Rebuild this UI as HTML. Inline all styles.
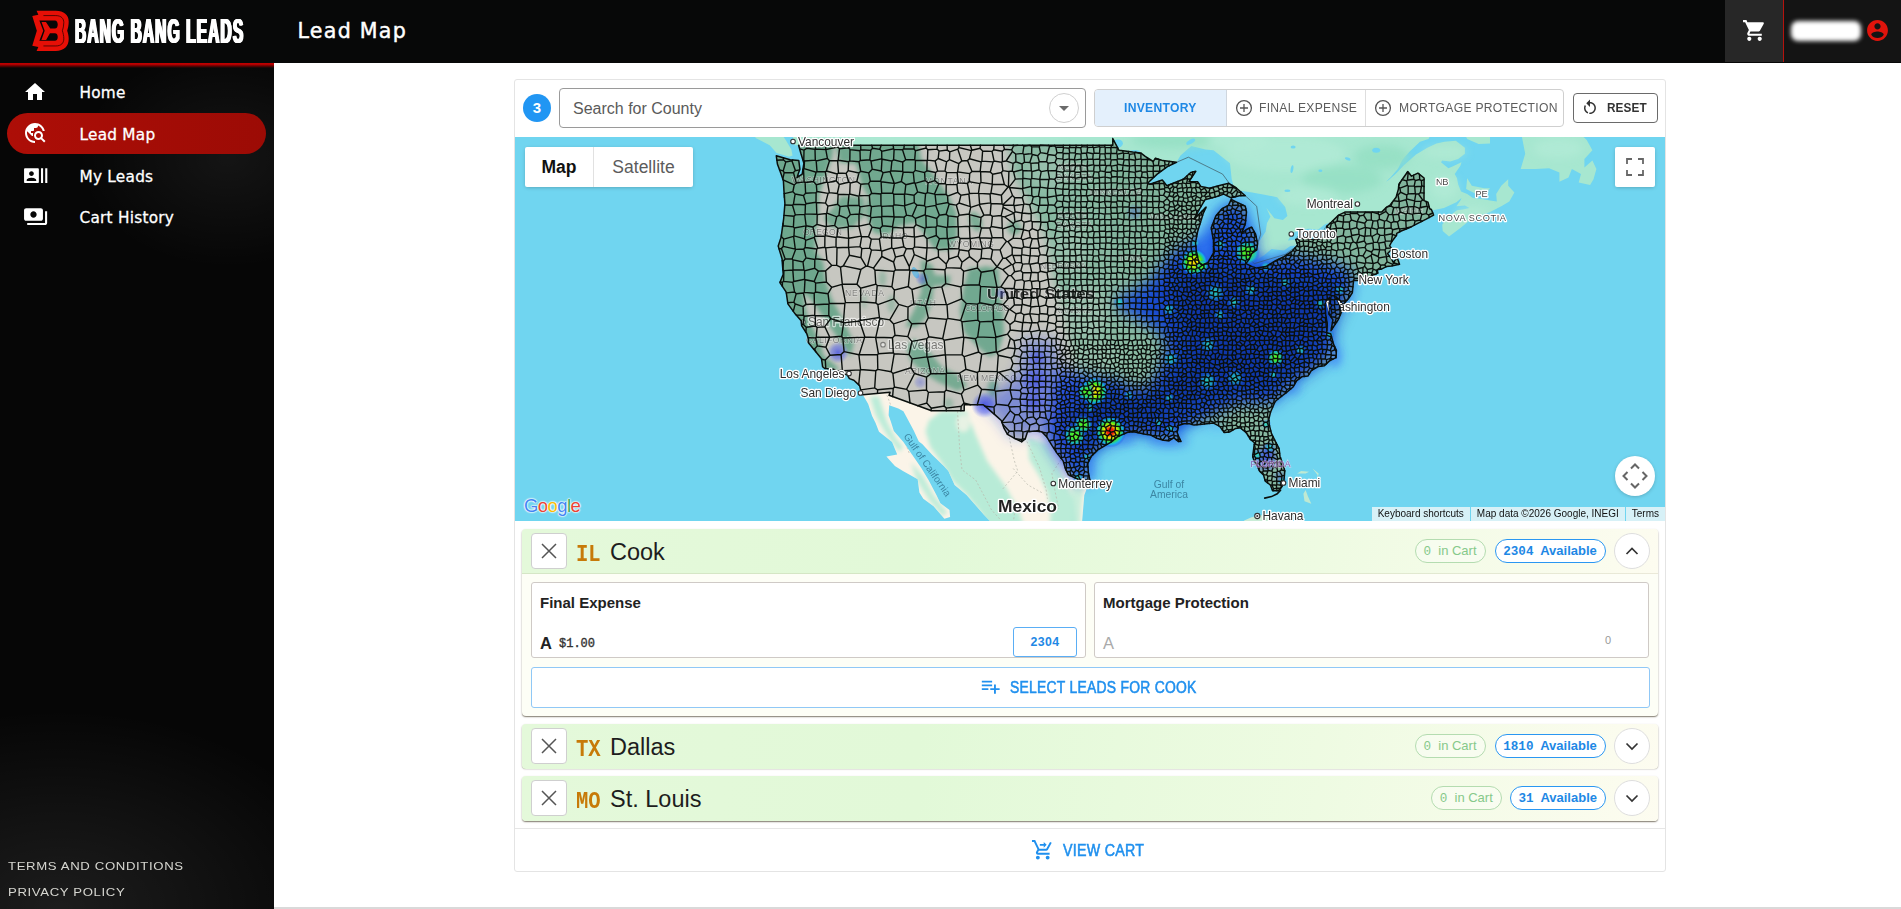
<!DOCTYPE html>
<html lang="en">
<head>
<meta charset="utf-8">
<title>Lead Map</title>
<style>
*{box-sizing:border-box;margin:0;padding:0}
html,body{width:1901px;height:909px;overflow:hidden;background:#fff;font-family:"Liberation Sans",sans-serif;color:#222}
.abs{position:absolute}
#hdr{position:absolute;left:0;top:0;width:1901px;height:63px;background:#070808}
#side{position:absolute;left:0;top:63px;width:274px;height:846px;background:#060606;
 background-image:radial-gradient(ellipse 150px 110px at 228px 95px,rgba(255,255,255,.06),rgba(255,255,255,0) 100%),radial-gradient(ellipse 300px 200px at 60px 846px,rgba(255,255,255,.09),rgba(255,255,255,0) 100%)}
#redline{position:absolute;left:0;top:63px;width:274px;height:5px;background:linear-gradient(#c40000 0%,#b40000 28%,rgba(130,0,0,.75) 60%,rgba(50,0,0,0) 100%)}
.logotxt{position:absolute;left:75.3px;top:8.5px;height:44px;line-height:44px;font-weight:bold;font-size:35.6px;color:#fff;white-space:nowrap;transform-origin:0 50%;transform:scaleX(.437);letter-spacing:2.5px;text-shadow:-2px 0 #fff,2px 0 #fff,-1px 0 #fff,1px 0 #fff}
.title{position:absolute;left:297.5px;top:15px;height:32px;line-height:32px;font-family:"DejaVu Sans","Liberation Sans",sans-serif;font-size:20.6px;letter-spacing:1.25px;color:#fff;white-space:nowrap;-webkit-text-stroke:.45px #fff}
.nav{position:absolute;left:7px;width:259px;height:41px;border-radius:21px;color:#fff;font-family:"DejaVu Sans","Liberation Sans",sans-serif;font-size:15.3px;letter-spacing:.25px;line-height:41px;white-space:nowrap}
.nav span{position:absolute;left:72.5px;top:2.2px;-webkit-text-stroke:.3px #fff}
.nav svg{position:absolute;left:18px;top:10px;width:21px;height:21px;fill:#fff}
.nav.on{background:#a30c06;background-image:linear-gradient(90deg,#ad0e07,#9c0b05)}
.foot{position:absolute;left:8px;color:#d6d6d0;font-size:11.5px;letter-spacing:.55px;white-space:nowrap;transform-origin:0 50%;transform:scaleX(1.145)}
#cartbtn{position:absolute;left:1725px;top:0;width:58px;height:62px;background:#272727}
#cartline{position:absolute;left:1783px;top:0;width:1px;height:62px;background:#b5120d}
#userarea{position:absolute;left:1784px;top:0;width:117px;height:62px;background:#141414}
#blurname{position:absolute;left:1791px;top:21px;width:70px;height:20px;border-radius:7px;background:#fff;filter:blur(2.2px)}
#card{position:absolute;left:514px;top:79px;width:1152px;height:793px;border:1px solid #e4e4e4;border-radius:3px;background:#fff}
#badge{position:absolute;left:523px;top:94px;width:28px;height:28px;border-radius:14px;background:#2196f3;color:#fff;font-weight:bold;font-size:15px;line-height:28px;text-align:center}
#search{position:absolute;left:559px;top:88px;width:527px;height:40px;border:1px solid #9a9a9a;border-radius:4px;background:#fff}
#search span{position:absolute;left:13px;top:1px;line-height:38px;font-size:16px;color:#5a5a5a;white-space:nowrap}
#ddc{position:absolute;left:1049px;top:93px;width:30px;height:30px;border-radius:15px;border:1px solid #d0d0d0;background:#fff}
#ddc i{position:absolute;left:9px;top:12px;width:0;height:0;border-left:5px solid transparent;border-right:5px solid transparent;border-top:5px solid #6b6b6b}
#tg{position:absolute;left:1094px;top:89px;width:470px;height:38px;border:1px solid #cfcfcf;border-radius:4px;background:#fff;overflow:hidden}
#tg .seg{position:absolute;top:0;height:36px;line-height:35.4px;font-size:13.2px;letter-spacing:.3px;color:#5c5c5c;white-space:nowrap}
#tg .seg b{font-weight:normal;position:absolute;top:0;transform-origin:0 50%;transform:scaleX(.92)}
#tg .seg svg{position:absolute;top:9px;width:18px;height:18px}
#reset{position:absolute;left:1573px;top:93px;width:85px;height:30px;border:1px solid #6a6a6a;border-radius:4px;background:#fff}
#reset span{position:absolute;left:33px;top:0;line-height:27.6px;font-size:13px;font-weight:bold;letter-spacing:.1px;color:#333;transform-origin:0 50%;transform:scaleX(.905)}
#map{position:absolute;left:515px;top:137px;width:1150px;height:384px;overflow:hidden;background:#70d5f0}
#map svg.m{position:absolute;left:0;top:0}
.gm{font-family:"Liberation Sans",sans-serif}
#mtype{position:absolute;left:10px;top:10px;width:168px;height:40px;background:#fff;box-shadow:0 1px 4px -1px rgba(0,0,0,.3);border-radius:2px}
#mtype b{position:absolute;left:0;top:0;width:68px;text-align:center;line-height:40px;font-size:17.5px;color:#111}
#mtype i{position:absolute;left:68px;top:0;width:1px;height:40px;background:#e1e1e1}
#mtype span{position:absolute;left:69px;top:0;width:99px;text-align:center;line-height:40px;font-size:17.5px;color:#5c5c5c}
#fs{position:absolute;left:1100px;top:10px;width:40px;height:40px;background:#fff;border-radius:2px;box-shadow:0 1px 4px -1px rgba(0,0,0,.3)}
#cam{position:absolute;left:1100px;top:319px;width:40px;height:40px;background:#fff;border-radius:20px;box-shadow:0 1px 4px -1px rgba(0,0,0,.3)}
#attr{position:absolute;right:0;bottom:0;height:14px;line-height:14px;font-size:10px;color:#111;white-space:nowrap}
#attr span{display:inline-block;height:14px;background:rgba(245,248,248,.78);padding:0 6px;margin-left:1px;vertical-align:top}
.row{position:absolute;left:522px;width:1136px;border-radius:4px;background:#fdfef6;box-shadow:0 1px 1.5px rgba(60,50,30,.65)}
.rh{position:absolute;left:0;top:0;width:1136px;height:45px;border-radius:4px 4px 0 0;background:linear-gradient(100deg,#e4f9da 0%,#e2f9d8 35%,#eefbe2 70%,#fdfcf0 100%)}
.row.c .rh{border-radius:4px}
.row:not(.c) .rh{border-bottom:1px solid rgba(130,120,80,.14)}
.xb{position:absolute;left:9px;top:4px;width:36px;height:36px;border:1px solid #cfcfcf;border-radius:4px;background:#fff}
.st{position:absolute;left:53.5px;top:3px;line-height:45px;font-family:"Liberation Mono","DejaVu Sans Mono",monospace;font-weight:bold;font-size:24.5px;color:#c77a08;white-space:nowrap;transform-origin:0 50%;transform:scaleX(.84)}
.cn{position:absolute;left:88px;top:.5px;line-height:44px;font-size:23.5px;color:#1d1d1d;white-space:nowrap}
.chip{position:absolute;top:10px;height:24px;border-radius:12px;font-size:13px;line-height:22px;white-space:nowrap;text-align:center}
.chip tt{font-family:"Liberation Mono","DejaVu Sans Mono",monospace;font-size:12.6px}
.chip.g{border:1px solid #b4dcb0;color:#86c98a;background:rgba(255,255,255,.35)}
.chip.b{border:1.5px solid #2a97f2;color:#1e88e5;font-weight:bold;background:#fff;line-height:21px}
.exp{position:absolute;left:1092px;top:4px;width:36px;height:36px;border-radius:18px;border:1px solid #dedede;background:#fff}
.box{position:absolute;top:53px;width:555px;height:76px;border:1px solid #cfcac6;border-radius:3px;background:#fff}
.box h4{position:absolute;left:8px;top:9px;font-size:15px;font-weight:bold;color:#222;line-height:22px;white-space:nowrap}
#selbtn{position:absolute;left:9px;top:138px;width:1119px;height:41px;border:1px solid #90c8f6;border-radius:3px;background:#fff}
#selbtn span{position:absolute;left:477.5px;top:-.3px;line-height:39px;font-size:16px;letter-spacing:.3px;color:#2090ee;font-weight:normal;white-space:nowrap;-webkit-text-stroke:.55px #2090ee;transform-origin:0 50%;transform:scaleX(.868)}
#divl{position:absolute;left:515px;top:828px;width:1150px;height:1px;background:#e6e6e6}
#vc{position:absolute;left:1063px;top:838.5px;line-height:24px;font-size:16px;letter-spacing:.3px;color:#2090ee;font-weight:normal;white-space:nowrap;-webkit-text-stroke:.55px #2090ee;transform-origin:0 50%;transform:scaleX(.89)}
#botline{position:absolute;left:274px;top:907px;width:1627px;height:2px;background:#d9d9d9}
</style>
</head>
<body>
<div id="hdr"></div>
<div id="side"></div>
<div id="redline"></div>
<svg class="abs" style="left:30px;top:8px" width="42" height="46" viewBox="0 0 830 909">
<path fill="#e60f06" d="M130 55H510C670 55 765 140 765 265C765 340 750 400 735 450C750 500 765 540 765 615C765 760 670 850 510 850H130L165 770L45 745L135 450L45 160L165 135Z"/>
<path fill="#070707" d="M185 245H490C530 245 548 285 548 325C548 370 530 405 490 405H400L315 275H228L290 450L225 632H318L395 500H490C530 500 548 535 548 572C548 615 530 645 490 645H185L262 450Z"/>
<path fill="none" stroke="#2a0300" stroke-width="15" d="M265 150H510C620 150 668 210 668 290C668 350 655 400 640 450C655 500 668 545 668 610C668 690 620 750 510 750H265"/>
</svg>
<div class="logotxt">BANG BANG LEADS</div>
<div class="title">Lead Map</div>
<div class="nav" style="top:71px"><span>Home</span></div>
<svg class="abs" style="left:23.3px;top:80.3px" width="24" height="24" viewBox="0 0 24 24"><path fill="#fff" d="M10 20v-6h4v6h5v-8h3L12 3 2 12h3v8z"/></svg>
<div class="nav on" style="top:113px"><span>Lead Map</span></div>
<svg class="abs" style="left:23.3px;top:120.6px" width="24" height="24" viewBox="0 0 24 24"><path fill="#fff" d="M19.3 16.9c.4-.7.7-1.5.7-2.4 0-2.5-2-4.5-4.5-4.5S11 12 11 14.5s2 4.5 4.5 4.5c.9 0 1.700-.3 2.4-.7l3.2 3.2 1.400-1.400-3.200-3.200zm-3.800.1c-1.400 0-2.500-1.100-2.500-2.500s1.100-2.500 2.500-2.500 2.500 1.100 2.500 2.500-1.100 2.500-2.500 2.500zM12 20v2C6.480 22 2 17.520 2 12S6.480 2 12 2c4.840 0 8.870 3.440 9.800 8h-2.070c-.64-2.460-2.400-4.470-4.730-5.410V5c0 1.100-.9 2-2 2h-2v2c0 .550-.450 1-1 1H8v2h2v3H9l-4.790-4.790C4.080 10.790 4 11.380 4 12c0 4.410 3.590 8 8 8z"/></svg>
<div class="nav" style="top:154.5px"><span>My Leads</span></div>
<svg class="abs" style="left:22.7px;top:162.5px" width="25.4" height="25.4" viewBox="0 0 24 24"><path fill="#fff" d="M21 5v14h2V5h-2zm-4 14h2V5h-2v14zM14 5H2c-.55 0-1 .45-1 1v12c0 .55.45 1 1 1h12c.55 0 1-.45 1-1V6c0-.55-.45-1-1-1zM8 7.75c1.240 0 2.250 1.010 2.250 2.250S9.240 12.250 8 12.250 5.750 11.240 5.750 10 6.760 7.750 8 7.750zM12.500 17h-9v-.750c0-1.500 3-2.250 4.500-2.250s4.500.750 4.500 2.250V17z"/></svg>
<div class="nav" style="top:196px"><span>Cart History</span></div>
<svg class="abs" style="left:22.8px;top:203.6px" width="25.2" height="25.2" viewBox="0 0 24 24"><path fill="#fff" d="M19 14V6c0-1.100-.9-2-2-2H3c-1.100 0-2 .9-2 2v8c0 1.100.9 2 2 2h14c1.100 0 2-.9 2-2zm-9-1c-1.660 0-3-1.340-3-3s1.340-3 3-3 3 1.340 3 3-1.340 3-3 3zm13-6v11c0 1.100-.9 2-2 2H4v-2h17V7h2z"/></svg>
<div class="foot" style="top:859.5px">TERMS AND CONDITIONS</div>
<div class="foot" style="top:885.5px">PRIVACY POLICY</div>
<div id="cartbtn"></div><div id="cartline"></div><div id="userarea"></div><div id="blurname"></div>
<svg class="abs" style="left:1741.5px;top:18.1px" width="25" height="25" viewBox="0 0 24 24" ><path fill="#fff" d="M7 18c-1.100 0-1.990.9-1.990 2S5.900 22 7 22s2-.9 2-2-.9-2-2-2zM1 2v2h2l3.600 7.590-1.350 2.450c-.160.280-.250.610-.250.960 0 1.100.9 2 2 2h12v-2H7.420c-.140 0-.250-.110-.250-.250l.030-.120.9-1.630h7.450c.750 0 1.410-.410 1.750-1.030l3.580-6.490c.080-.140.120-.310.120-.480 0-.550-.450-1-1-1H5.210l-.940-2H1zm16 16c-1.100 0-1.990.9-1.990 2s.890 2 1.990 2 2-.9 2-2-.9-2-2-2z"/></svg><svg class="abs" style="left:1865.1px;top:17.5px" width="25" height="25" viewBox="0 0 24 24" ><path fill="#e0140c" d="M12 2C6.480 2 2 6.480 2 12s4.480 10 10 10 10-4.480 10-10S17.520 2 12 2zm0 3c1.660 0 3 1.340 3 3s-1.340 3-3 3-3-1.340-3-3 1.340-3 3-3zm0 14.200c-2.500 0-4.710-1.280-6-3.220.030-1.990 4-3.080 6-3.080 1.990 0 5.970 1.090 6 3.080-1.290 1.940-3.500 3.220-6 3.220z"/></svg>
<div id="card"></div>
<div id="badge">3</div>
<div id="search"><span>Search for County</span></div>
<div id="ddc"><i></i></div>
<div id="tg"><div class="seg" style="left:0;width:132px;background:#e4f0fc;border-right:1px solid #cfd6de"><b style="left:29px;color:#1e88e5;font-weight:bold">INVENTORY</b></div><div class="seg" style="left:132px;width:139px;border-right:1px solid #dedede"><svg viewBox="0 0 18 18" style="left:8px"><circle cx="9" cy="9" r="7.4" fill="none" stroke="#555" stroke-width="1.3"/><path d="M9 5v8M5 9h8" stroke="#555" stroke-width="1.3" fill="none"/></svg><b style="left:32px">FINAL EXPENSE</b></div><div class="seg" style="left:271px;width:198px"><svg viewBox="0 0 18 18" style="left:8px"><circle cx="9" cy="9" r="7.4" fill="none" stroke="#555" stroke-width="1.3"/><path d="M9 5v8M5 9h8" stroke="#555" stroke-width="1.3" fill="none"/></svg><b style="left:33px">MORTGAGE PROTECTION</b></div></div><div id="reset"><svg class="abs" style="left:7px;top:5px" width="18" height="18" viewBox="0 0 24 24"><path fill="#333" d="M12 4C14.100 4 16.100 4.800 17.600 6.300C20.700 9.400 20.700 14.500 17.600 17.600C15.800 19.500 13.300 20.200 10.900 19.900L11.400 17.900C13.100 18.100 14.900 17.500 16.200 16.200C18.500 13.900 18.500 10.100 16.200 7.700C15.100 6.600 13.500 6 12 6V10.600L7 5.600L12 .6V4M6.300 17.600C3.700 15 3.300 11 5.100 7.900L6.600 9.400C5.500 11.600 5.900 14.400 7.800 16.200C8.300 16.700 8.900 17.100 9.600 17.400L9 19.400C8 19 7.100 18.400 6.300 17.600Z"/></svg><span>RESET</span></div>
<div id="map">
<svg class="m" width="1150" height="384" viewBox="0 0 1150 384">
<defs>
<filter id="b2" x="-20%" y="-20%" width="140%" height="140%"><feGaussianBlur stdDeviation="2"/></filter>
<filter id="b4" x="-20%" y="-20%" width="140%" height="140%"><feGaussianBlur stdDeviation="4"/></filter>
<filter id="b7" x="-20%" y="-20%" width="140%" height="140%"><feGaussianBlur stdDeviation="7"/></filter>
<filter id="b10" x="-30%" y="-30%" width="160%" height="160%"><feGaussianBlur stdDeviation="10"/></filter>
<clipPath id="usc"><polygon points="261.3,18.8 262.4,27.0 266.1,37.1 268.4,43.8 269.0,54.6 269.9,66.8 268.7,81.3 266.1,100.3 263.2,109.1 267.1,122.0 267.3,125.8 268.2,137.2 264.9,145.6 271.2,155.1 272.9,166.9 280.3,177.1 286.6,184.3 286.6,188.6 291.7,196.5 293.4,201.5 293.4,205.7 300.8,214.8 306.5,221.8 307.6,229.7 309.7,231.5 318.5,232.2 325.3,236.3 332.1,237.7 334.4,241.6 338.9,243.2 344.6,248.6 346.3,255.4 347.8,257.7 375.1,255.2 374.1,258.3 416.6,273.8 449.2,273.8 449.2,267.8 468.3,267.8 474.3,272.9 481.2,278.9 486.3,283.5 489.1,291.4 492.5,297.3 500.5,301.9 506.8,304.7 510.2,301.9 512.5,294.7 519.8,294.0 526.7,294.7 531.8,299.9 536.9,308.4 542.0,316.1 548.1,323.9 550.6,332.2 553.4,337.9 563.1,342.3 569.9,343.6 575.0,343.6 573.3,335.3 572.8,326.4 576.2,319.4 583.6,312.3 596.1,305.1 602.3,299.9 612.6,295.3 618.8,294.7 630.2,297.3 635.9,298.0 641.6,301.2 648.4,303.2 654.1,303.8 658.7,300.6 663.2,304.5 666.1,304.5 663.8,299.9 662.1,295.3 663.2,290.7 662.6,288.8 668.9,286.8 674.6,286.8 679.1,288.1 684.8,287.5 691.7,286.8 698.5,286.1 704.7,289.4 709.3,295.6 714.4,295.1 720.7,291.4 725.2,290.7 731.5,296.0 735.5,302.5 739.4,305.8 738.3,314.8 737.7,319.4 738.9,323.2 742.9,330.3 744.6,334.1 748.5,337.9 750.3,344.2 755.4,348.0 757.6,353.7 763.3,353.7 766.7,349.9 768.7,345.9 769.8,334.1 768.2,327.7 765.0,319.4 764.1,311.6 761.1,305.8 756.5,296.6 754.2,287.5 753.9,282.2 755.4,275.5 759.4,266.2 760.5,264.2 764.5,260.8 770.7,256.1 778.1,250.0 781.5,243.9 786.7,239.8 792.9,239.1 796.3,233.6 803.2,229.5 809.4,228.8 814.5,223.9 821.0,220.7 821.4,213.4 818.5,207.1 817.2,202.2 815.7,196.8 811.7,195.8 812.3,187.2 810.6,177.1 810.0,166.9 814.5,160.3 813.4,166.9 814.0,177.1 817.9,182.9 816.0,193.6 823.1,182.9 826.5,174.9 825.9,169.8 821.9,162.5 820.8,159.6 825.3,164.0 827.8,167.9 833.9,161.0 837.3,155.9 838.4,145.5 838.4,143.2 843.0,143.5 852.1,141.0 862.8,136.1 862.3,132.7 866.9,131.9 871.4,129.6 876.5,128.9 884.5,127.3 882.2,120.8 878.3,125.4 876.5,122.0 872.6,116.6 877.1,112.0 874.6,108.9 876.5,105.0 881.7,98.0 881.7,96.4 886.2,94.0 894.2,90.9 903.3,86.1 911.2,82.1 918.6,78.1 916.4,72.5 914.7,71.7 913.0,65.2 909.0,63.6 909.1,41.0 902.9,36.1 896.5,39.2 892.8,34.5 883.9,47.2 883.4,52.1 881.1,60.3 874.8,68.5 871.7,70.1 866.9,74.9 830.5,74.9 823.6,78.1 816.2,85.3 811.7,89.3 813.4,97.2 805.4,101.9 797.5,102.4 787.2,101.1 780.7,102.5 782.7,108.1 777.0,114.3 769.0,119.7 761.1,123.5 750.8,129.6 741.7,131.1 737.2,129.6 730.9,126.6 734.3,122.0 736.6,116.6 741.7,112.8 742.6,106.6 740.6,97.2 736.6,90.1 731.5,92.5 726.4,96.4 730.3,86.9 731.5,74.9 730.3,69.3 720.1,64.4 716.3,62.3 713.3,68.5 707.0,71.7 700.8,78.9 696.2,90.9 698.5,103.5 698.5,115.9 692.8,125.8 687.7,127.8 684.3,125.8 683.1,122.0 681.4,114.3 680.5,105.8 682.6,94.8 688.2,76.5 691.1,70.1 679.1,82.1 683.7,73.3 689.9,62.8 701.9,59.5 708.7,57.1 716.3,60.8 724.6,58.7 730.3,58.7 720.7,50.5 713.8,46.3 706.4,48.0 694.5,51.3 686.0,49.6 682.6,44.7 674.0,44.7 680.8,34.3 675.7,35.5 668.3,42.2 651.8,48.8 647.3,43.0 634.8,47.2 632.5,46.3 642.2,37.1 652.4,29.6 661.5,25.3 647.8,23.6 640.5,21.1 638.2,24.5 630.2,19.4 625.7,15.9 617.7,15.1 604.0,13.3 597.8,1.5 597.8,8.2 283.6,8.2 286.0,16.8 288.9,26.2 287.2,37.1 282.0,40.5 284.9,32.1 283.8,23.6 275.2,22.8"/></clipPath>
<clipPath id="mexc"><polygon points="347.8,257.7 353.2,266.9 357.1,278.9 360.6,286.1 364.0,294.7 377.1,305.1 382.2,317.4 371.4,319.4 379.9,329.0 387.9,334.1 402.7,342.3 404.4,355.6 408.3,361.8 418.6,369.3 429.4,381.7 435.1,379.9 434.5,373.0 425.4,366.2 421.4,358.1 413.5,343.0 406.6,331.5 402.7,325.8 397.0,317.4 388.4,305.1 378.8,294.0 375.9,284.8 373.6,278.2 374.2,268.2 383.3,271.5 388.4,274.2 394.7,286.1 398.7,293.4 403.8,304.5 407.2,307.1 417.4,318.1 428.8,329.0 433.4,334.1 439.6,348.0 451.6,358.1 469.2,378.0 477.7,386.7 482.3,405.0 573.3,405.0 567.1,389.7 567.1,384.2 568.2,371.2 569.3,358.1 575.0,343.6 569.9,343.6 563.1,342.3 553.4,337.9 550.6,332.2 548.1,323.9 542.0,316.1 536.9,308.4 531.8,299.9 526.7,294.7 519.8,294.0 512.5,294.7 510.2,301.9 506.8,304.7 500.5,301.9 492.5,297.3 489.1,291.4 486.3,283.5 481.2,278.9 474.3,272.9 468.3,267.8 449.2,267.8 449.2,273.8 416.6,273.8 374.1,258.3 375.1,255.2"/></clipPath>
<clipPath id="notus"><path clip-rule="evenodd" d="M0 0H1150V384H0ZM261.3,18.8L262.4,27.0L266.1,37.1L268.4,43.8L269.0,54.6L269.9,66.8L268.7,81.3L266.1,100.3L263.2,109.1L267.1,122.0L267.3,125.8L268.2,137.2L264.9,145.6L271.2,155.1L272.9,166.9L280.3,177.1L286.6,184.3L286.6,188.6L291.7,196.5L293.4,201.5L293.4,205.7L300.8,214.8L306.5,221.8L307.6,229.7L309.7,231.5L318.5,232.2L325.3,236.3L332.1,237.7L334.4,241.6L338.9,243.2L344.6,248.6L346.3,255.4L347.8,257.7L375.1,255.2L374.1,258.3L416.6,273.8L449.2,273.8L449.2,267.8L468.3,267.8L474.3,272.9L481.2,278.9L486.3,283.5L489.1,291.4L492.5,297.3L500.5,301.9L506.8,304.7L510.2,301.9L512.5,294.7L519.8,294.0L526.7,294.7L531.8,299.9L536.9,308.4L542.0,316.1L548.1,323.9L550.6,332.2L553.4,337.9L563.1,342.3L569.9,343.6L575.0,343.6L573.3,335.3L572.8,326.4L576.2,319.4L583.6,312.3L596.1,305.1L602.3,299.9L612.6,295.3L618.8,294.7L630.2,297.3L635.9,298.0L641.6,301.2L648.4,303.2L654.1,303.8L658.7,300.6L663.2,304.5L666.1,304.5L663.8,299.9L662.1,295.3L663.2,290.7L662.6,288.8L668.9,286.8L674.6,286.8L679.1,288.1L684.8,287.5L691.7,286.8L698.5,286.1L704.7,289.4L709.3,295.6L714.4,295.1L720.7,291.4L725.2,290.7L731.5,296.0L735.5,302.5L739.4,305.8L738.3,314.8L737.7,319.4L738.9,323.2L742.9,330.3L744.6,334.1L748.5,337.9L750.3,344.2L755.4,348.0L757.6,353.7L763.3,353.7L766.7,349.9L768.7,345.9L769.8,334.1L768.2,327.7L765.0,319.4L764.1,311.6L761.1,305.8L756.5,296.6L754.2,287.5L753.9,282.2L755.4,275.5L759.4,266.2L760.5,264.2L764.5,260.8L770.7,256.1L778.1,250.0L781.5,243.9L786.7,239.8L792.9,239.1L796.3,233.6L803.2,229.5L809.4,228.8L814.5,223.9L821.0,220.7L821.4,213.4L818.5,207.1L817.2,202.2L815.7,196.8L811.7,195.8L812.3,187.2L810.6,177.1L810.0,166.9L814.5,160.3L813.4,166.9L814.0,177.1L817.9,182.9L816.0,193.6L823.1,182.9L826.5,174.9L825.9,169.8L821.9,162.5L820.8,159.6L825.3,164.0L827.8,167.9L833.9,161.0L837.3,155.9L838.4,145.5L838.4,143.2L843.0,143.5L852.1,141.0L862.8,136.1L862.3,132.7L866.9,131.9L871.4,129.6L876.5,128.9L884.5,127.3L882.2,120.8L878.3,125.4L876.5,122.0L872.6,116.6L877.1,112.0L874.6,108.9L876.5,105.0L881.7,98.0L881.7,96.4L886.2,94.0L894.2,90.9L903.3,86.1L911.2,82.1L918.6,78.1L916.4,72.5L914.7,71.7L913.0,65.2L909.0,63.6L909.1,41.0L902.9,36.1L896.5,39.2L892.8,34.5L883.9,47.2L883.4,52.1L881.1,60.3L874.8,68.5L871.7,70.1L866.9,74.9L830.5,74.9L823.6,78.1L816.2,85.3L811.7,89.3L813.4,97.2L805.4,101.9L797.5,102.4L787.2,101.1L780.7,102.5L782.7,108.1L777.0,114.3L769.0,119.7L761.1,123.5L750.8,129.6L741.7,131.1L737.2,129.6L730.9,126.6L734.3,122.0L736.6,116.6L741.7,112.8L742.6,106.6L740.6,97.2L736.6,90.1L731.5,92.5L726.4,96.4L730.3,86.9L731.5,74.9L730.3,69.3L720.1,64.4L716.3,62.3L713.3,68.5L707.0,71.7L700.8,78.9L696.2,90.9L698.5,103.5L698.5,115.9L692.8,125.8L687.7,127.8L684.3,125.8L683.1,122.0L681.4,114.3L680.5,105.8L682.6,94.8L688.2,76.5L691.1,70.1L679.1,82.1L683.7,73.3L689.9,62.8L701.9,59.5L708.7,57.1L716.3,60.8L724.6,58.7L730.3,58.7L720.7,50.5L713.8,46.3L706.4,48.0L694.5,51.3L686.0,49.6L682.6,44.7L674.0,44.7L680.8,34.3L675.7,35.5L668.3,42.2L651.8,48.8L647.3,43.0L634.8,47.2L632.5,46.3L642.2,37.1L652.4,29.6L661.5,25.3L647.8,23.6L640.5,21.1L638.2,24.5L630.2,19.4L625.7,15.9L617.7,15.1L604.0,13.3L597.8,1.5L597.8,8.2L283.6,8.2L286.0,16.8L288.9,26.2L287.2,37.1L282.0,40.5L284.9,32.1L283.8,23.6L275.2,22.8Z"/></clipPath>
<radialGradient id="hot"><stop offset="0" stop-color="#f01008"/><stop offset=".2" stop-color="#f02008"/><stop offset=".38" stop-color="#f8e000"/><stop offset=".6" stop-color="#40e820"/><stop offset=".8" stop-color="#10c0e8" stop-opacity=".8"/><stop offset="1" stop-color="#2030f0" stop-opacity="0"/></radialGradient>
<radialGradient id="warm"><stop offset="0" stop-color="#f8c800"/><stop offset=".25" stop-color="#f0e800"/><stop offset=".55" stop-color="#40e820"/><stop offset=".8" stop-color="#10c0e8" stop-opacity=".8"/><stop offset="1" stop-color="#2030f0" stop-opacity="0"/></radialGradient>
<radialGradient id="grn"><stop offset="0" stop-color="#60f020"/><stop offset=".35" stop-color="#40e830"/><stop offset=".7" stop-color="#18c8c8" stop-opacity=".8"/><stop offset="1" stop-color="#2040f0" stop-opacity="0"/></radialGradient>
<radialGradient id="cy"><stop offset="0" stop-color="#30e8b0" stop-opacity="1"/><stop offset=".45" stop-color="#20c0d0" stop-opacity=".8"/><stop offset="1" stop-color="#2040f0" stop-opacity="0"/></radialGradient>
<radialGradient id="bl"><stop offset="0" stop-color="#2838e8" stop-opacity=".75"/><stop offset=".6" stop-color="#3848f0" stop-opacity=".45"/><stop offset="1" stop-color="#4860f8" stop-opacity="0"/></radialGradient>
</defs>
<rect width="1150" height="384" fill="#70d5f0"/>
<polygon points="597.8,-18.3 597.8,1.5 604.0,13.3 617.7,15.1 625.7,15.9 630.2,19.4 638.2,24.5 640.5,21.1 647.8,23.6 661.5,25.3 665.5,18.5 676.3,9.0 690.5,12.5 698.5,13.3 715.0,26.2 716.7,42.2 719.0,50.5 725.8,53.8 737.2,55.4 750.8,57.9 762.2,60.3 770.2,70.1 772.4,78.9 767.9,82.9 759.4,81.3 751.4,70.9 755.4,79.7 752.0,86.1 750.6,94.8 742.9,106.6 741.7,112.8 735.5,117.4 734.9,121.2 741.7,122.8 749.1,118.2 756.5,112.0 769.0,113.5 775.3,108.9 782.1,108.6 780.7,102.7 773.0,103.5 777.2,96.4 785.0,92.5 794.1,91.7 803.2,92.5 810.0,87.2 816.2,85.3 823.6,78.1 830.5,74.9 866.9,74.9 871.7,70.1 874.8,68.5 881.1,60.3 883.4,52.1 883.9,47.2 892.8,34.5 896.5,39.2 902.9,36.1 909.1,41.0 909.0,63.6 913.0,65.2 914.7,71.7 916.4,72.5 918.1,73.3 928.9,70.9 941.4,65.2 946.5,61.1 945.4,63.6 941.4,69.3 949.9,68.5 954.5,70.9 947.7,72.5 942.0,73.3 932.3,80.5 927.2,87.7 927.7,94.0 934.0,99.5 945.4,90.9 957.3,81.3 975.0,74.9 986.3,69.3 994.3,64.4 999.4,55.4 993.2,48.8 993.2,42.2 986.3,48.8 981.2,57.1 981.8,64.4 975.0,63.6 967.0,62.0 957.9,61.1 952.2,57.1 946.0,54.6 943.1,47.2 942.0,41.3 939.7,37.1 945.4,28.7 946.5,25.3 937.4,29.6 933.4,31.3 926.0,25.3 927.2,23.6 935.1,24.5 943.1,21.9 949.9,16.8 949.9,10.8 940.8,3.8 929.5,4.7 921.5,6.4 912.4,10.8 901.0,17.6 889.1,27.9 880.5,37.1 873.7,43.0 870.9,44.7 875.4,40.5 882.8,32.1 887.4,22.8 894.2,15.1 905.0,4.7 913.5,2.1 923.8,-18.3" fill="#a7e7d0"/>
<polygon points="277.5,-18.3 278.1,2.9 279.8,8.2 283.6,8.2 597.8,8.2 597.8,1.5 597.8,-18.3" fill="#a7e7d0"/>
<polygon points="255.9,-18.3 270.7,2.9 276.4,12.5 277.5,18.5 274.1,19.7 261.6,15.9 254.7,8.2 241.1,1.2 224.0,-18.3" fill="#a7e7d0"/>
<polygon points="969.3,58.7 961.3,57.1 951.1,52.1 952.2,41.3 956.8,48.8 969.3,51.3 975.0,51.3" fill="#a7e7d0"/>
<polygon points="1003.4,-18.3 1010.2,16.8 1005.7,32.1 1020.5,32.1 1034.1,31.3 1044.4,35.5 1044.4,44.7 1053.5,40.5 1056.9,32.1 1066.0,37.1 1063.7,45.5 1075.1,48.0 1078.5,42.2 1081.4,32.1 1077.4,23.6 1069.4,30.4 1069.4,21.9 1077.4,13.3 1071.7,2.9 1048.9,-18.3" fill="#a7e7d0"/>
<polygon points="975.0,6.4 963.6,7.1 952.2,2.1 947.7,-6.7 957.9,-18.3 975.0,-18.3" fill="#a7e7d0"/>
<polygon points="347.8,257.7 353.2,266.9 357.1,278.9 360.6,286.1 364.0,294.7 377.1,305.1 382.2,317.4 371.4,319.4 379.9,329.0 387.9,334.1 402.7,342.3 404.4,355.6 408.3,361.8 418.6,369.3 429.4,381.7 435.1,379.9 434.5,373.0 425.4,366.2 421.4,358.1 413.5,343.0 406.6,331.5 402.7,325.8 397.0,317.4 388.4,305.1 378.8,294.0 375.9,284.8 373.6,278.2 374.2,268.2 383.3,271.5 388.4,274.2 394.7,286.1 398.7,293.4 403.8,304.5 407.2,307.1 417.4,318.1 428.8,329.0 433.4,334.1 439.6,348.0 451.6,358.1 469.2,378.0 477.7,386.7 482.3,405.0 573.3,405.0 567.1,389.7 567.1,384.2 568.2,371.2 569.3,358.1 575.0,343.6 569.9,343.6 563.1,342.3 553.4,337.9 550.6,332.2 548.1,323.9 542.0,316.1 536.9,308.4 531.8,299.9 526.7,294.7 519.8,294.0 512.5,294.7 510.2,301.9 506.8,304.7 500.5,301.9 492.5,297.3 489.1,291.4 486.3,283.5 481.2,278.9 474.3,272.9 468.3,267.8 449.2,267.8 449.2,273.8 416.6,273.8 374.1,258.3 375.1,255.2" fill="#fbf4e8"/>
<polygon points="719.0,405.0 720.1,392.8 729.2,383.6 736.0,380.5 742.9,378.6 752.0,378.0 758.8,379.2 764.5,379.9 772.4,384.2 783.8,389.1 792.9,405.0" fill="#c9ecd6"/>
<polygon points="782.1,336.6 786.1,334.1 794.1,334.7 790.6,336.6" fill="#bfe9d2"/>
<polygon points="790.6,353.1 792.9,359.3 796.3,366.8 789.5,364.3 788.4,356.8" fill="#bfe9d2"/>
<polygon points="797.5,331.5 803.7,336.6 802.0,343.0 802.6,337.9" fill="#bfe9d2"/>
<g filter="url(#b4)">
<ellipse cx="770.2" cy="16.8" rx="60" ry="18" fill="#b6ecd9" opacity="0.55"/>
<ellipse cx="827.1" cy="42.2" rx="40" ry="14" fill="#93dfc3" opacity="0.8"/>
<ellipse cx="792.9" cy="58.7" rx="30" ry="10" fill="#b6ecd9" opacity="0.55"/>
<ellipse cx="866.9" cy="20.2" rx="28" ry="12" fill="#93dfc3" opacity="0.8"/>
<ellipse cx="929.5" cy="15.1" rx="22" ry="6" fill="#b6ecd9" opacity="0.55"/>
<ellipse cx="929.5" cy="50.5" rx="14" ry="12" fill="#b6ecd9" opacity="0.55"/>
<ellipse cx="656.4" cy="2.9" rx="40" ry="8" fill="#93dfc3" opacity="0.8"/>
<ellipse cx="1043.2" cy="11.6" rx="25" ry="10" fill="#b6ecd9" opacity="0.55"/>
<ellipse cx="428.8" cy="2.9" rx="120" ry="4" fill="#b6ecd9" opacity="0.55"/>
<ellipse cx="957.9" cy="74.9" rx="18" ry="6" fill="#b6ecd9" opacity="0.55"/>
<ellipse cx="724.6" cy="2.9" rx="30" ry="10" fill="#b6ecd9" opacity="0.55"/>
</g>
<g fill="#70d5f0">
<ellipse cx="861.2" cy="13.3" rx="4" ry="2.5" transform="rotate(0 861.2 13.3)"/>
<ellipse cx="675.7" cy="4.7" rx="5" ry="2" transform="rotate(-30 675.7 4.7)"/>
<ellipse cx="778.1" cy="9.9" rx="2.5" ry="1.5" transform="rotate(0 778.1 9.9)"/>
<ellipse cx="772.4" cy="53.8" rx="3" ry="1.2" transform="rotate(0 772.4 53.8)"/>
<ellipse cx="777.0" cy="32.1" rx="1.3" ry="4" transform="rotate(10 777.0 32.1)"/>
<ellipse cx="620.0" cy="15.1" rx="5" ry="2" transform="rotate(0 620.0 15.1)"/>
<ellipse cx="602.9" cy="6.4" rx="5" ry="4" transform="rotate(0 602.9 6.4)"/>
<ellipse cx="832.7" cy="21.9" rx="3" ry="1.4" transform="rotate(20 832.7 21.9)"/>
<ellipse cx="805.4" cy="33.8" rx="2" ry="1.2" transform="rotate(0 805.4 33.8)"/>
</g><g filter="url(#b2)" clip-path="url(#mexc)">
<polygon points="426.5,274.2 451.6,274.2 460.7,298.0 472.1,323.9 490.3,349.3 503.9,374.3 514.2,405.0 468.6,405.0 467.5,378.0 451.6,358.1 436.8,343.0 425.4,323.9 415.2,309.7 410.6,294.0 414.0,283.5" fill="#b4ebd6" opacity="0.95"/>
<polygon points="513.0,300.6 531.2,307.1 542.6,327.7 549.4,343.0 558.5,361.8 563.1,405.0 533.5,405.0 535.8,374.3 532.4,355.6 524.4,339.2 514.2,322.6" fill="#b4ebd6" opacity="0.9"/>
<polygon points="555.1,343.0 569.9,345.5 566.5,368.1 565.4,392.8 556.3,392.8 557.4,361.8" fill="#b4ebd6" opacity="0.7"/>
<polygon points="354.9,259.5 364.0,259.5 371.9,284.8 381.0,301.9 387.9,309.7 384.4,314.8 371.9,298.0 360.6,278.2" fill="#b4ebd6" opacity="0.9"/>
<polygon points="395.8,325.1 408.3,339.2 418.6,358.1 432.2,375.5 427.7,379.2 414.0,363.1 401.5,343.0" fill="#b4ebd6" opacity="0.85"/>
<ellipse cx="448.2" cy="286.1" rx="7" ry="9" fill="#fbf4e8" opacity="0.7"/>
<ellipse cx="494.8" cy="327.7" rx="10" ry="12" fill="#fbf4e8" opacity="0.0"/>
</g>
<g fill="none" stroke="#b9b9ae" stroke-width=".7" stroke-dasharray="2 2" clip-path="url(#mexc)">
<polyline points="371.9,258.1 394.7,317.4"/>
<polyline points="442.5,274.2 444.8,313.6 447.0,332.8 460.7,343.0"/>
<polyline points="492.5,292.7 499.4,323.9 502.8,334.1 486.8,353.1"/>
<polyline points="511.9,304.5 524.4,330.3 531.2,353.1 532.4,361.8"/>
<polyline points="546.0,322.6 536.9,336.6 540.3,355.6 543.7,371.8"/>
<polyline points="498.2,331.5 513.0,348.0 526.7,355.6"/>
<polyline points="460.7,343.0 476.6,373.0 485.7,383.0"/>
<polyline points="492.5,361.8 499.4,376.8 498.2,386.7"/>
</g>
<polygon points="261.3,18.8 262.4,27.0 266.1,37.1 268.4,43.8 269.0,54.6 269.9,66.8 268.7,81.3 266.1,100.3 263.2,109.1 267.1,122.0 267.3,125.8 268.2,137.2 264.9,145.6 271.2,155.1 272.9,166.9 280.3,177.1 286.6,184.3 286.6,188.6 291.7,196.5 293.4,201.5 293.4,205.7 300.8,214.8 306.5,221.8 307.6,229.7 309.7,231.5 318.5,232.2 325.3,236.3 332.1,237.7 334.4,241.6 338.9,243.2 344.6,248.6 346.3,255.4 347.8,257.7 375.1,255.2 374.1,258.3 416.6,273.8 449.2,273.8 449.2,267.8 468.3,267.8 474.3,272.9 481.2,278.9 486.3,283.5 489.1,291.4 492.5,297.3 500.5,301.9 506.8,304.7 510.2,301.9 512.5,294.7 519.8,294.0 526.7,294.7 531.8,299.9 536.9,308.4 542.0,316.1 548.1,323.9 550.6,332.2 553.4,337.9 563.1,342.3 569.9,343.6 575.0,343.6 573.3,335.3 572.8,326.4 576.2,319.4 583.6,312.3 596.1,305.1 602.3,299.9 612.6,295.3 618.8,294.7 630.2,297.3 635.9,298.0 641.6,301.2 648.4,303.2 654.1,303.8 658.7,300.6 663.2,304.5 666.1,304.5 663.8,299.9 662.1,295.3 663.2,290.7 662.6,288.8 668.9,286.8 674.6,286.8 679.1,288.1 684.8,287.5 691.7,286.8 698.5,286.1 704.7,289.4 709.3,295.6 714.4,295.1 720.7,291.4 725.2,290.7 731.5,296.0 735.5,302.5 739.4,305.8 738.3,314.8 737.7,319.4 738.9,323.2 742.9,330.3 744.6,334.1 748.5,337.9 750.3,344.2 755.4,348.0 757.6,353.7 763.3,353.7 766.7,349.9 768.7,345.9 769.8,334.1 768.2,327.7 765.0,319.4 764.1,311.6 761.1,305.8 756.5,296.6 754.2,287.5 753.9,282.2 755.4,275.5 759.4,266.2 760.5,264.2 764.5,260.8 770.7,256.1 778.1,250.0 781.5,243.9 786.7,239.8 792.9,239.1 796.3,233.6 803.2,229.5 809.4,228.8 814.5,223.9 821.0,220.7 821.4,213.4 818.5,207.1 817.2,202.2 815.7,196.8 811.7,195.8 812.3,187.2 810.6,177.1 810.0,166.9 814.5,160.3 813.4,166.9 814.0,177.1 817.9,182.9 816.0,193.6 823.1,182.9 826.5,174.9 825.9,169.8 821.9,162.5 820.8,159.6 825.3,164.0 827.8,167.9 833.9,161.0 837.3,155.9 838.4,145.5 838.4,143.2 843.0,143.5 852.1,141.0 862.8,136.1 862.3,132.7 866.9,131.9 871.4,129.6 876.5,128.9 884.5,127.3 882.2,120.8 878.3,125.4 876.5,122.0 872.6,116.6 877.1,112.0 874.6,108.9 876.5,105.0 881.7,98.0 881.7,96.4 886.2,94.0 894.2,90.9 903.3,86.1 911.2,82.1 918.6,78.1 916.4,72.5 914.7,71.7 913.0,65.2 909.0,63.6 909.1,41.0 902.9,36.1 896.5,39.2 892.8,34.5 883.9,47.2 883.4,52.1 881.1,60.3 874.8,68.5 871.7,70.1 866.9,74.9 830.5,74.9 823.6,78.1 816.2,85.3 811.7,89.3 813.4,97.2 805.4,101.9 797.5,102.4 787.2,101.1 780.7,102.5 782.7,108.1 777.0,114.3 769.0,119.7 761.1,123.5 750.8,129.6 741.7,131.1 737.2,129.6 730.9,126.6 734.3,122.0 736.6,116.6 741.7,112.8 742.6,106.6 740.6,97.2 736.6,90.1 731.5,92.5 726.4,96.4 730.3,86.9 731.5,74.9 730.3,69.3 720.1,64.4 716.3,62.3 713.3,68.5 707.0,71.7 700.8,78.9 696.2,90.9 698.5,103.5 698.5,115.9 692.8,125.8 687.7,127.8 684.3,125.8 683.1,122.0 681.4,114.3 680.5,105.8 682.6,94.8 688.2,76.5 691.1,70.1 679.1,82.1 683.7,73.3 689.9,62.8 701.9,59.5 708.7,57.1 716.3,60.8 724.6,58.7 730.3,58.7 720.7,50.5 713.8,46.3 706.4,48.0 694.5,51.3 686.0,49.6 682.6,44.7 674.0,44.7 680.8,34.3 675.7,35.5 668.3,42.2 651.8,48.8 647.3,43.0 634.8,47.2 632.5,46.3 642.2,37.1 652.4,29.6 661.5,25.3 647.8,23.6 640.5,21.1 638.2,24.5 630.2,19.4 625.7,15.9 617.7,15.1 604.0,13.3 597.8,1.5 597.8,8.2 283.6,8.2 286.0,16.8 288.9,26.2 287.2,37.1 282.0,40.5 284.9,32.1 283.8,23.6 275.2,22.8" fill="#c7c7c1"/>
<g clip-path="url(#usc)"><g filter="url(#b4)">
<polygon points="491.4,-9.4 497.1,33.8 514.2,66.8 531.2,98.8 538.1,137.2 548.3,174.2 554.0,198.6 559.7,223.9 565.4,251.4 565.4,291.4 554.0,330.3 565.4,368.1 929.5,368.1 929.5,-9.4" fill="#88b9a2" opacity="1"/>
<polygon points="588.1,-9.4 593.8,90.9 610.9,137.2 627.9,181.4 645.0,209.9 929.5,209.9 929.5,-9.4" fill="#7fb39b" opacity="0.8"/>
<ellipse cx="571.0" cy="174.2" rx="22" ry="26" fill="#a9c7b6" opacity="0.6"/>
<ellipse cx="582.4" cy="219.7" rx="26" ry="16" fill="#9fc3b0" opacity="0.6"/>
<ellipse cx="556.3" cy="114.3" rx="18" ry="26" fill="#a5c6b4" opacity="0.6"/>
<ellipse cx="536.9" cy="33.8" rx="26" ry="18" fill="#a3c6b3" opacity="0.5"/>
</g><g filter="url(#b2)">
<polygon points="258.2,-0.6 319.6,-0.6 317.3,20.2 311.6,35.5 303.7,58.7 303.7,74.9 301.4,90.9 300.3,114.3 308.2,125.1 310.5,143.2 316.2,161.0 327.6,181.4 338.9,205.7 335.5,219.7 323.0,201.5 309.4,181.4 295.7,162.5 288.9,155.1 290.0,169.8 293.4,181.4 299.1,192.9 305.9,207.1 308.2,218.3 321.9,229.5 324.1,233.6 308.2,232.2 288.9,202.9 275.2,177.1 260.4,146.2 258.2,106.6 262.7,58.7 255.9,20.2" fill="#6ea78d" opacity="1"/>
<polygon points="319.6,-0.6 402.7,-0.6 406.1,21.9 422.0,42.2 433.4,58.7 441.3,74.9 442.5,97.2 436.8,112.8 419.7,112.8 410.6,98.8 400.4,86.1 383.3,89.3 371.9,98.8 358.3,95.6 350.3,74.9 353.7,60.3 346.9,48.8 341.2,27.0 324.1,25.3" fill="#6ea78d" opacity="0.97"/>
<polygon points="326.4,58.7 349.2,60.3 349.2,78.1 337.8,90.9 317.3,90.9 308.2,81.3 317.3,71.7" fill="#6ea78d" opacity="0.9"/>
<polygon points="453.9,131.1 483.4,131.1 484.6,152.2 488.0,174.2 489.1,195.8 483.4,215.5 474.3,219.7 463.0,209.9 449.3,195.8 444.8,174.2 448.2,152.2" fill="#6ea78d" opacity="0.95"/>
<polygon points="406.1,122.0 417.4,128.1 419.7,137.9 435.6,138.7 434.5,147.7 418.6,149.2 417.4,164.0 410.6,181.4 401.5,190.1 390.1,190.1 399.2,172.7 406.1,155.1 406.1,140.2" fill="#6ea78d" opacity="0.9"/>
<polygon points="399.2,201.5 415.2,215.5 426.5,229.5 442.5,237.7 452.7,248.6 442.5,254.1 422.0,244.6 407.2,235.0 395.8,223.9 391.3,209.9" fill="#6ea78d" opacity="0.9"/>
<ellipse cx="477.7" cy="251.4" rx="5" ry="9" fill="#6ea78d" opacity="0.8"/>
<ellipse cx="499.4" cy="90.9" rx="7" ry="7" fill="#6ea78d" opacity="0.85"/>
<ellipse cx="460.7" cy="84.5" rx="6" ry="10" fill="#6ea78d" opacity="0.85" transform="rotate(-20 460.7 84.5)"/>
<ellipse cx="470.9" cy="134.2" rx="8" ry="5" fill="#6ea78d" opacity="0.8"/>
<ellipse cx="376.5" cy="166.9" rx="4" ry="9" fill="#6ea78d" opacity="0.5"/>
<ellipse cx="367.4" cy="141.7" rx="4" ry="8" fill="#6ea78d" opacity="0.5"/>
<ellipse cx="349.2" cy="164.0" rx="3" ry="8" fill="#6ea78d" opacity="0.4"/>
<ellipse cx="433.4" cy="266.2" rx="5" ry="5" fill="#6ea78d" opacity="0.5"/>
</g>
<ellipse cx="400.4" cy="135.7" rx="3" ry="6" fill="#69b9e0" opacity="0.9" transform="rotate(-25 400.4 135.7)"/>
</g><g font-family="Liberation Sans, sans-serif">
<g opacity="0.62"><circle cx="288.0" cy="185.0" r="2.3" fill="#fff" stroke="#333" stroke-width="1.1"/><text x="293.0" y="189.2" font-size="11.9" fill="#2e2e2e" stroke="#fff" stroke-width="2.6" stroke-linejoin="round" paint-order="stroke">San Francisco</text></g>
<g opacity="0.5"><circle cx="368.0" cy="207.7" r="2.3" fill="#fff" stroke="#333" stroke-width="1.1"/><text x="373.0" y="211.9" font-size="11.9" fill="#2e2e2e" stroke="#fff" stroke-width="2.6" stroke-linejoin="round" paint-order="stroke">Las Vegas</text></g>
<text x="472" y="162" font-size="15.5" font-weight="bold" fill="#111" opacity=".8" stroke="#ddd" stroke-width="1.5" paint-order="stroke" textLength="108" lengthAdjust="spacingAndGlyphs">United States</text>
<text x="277" y="46" font-size="8.6" fill="#444" opacity=".55" textLength="63" lengthAdjust="spacing" stroke="#e8e8e8" stroke-width="1.2" paint-order="stroke">WASHINGTON</text>
<text x="288" y="98" font-size="8.6" fill="#444" opacity=".55" textLength="39" lengthAdjust="spacing" stroke="#e8e8e8" stroke-width="1.2" paint-order="stroke">OREGON</text>
<text x="365" y="102" font-size="8.6" fill="#444" opacity=".55" textLength="28" lengthAdjust="spacing" stroke="#e8e8e8" stroke-width="1.2" paint-order="stroke">IDAHO</text>
<text x="410" y="47" font-size="8.6" fill="#444" opacity=".55" textLength="47" lengthAdjust="spacing" stroke="#e8e8e8" stroke-width="1.2" paint-order="stroke">MONTANA</text>
<text x="433" y="110" font-size="8.6" fill="#444" opacity=".55" textLength="46" lengthAdjust="spacing" stroke="#e8e8e8" stroke-width="1.2" paint-order="stroke">WYOMING</text>
<text x="330" y="159" font-size="8.6" fill="#444" opacity=".55" textLength="39" lengthAdjust="spacing" stroke="#e8e8e8" stroke-width="1.2" paint-order="stroke">NEVADA</text>
<text x="395" y="169" font-size="8.6" fill="#444" opacity=".55" textLength="26" lengthAdjust="spacing" stroke="#e8e8e8" stroke-width="1.2" paint-order="stroke">UTAH</text>
<text x="291" y="206" font-size="8.6" fill="#444" opacity=".55" textLength="56" lengthAdjust="spacing" stroke="#e8e8e8" stroke-width="1.2" paint-order="stroke">CALIFORNIA</text>
<text x="390" y="237" font-size="8.6" fill="#444" opacity=".55" textLength="40" lengthAdjust="spacing" stroke="#e8e8e8" stroke-width="1.2" paint-order="stroke">ARIZONA</text>
<text x="442" y="244" font-size="8.6" fill="#444" opacity=".55" textLength="60" lengthAdjust="spacing" stroke="#e8e8e8" stroke-width="1.2" paint-order="stroke">NEW MEXICO</text>
<text x="450" y="174" font-size="8.6" fill="#444" opacity=".55" textLength="45" lengthAdjust="spacing" stroke="#e8e8e8" stroke-width="1.2" paint-order="stroke">COLORADO</text>
<text x="543" y="33" font-size="8.6" fill="#444" opacity=".55" textLength="30" lengthAdjust="spacing" stroke="#e8e8e8" stroke-width="1.2" paint-order="stroke">NORTH</text>
<text x="541" y="43" font-size="8.6" fill="#444" opacity=".55" textLength="36" lengthAdjust="spacing" stroke="#e8e8e8" stroke-width="1.2" paint-order="stroke">DAKOTA</text>
<text x="543" y="81" font-size="8.6" fill="#444" opacity=".55" textLength="30" lengthAdjust="spacing" stroke="#e8e8e8" stroke-width="1.2" paint-order="stroke">SOUTH</text>
<text x="541" y="91" font-size="8.6" fill="#444" opacity=".55" textLength="36" lengthAdjust="spacing" stroke="#e8e8e8" stroke-width="1.2" paint-order="stroke">DAKOTA</text>
<text x="525" y="132" font-size="8.6" fill="#444" opacity=".55" textLength="46" lengthAdjust="spacing" stroke="#e8e8e8" stroke-width="1.2" paint-order="stroke">NEBRASKA</text>
<text x="575" y="58" font-size="8.6" fill="#444" opacity=".55" textLength="52" lengthAdjust="spacing" stroke="#e8e8e8" stroke-width="1.2" paint-order="stroke">MINNESOTA</text>
<text x="635" y="83" font-size="8.6" fill="#444" opacity=".55" textLength="52" lengthAdjust="spacing" stroke="#e8e8e8" stroke-width="1.2" paint-order="stroke">WISCONSIN</text>
<text x="540" y="176" font-size="8.6" fill="#444" opacity=".55" textLength="36" lengthAdjust="spacing" stroke="#e8e8e8" stroke-width="1.2" paint-order="stroke">KANSAS</text>
<text x="605" y="124" font-size="8.6" fill="#444" opacity=".55" textLength="24" lengthAdjust="spacing" stroke="#e8e8e8" stroke-width="1.2" paint-order="stroke">IOWA</text>
<text x="880" y="77" font-size="8.6" fill="#444" opacity=".55" textLength="28" lengthAdjust="spacing" stroke="#e8e8e8" stroke-width="1.2" paint-order="stroke">MAINE</text>
</g>
<g filter="url(#b7)"><polygon points="466.4,264.9 490.3,248.6 505.1,235.0 508.5,202.9 540.3,202.9 542.6,228.1 542.6,244.6 540.3,278.2 528.9,296.6 510.7,298.0 497.1,300.6 483.4,280.9" fill="#2448e8" opacity=".45"/><polygon points="535.8,278.2 538.1,251.4 544.9,229.5 559.7,236.3 579.0,240.5 605.2,243.2 613.1,251.4 634.8,251.4 646.1,230.8 653.0,209.9 646.1,195.8 627.9,184.3 606.3,172.7 600.6,162.5 616.6,155.1 635.9,143.2 649.6,125.1 662.1,111.2 680.3,105.0 690.5,97.2 701.9,74.9 714.4,65.2 729.2,68.5 734.9,87.7 744.0,103.5 739.4,117.4 753.1,125.1 773.6,117.4 792.9,121.2 815.7,126.6 831.6,131.1 838.4,140.2 836.2,149.2 825.9,169.8 816.8,192.9 819.1,215.5 806.6,226.7 794.1,235.0 781.5,243.2 766.7,256.8 757.6,266.2 741.7,266.2 724.6,264.9 706.4,272.9 690.5,279.5 679.1,287.5 667.8,290.1 664.3,303.2 645.0,301.9 622.2,296.6 601.8,300.6 584.7,311.0 573.3,325.1 574.5,344.2 559.7,344.2 544.9,325.1 532.4,305.8 531.2,294.0" fill="#0436e0" opacity=".8"/></g>
<g filter="url(#b10)"><polygon points="656.4,174.2 650.7,152.2 662.1,129.6 719.0,129.6 758.8,137.2 798.6,140.2 824.8,147.7 824.8,166.9 810.0,195.8 798.6,221.1 775.9,240.5 758.8,254.1 730.3,256.8 701.9,264.9 662.1,278.2 633.6,288.8 605.2,291.4 584.7,304.5 565.4,311.0 548.3,291.4 554.0,264.9 588.1,251.4 622.2,258.1 650.7,244.6 662.1,216.9 662.1,195.8" fill="#04146e" opacity=".42"/></g>
<circle cx="469.2" cy="268.1" r="13" fill="url(#bl)" opacity="1.20"/>
<circle cx="323.0" cy="215.5" r="11" fill="url(#bl)" opacity="0.87"/>
<circle cx="521.0" cy="243.2" r="16" fill="url(#bl)" opacity="0.73"/>
<circle cx="518.7" cy="264.9" r="14" fill="url(#bl)" opacity="0.67"/>
<circle cx="522.1" cy="221.1" r="10" fill="url(#bl)" opacity="0.60"/>
<circle cx="407.2" cy="141.7" r="7" fill="url(#bl)" opacity="0.53"/>
<circle cx="405.3" cy="245.2" r="7" fill="url(#bl)" opacity="0.40"/>
<circle cx="485.8" cy="156.0" r="6" fill="url(#bl)" opacity="0.40"/>
<circle cx="619.3" cy="75.3" r="9" fill="url(#bl)" opacity="0.40"/>
<circle cx="750.8" cy="322.6" r="14" fill="url(#bl)" opacity="1.13"/>
<circle cx="753.1" cy="313.6" r="9" fill="url(#bl)" opacity="0.67"/>
<circle cx="764.5" cy="339.2" r="7" fill="url(#bl)" opacity="0.47"/>
<g filter="url(#b4)">
<ellipse cx="689.4" cy="117.4" rx="9" ry="13" fill="#3b82f6" opacity="0.55"/>
<ellipse cx="691.7" cy="100.3" rx="6" ry="12" fill="#3b82f6" opacity="0.35"/>
<ellipse cx="737.2" cy="122.0" rx="9" ry="7" fill="#3b82f6" opacity="0.45"/>
<ellipse cx="602.9" cy="303.2" rx="18" ry="6" fill="#3b82f6" opacity="0.55"/>
<ellipse cx="653.0" cy="304.5" rx="20" ry="6" fill="#3b82f6" opacity="0.5"/>
<ellipse cx="820.2" cy="219.7" rx="6" ry="11" fill="#3b82f6" opacity="0.7"/>
<ellipse cx="778.1" cy="251.4" rx="7" ry="7" fill="#3b82f6" opacity="0.55"/>
<ellipse cx="703.0" cy="290.1" rx="10" ry="4" fill="#3b82f6" opacity="0.25"/>
<ellipse cx="575.6" cy="331.5" rx="5" ry="13" fill="#3b82f6" opacity="0.5"/>
<ellipse cx="835.0" cy="162.5" rx="4" ry="9" fill="#3b82f6" opacity="0.3"/>
<ellipse cx="816.8" cy="197.2" rx="4" ry="5" fill="#3b82f6" opacity="0.3"/>
</g>
<polyline points="749.7,361.1 756.5,359.6 762.2,356.8 765.6,353.1" fill="none" stroke="#0a0f0c" stroke-width="1.6" stroke-linecap="round"/>
<polyline points="661.5,25.3 673.4,20.2 707.6,37.1 716.1,48.8 720.1,51.3" fill="none" stroke="#3a4a50" stroke-width=".8" opacity=".8"/>
<polyline points="730.3,58.7 741.7,69.3 745.7,97.2 742.6,106.6" fill="none" stroke="#3a4a50" stroke-width=".8" opacity=".8"/>
<polyline points="734.3,122.0 739.4,126.6 770.2,117.4 782.1,108.9" fill="none" stroke="#3a4a50" stroke-width=".8" opacity=".7"/>
<polyline points="780.7,102.5 785.0,96.4 806.6,96.4 811.1,89.3" fill="none" stroke="#3a4a50" stroke-width=".8" opacity=".7"/>
<circle cx="595.3" cy="294.6" r="16" fill="url(#hot)" opacity="1"/>
<circle cx="579.0" cy="254.3" r="14.5" fill="url(#warm)" opacity="1"/>
<circle cx="571.0" cy="254.8" r="9" fill="url(#grn)" opacity="1"/>
<circle cx="559.7" cy="298.6" r="11.5" fill="url(#grn)" opacity="1"/>
<circle cx="568.2" cy="287.5" r="9.5" fill="url(#grn)" opacity="1"/>
<circle cx="679.1" cy="125.1" r="14" fill="url(#warm)" opacity="1"/>
<circle cx="732.0" cy="115.5" r="13" fill="url(#grn)" opacity="1"/>
<circle cx="687.1" cy="128.9" r="6" fill="url(#grn)" opacity="1"/>
<circle cx="692.8" cy="244.3" r="11" fill="url(#cy)" opacity=".85"/>
<circle cx="720.2" cy="241.1" r="10" fill="url(#cy)" opacity=".85"/>
<circle cx="655.8" cy="221.8" r="9" fill="url(#cy)" opacity=".85"/>
<circle cx="693.0" cy="207.7" r="9" fill="url(#cy)" opacity=".85"/>
<circle cx="700.1" cy="155.6" r="11" fill="url(#cy)" opacity=".85"/>
<circle cx="736.0" cy="152.8" r="7" fill="url(#cy)" opacity=".85"/>
<circle cx="719.0" cy="165.4" r="7" fill="url(#cy)" opacity=".85"/>
<circle cx="760.6" cy="220.7" r="9" fill="url(#grn)" opacity="1"/>
<circle cx="785.6" cy="213.0" r="6" fill="url(#cy)" opacity=".85"/>
<circle cx="742.2" cy="318.1" r="6" fill="url(#cy)" opacity=".85"/>
<circle cx="754.5" cy="310.4" r="6" fill="url(#cy)" opacity=".85"/>
<circle cx="767.3" cy="344.2" r="5" fill="url(#cy)" opacity=".85"/>
<circle cx="751.3" cy="287.1" r="5" fill="url(#cy)" opacity=".85"/>
<circle cx="655.6" cy="292.1" r="6" fill="url(#cy)" opacity=".85"/>
<circle cx="654.1" cy="172.3" r="7" fill="url(#cy)" opacity=".85"/>
<circle cx="604.3" cy="165.4" r="6" fill="url(#cy)" opacity=".85"/>
<circle cx="750.8" cy="129.6" r="6" fill="url(#cy)" opacity=".85"/>
<circle cx="770.2" cy="145.6" r="6" fill="url(#cy)" opacity=".85"/>
<circle cx="825.1" cy="152.9" r="6" fill="url(#cy)" opacity=".85"/>
<circle cx="805.4" cy="166.9" r="6" fill="url(#cy)" opacity=".85"/>
<circle cx="704.6" cy="177.8" r="6" fill="url(#cy)" opacity=".85"/>
<circle cx="814.5" cy="197.9" r="5" fill="url(#cy)" opacity=".85"/>
<circle cx="758.4" cy="237.7" r="5" fill="url(#cy)" opacity=".85"/>
<circle cx="654.3" cy="260.8" r="5" fill="url(#cy)" opacity=".85"/>
<circle cx="680.3" cy="105.9" r="5" fill="url(#cy)" opacity=".85"/>
<circle cx="705.6" cy="107.2" r="6" fill="url(#cy)" opacity=".85"/>
<circle cx="643.3" cy="285.5" r="5" fill="url(#cy)" opacity=".85"/>
<circle cx="613.7" cy="258.1" r="5" fill="url(#cy)" opacity=".85"/>
<circle cx="572.2" cy="320.0" r="5" fill="url(#cy)" opacity=".85"/>
<circle cx="563.1" cy="340.4" r="6" fill="url(#cy)" opacity=".85"/>
<circle cx="575.0" cy="270.9" r="5" fill="url(#cy)" opacity=".85"/>
<path d="M265.1 145l2.3 .2 0 4.2M909 56l-3.6-.3 1-6.4 .4-.4 2.2 .6M914.2 69.9l-1.4 0-.7-.6-1-4.9M268.4 20.8l0 1.9 2.4 2.3 6.1-1.2 .8-.8M261.9 23.3l6.5-.6M287.9 22.8l.9 0 .2-9.6-4.3-1.4M288.8 22.8l.7 1.2 10.8-.8-.3-10.9-8.1-1.1-2.9 2M298.5 212l1.2-.1 1.1 2.9M310.8 231.6l-.5-8.6-3.7-.8M314.7 200.3l-3.8 10-8.6-1.4-1.6-8 .5-.6 13.5 0M310.3 223l4.7-4.8-4.1-7.9M299.7 211.9l2.6-3M293.2 200.8l7.5 .1M400.1 46.3l2.5 8.6 8 1.8 1.8-1.1 .6-9.8-2.9-2.3-10 2.8-.8-.6-1-10.2 1.9-2.1 9.4 2.1 .5 8M286.6 187.7l1.5-.4 3.1 2.9-.3 5M410.6 56.7l-1.1 12.1-7.6-.8-2.6-2.3-.2-7.5 3.5-3.3M270.8 25l-2.6 8.9-3.7-1M465.6 149.4l-1.4-1.7 2-12.5 12.4-1.9 3.4 17.2-16.4-1.1-1 16.4 13.4 2.4 2.4-1.8 1.7-15.9 3.7-.6 7.7-11.4-5.6-5.8-5.9-2.9-3.4 3.5M431.3 273.8l-.1-2.7 15-1.9-.3 4.6M455.6 267.8l-6.6-1.7-2.8 3.1M416 273.6l.3-2.4 12.9-2.1 2 2M402.7 268.7l9.1-2.7 4.5 5.2M479.4 277.3l-.4-7.2-9-.8M462.3 267.8l4.3-15.6-3.9-4.2-13.7 5.2-2.6 3.9 2.6 9M498 8.2l.5 .3 0-.3M524.7 42.4l-7.9-1 .1-6.9 7.1-1.7 2.2 1.8-1.5 7.8M412.4 55.6l7.1 1.5 .6 .5 1.1 10-.5 .8-10 1.7-1.2-1.3M421.2 67.6l11.7-2.1 1.3 1.5-3.1 10.3-6.7 .9-3.7-9.8M914.3 80.5l-.7-2.5 4.2-2M912.8 69.9l-1.6 6.7 2.4 1.4M301 8.2l-.6 3.8-.4 .3M291.9 11.2l-.1-3M291.2 190.2l9.4-1.1 1.5 1.3-.9 9.9M326.7 199.3l1.9-13.5 16-1.7 5.3 15.9-.2 .1-21.9 .9-1.1-1.7-11.9 .9-5-10.5-7.7 .7M328.4 185.5l-12.6-3.9-2-3.1 .1-11.5 .4-.5 15.6-.3-1.5 19.3 .2 .3M309.8 189.7l6-8.1M314.3 166.5l-1.3-9.8 3.7-6.4 10.3-2.9 3.5 18.2-.6 .6M300.6 189.1l-.4-10.3 13.6-.3M394.1 217.6l-14.9-.9-.9-.9-.8-15.1 2.5-2.5 12.8 1.4 4.1 4.8-2.8 13.2 3 4.3-1.2 8.7-18 5.9-1.7-1.8 3-18M378.3 215.8l-14.9 .9-2.8-16.3 .2-.1 16.7 .4M410.7 70.1l-.5 7.6-9.8 3.8-3.1-2.4 4.6-11.1M424.4 78.2l-2.6 3.3-10.9-3.1-.7-.7M466.2 135.2l-3.7-4.1-13.9 3.1-1 14.1 16.6-.6M322 234.3l5.3-1.3 .9 .7 .4 3.3M315 218.2l11.1-.6 1.2 15.4M343.7 247.8l1.5-14.9-17 .8M327.8 201l1.3 13.6-3 3M345.7 252.9l14-2 2.9 1.9-.1 3.5M377.6 259.6l.7-8.4 1.1-1.1 12.2 2.2 2.1 2.1 1.3 11.5M391.6 252.3l7.9-15.8-3.6-5.9M377.9 236.5l1.5 13.6M362.6 252.8l15.7-1.6M288.1 187.3l1.1-8.1 10.5-.9 .5 .5M313.9 167l-13.9 .7-.3 10.6M399.3 65.7l-9.5 2.8-.3 .4 2 9.3 5.8 .9M355.1 68.4l1.4 1.2-1.1 9.8-11.1-2.7 .7-6.9 10.1-1.4-.7-10 2.3-2.2 9.2 .8 .1 11.7-9.5 .9M344.3 76.7l-.3 .3 0 12.1 10.6-2.2 1.5-6.3-.7-1.2M367.5 88.8l10 1 1.7-10-.2-.1-12.1-.4-.4 .4 1 9.1-2.4 2.7-8-1.4-2.5-3.2M356.1 80.6l10.4-.9M366 68.7l.7 .7 .2 9.9M366.7 69.4l11.4-.7 .9 11M389.5 68.9l-10.5-1.1-.9 .9M379.2 79.8l10 .3 2.3-1.9M321.7 79.8l-2 8.6-8.3 1.1-.1-13 .5-.4 9.9 3.7 2.3-1.5 7.9 3.1 3.4-3.8-2.6-8.8-7.7 .8-1 8.7M311.3 76.5l-9.1 1.1-.2 9.8 9.1 2.4 .3-.3M325 69.6l-2.3-2.3-9.8 1.8-1.1 7M344 77l-8.7 .6M331.9 81.4l1.7 7.9 10.3-.2 2.3 10 .5 .4 6.8 .3 3.6-9.7M312.9 69.1l-2.4-3-9.1-.6 .4 11.8 .4 .3M431.2 253.1l-1.6 1.6-16.2 .7-1.9-2.4 0-12.8 4.4-3.4 15.3-.2 0 16.5 15.2 4M429.2 269.1l.4-14.4M449 253.2l-4.3-17.2-13.1 .2-.4 .4M411.8 266l1.6-10.6M399.5 236.5l12 3.7M393.7 254.4l17.8-1.4M524 32.8l-.4-7.1-7.7 .7 .4 7.5 .6 .6M502.8 8.2l-4.2 .6-.1-.3M523.6 25.7l.7-.9 7.3-.2 1.5 1.7-.3 7.2-6.6 1.1M515.9 42.2l-8-.9-.2 .3 .1 9.8 8-1.9 .1-7.3 .9-.8M507.9 41.3l0-7.8 8.4 .4M477.2 47.1l-11.2-1.7-.4-10.8 9.7 .4 2.3 2.2-.4 9.9 .1 .2 12.1 .2-3-12-8.8 1.7M445.9 58.3l-1.9 7.7 11.2 3.6-1.3-12.5-8 1.2-3.1-2.9-10.2 3.7-1.5-1.8 .1-9.7 10.7-.2 .9 8M646.2 34.1l-1.5-.2 0-4.7 4.7-.7 .7 2.8M894.5 36.6l-1.4 0-.7 6.5 6.5-.8-.4-4.1M907.4 84.1l-1.4-.4-.7-.7 1.5-5.5 4.4-.9M906 83.7l0 1.1M912.1 69.3l-6.8 1.2-.8 .8 1 4.8 1.3 1.4M891.8 58.1l-6.2-2.9-.7-4.1 7.5-2.8 .8 .7-.1 7.9-1.3 1.2-.2 3.8 8 2.1 1.2-7 2.7 0 4.2 6.1-1.8 1.3-6.2-.2-.8 5.2 5.6 1.9M905.3 70.5l.6-6.1M905.4 55.7l-1.9 1.3M906.4 49.3l-6.7 .4 .6 6.8 .5 .5M909 63.1l-1.3 0M380 198.2l-1.4-11.3 14.3-4.7 3.9 4.6-4 12.8M360.8 200.3l4.3-19.1 9.7 1.7 3.8 4M462.7 248l-.3-12.5-11.5-3.2-6.2 3.7M400.2 33.4l.2-9.9 11.7-.1-.2 10.4-2.3 1.7M466 45.4l-1.2 1.2-10.6-2 .5-8 2.3-2.1 8.2-.3 .4 .4M464.8 46.6l-1.3 9.5-9 .4-2.1-10 1.8-1.9M365.9 57l.8-.8-.6-11.4-.5-.7-10.3 .1-1.7 2.4 3.1 9.6M389.8 56.9l1-9.2-4.5-3.2-6.9 2-1.8 9.5 1.1 1.2 10.7 0 .4-.3 9.3 1.3M399.3 45.7l-8.5 2M389.8 68.5l-.4-11.3M379 67.8l-.3-10.6M366.7 56.2l10.9-.2M375 34.6l.9-.9 1-9.6-9.9-1.9-.7 11.8 1.8 1.7 6.9-1.1 4.3 11.8-13.2-1.6M398.3 35.5l-10.1-.5-1.9 9.5M312.4 21.5l2.1 2.2 8.1-.2 .6-.3 1.3-11.5-1.8-1.7-11.9 2.6 1.6 8.9-11.2 2.4-.9-.7M300.4 12l10.3 .6 .1-4.4M366.3 34l-9.1-1.8-1.2-8.2 10.8-2.1 .2 .3M375.9 33.7l11.8 .8 0-9.4-9.1-2.4-1.7 1.4M357.2 32.2l-3.5 3.7 1.6 8.3M365.6 44.1l2.5-8.4M387.7 34.5l.5 .5M335 12.6l-.2 11.3 9.2 .8 1.3-1.2-.3-9.8-10-1.1-1.3-1.8-9.2 .9M323.2 23.2l10.4 1.5 1.2-.8M333.7 10.8l.8-2.6M345.7 8.2l.1 4.6-.8 .9M345.8 12.8l10 .5-1 9.5-9.5 .7M344 24.7l1.7 9.6-1.8 1.7-10.7-2.4 .4-8.9M353.7 35.9l-8-1.6M356 24l-1.2-1.2M356.7 8.2l.9 3-1.8 2.1M431.4 130.6l-.2-3.5 2.6-5 9.2-3 4 6.1-1.2 6.1-14.4-.7-1.5 2.2-19.4-.9 1.1-7.6 11.9-4.3-.2-7.2-1.9-1.9-9.3 0-.1-9.2 9.3-3.3-.2-8.5-9.9 .6-1.1 .8-1 7.2 2.9 3.2M443 119.1l1.4-6.4-.6-.8-10-.4-.5 .5 .5 10.1M421.8 81.5l.3 7.2 9.7 1.8 .8-.5 .5-11.1-2-1.6M400.4 81.5l.6 6.2-2 2.5-10.1 .3 .3-10.4M352.5 129.2l6 2 1.4 1.8 .9 14.1-15.1 4.1-3.7-4 3.9-14.7 5.1-3.3 1.5 0 4-16.3 9.5 .5-1.6-11.5-8.1 .2-1.7 9 1.9 1.8M377.8 90.3l-1 10.4 10.4 .3 1.9-2.1-.8-7.8-10.5-.8-.3-.5M365.1 91.5l1.1 8.4 10.4 1.1 .2-.3M388.9 90.5l-.6 .6M399 90.2l.3 9.8-10.2-1.1M344.2 217.5l-.3 .3 1.7 14.7 15.2 1.2 2-1.3-.3-14.6-18.3-.3 5.5-17.4M329.1 214.6l14.8 3.2M360.6 200.4l-10.7-.4M363.4 216.7l-.9 1.1M345.2 232.9l.4-.4M359.7 250.9l1.1-17.2M376.2 234.7l-13.4-2.3M346.2 99.1l-12.6 2.2-.5-11.3-10.1 1.4-1.1 8.4 11.7 1.6-.1 8.9-11.5 .4-.3 17.7 3.8 1.8 2.8-1.3 6.1-10.7-.8-7.8 11.4-.8 1.8 2-.8 9.1-11.6-2.5M351 129.2l-5-8.5M345.9 132.5l-17.6-3.6M342 147.2l-14.7-.2-1.8-16.8M366.2 99.9l-1.8 2M353.5 99.8l2.8 2.3M346.7 99.5l-1.7 10.1M346.8 111.6l7.8-.5M345 69.8l-1-1.5-11 .2-.3 .3M321.9 99.8l-.8 .7-10.8-1.8 .8-8.9M319.7 88.4l3.3 3M321.1 100.5l-.1 9.4 1 .8M333.6 89.3l-.5 .7M289.5 24l-.4 7.6-.6 .6-.6 .1M276.9 23.8l3.5 9.8 4.2-.7M267.8 42l1.4-6.3 9.3-.1 2.8 10.4-2.1 2-11.1-5.1M280.4 33.6l-1.9 2M288.5 32.2l.6 12.8-7.8 1M268.2 33.9l1 1.8M269.1 56.5l.3 .1 8.5-2 1.3-6.6M506.7 304.7l.1-2.1-6.8-1M533.1 185.5l7.1 1.3 1.1 3.2-.9 2.9-7.6 2.1-1.4-1.1 1.7-8.4-.6-.9 1.2-5.9 6.1-1.2 1.5 1.5 .3 5.4-1.4 2.4M541.3 190l6.4 0 .8-5.4-.3-.3-6.6 .1M498.8 218.5l1.4-6.8 3.9-.3 3.3 3.6-2 5.2-6.6-1.7-2.9 2.5-12.6-2.7-1.4-2.9 10.9-4.6 7.4 .9-1.2-8-3.6-2.5-2.6 9.6M507.3 194.5l7.2-.5 2.2-8-8.6-.7-.4 .4-.8 8.5 .4 .3 0 5.8 4 2.6 .8 5.7-5.7 .2-1.1-6.4 2-2.1M536.5 250.9l-.5-.5 1.1-5.2 3.7-.3 .7 .5 .1 4.4-.9 .8-4.2 .3-.1 5.4 4 .2 1.5-2.4-1.2-3.5M584.5 22l.5-5.1 4.8-.2 .9 5.4-.9 .9-4.8-.4-.5-.6-6.2 .6 .3 5.1-6.3 1.1 .3-6.5 5.2-.3 .5 .6M585.2 33.9l4.8 .8 1.3-6-.9-.7-5.9 .5 .7 5.4-1.5 1.3 .6 5.6 5.8-.9 .3-4.7 5.4-.2 1.2-1.5-.7-4.4-.9-.9-4.1 .5M590.4 35.2l-.4-.5M589.8 23l.6 5M585 22.6l-.5 5.9-5.3-.2-.6 5.6 .6 .8 4.5 .5M625.9 16.7l0 5.2-5.1 .7-1.3-6 1-1.2 5.4 1.3 .4-.3M597 33.5l5.2 1 .4-.4-.6-6-5.7 1M595.4 28.2l.8-5.3-.7-.8-4.8 0M644.6 46.5l-.4-.3-5.6 .6-.4 .5 .8 4.9 4.8 .8 .5-.5 .3-6 4.2-.2 1.2 4.4-.8 1.1-4.9 .7M507.6 8.2l1.3 1 6.2-1 1.7 1.7 7.4-.1 1.3 5.8-2.8 3.1-5.3-1.2-.8-.9 .2-6.7M525.6 8.2l8.1 .6-.2-.6M602.5 58.7l.4-5.5-1.3-1-4.8 .3 .3 6 5 .6 .4-.4 6.4 .1 .2-.2-1-6.1-5.2 .7M601.6 52.2l.9-5.9 5.1 .2 .3 .4 .3 5.5 5.7-.2 1.1 1.1-1.1 5.2-4.8 .1M602.1 59.1l.4 4.7 5.2 .7 .8-.7 .4-5M577.8 76l-5.3 0-.3-4.8 5.5-1.2 1 1-.9 5 .8 .8-.5 5.2 .8 .6 4.8-.8 .3-5.4-5.4 .4M532.8 51.1l1.1-8.8 .6-.6 5.2 .6 2 4.1-1.4 4.9-.2 .1-7.3-.3-.2 .2-7.3-1.1-.5-7.7 9.1-.2M532.6 51.3l-.2 9 8.6-1.4 .2-.2-1.1-7.3M541.2 58.7l6.6-.9 .1-5.5-7.6-1M534.5 41.7l-1.4-7.9 8.1-.3 .4 .6-.2 6.2-1.7 2M532.8 33.5l.3 .3M566.3 46.9l-6.2-.4 .3-5.1 5.6-1.4 1.1 .9-.8 6 .1 .2 5.8 .1 .7 4.9 5.3 .8 .7-.5 5.3 .4 .4-.3-.1-6.5 .1-.1 5.5 .4 .1-6.3 5.7 1.2 1-1.2-1.1-5M533.1 26.3l6.9-.9 2.5 3.5-1.3 4.6M523.5 59.1l-5.2 .8-1.5-1.3-.1-8.4 8.2 .3-1.4 8.6 1.5 1.1 7.3 .4 .1-.3M525.3 50.2l-.4 .3M515.8 49.5l.9 .7M516.8 58.6l-8-.4-1.3-6.4 .3-.4M482 129.8l5.8-8.5-2.8-8.5-7.4 .1-1.6 9.2 6 7.7M457 34.5l-4.5-10.9-5.7 .4-3 2.6-1.2 8.3 12.1 1.7M909.1 42.6l-2.7 1-1.7-1.1-.2-5.2M906.8 48.9l-.4-5.3M899.7 49.7l-.5-.6 1.1-5.5 4.4-1.1M900.3 43.6l-1.4-1.3M649.4 28.5l.7-.8-.6-3.9M644.7 29.2l-1.2-.9 .6-5.5 1.6 .1M644.7 33.9l-.5 .4 0 1.3M644.2 46.2l-.1-2.1M648.8 46.3l.6-.7M638.6 46.8l0-.9M638.7 40.4l0-.1 .1 0M602.2 34.5l-.1 5-5.2 .5M602.5 46.3l-.4-.4-5.6-.1-.3 6.3 .6 .4M602.1 45.9l.3-6.1-.3-.3M595.9 41.2l.3 4.4 .3 .2M596.2 45.6l-6.1 .7 .3 6-5.8 .2M639.8 22.1l3.8 .1 .5 .6M892.4 43.1l-.7 .9-4.6-1.4M893.1 36.6l-1.1-1M734.3 91.2l-.1 0 1 3.9-3.7 1.5-.9-1 .1-2.5M722.8 122.3l-2.2-3.3 .5-1 5.6 .7-.3 3.4-.8 .5-2.8-.3-2.2 2-3.5-2.4 .6-1.9 2.9-1M686 207l1.2 1.3 2.9 .3 1-3.8-.9-.9-4.5 .8 .3 2.3-5.2 2.8 .6 2.4-.2 .5-4.6 1.3-1.1-1.2 .7-4.1-4.9-.1-.1-4.3-.6-.5-2.6 0-.8 5.2-3.2-2.3-.2-1.9 3.2-1.4 1 .4M697.3 96.8l2 .6 .8 3.1-.8 .8-1.2-.1M721.1 118l0-3.7-3.3 0-1.2-5 4.6 .2 .2 .1-.2 4.6 5.1 .3 .2 .2 .3 3.9 4.2-.3 .5 4.5-1.1 1.1-4-1.8M905.3 83l-5.3 1-.9 4.3M891.3 92l-.3-.8 .2-.2 4.9-1.1M900 84l-1.7-1.3-7.5 1.3 .4 7M313 156.7l-12.5-1.7-1.3 1.3 .2 10.7 .6 .7M271.3 155.9l8.3-.8 1.6 1.7-2.3 8.4-6.1 .6M299.2 156.3l-9.9-.9-.9 .6 2.6 11.4 8.4-.4M360.8 147.1l1.4 1.3 14.7 1.4 2.2-15.5-19.2-1.3M364.4 180.5l-1.5-12.8-2-1.7-15.2-1.3-.7 .7 .2 18 19.2-2.9 .7 .7M344.6 184.1l.6-.7M330.5 165.6l14.5-.2M345.7 151.2l0 13.5M362.2 148.4l-1.3 17.6M327 147.4l.3-.4M398.9 166.9l-5.9 3.2-9.3-2.6-4.8-5.7 .5-8.7 13.9-3.5 3.7 2.9 1.9 14.4 11.6 1.8 2.8 12-2.9 5.6-13.6 .5M374.8 182.9l8.9-15.4M392.9 182.2l.1-12.1M362.9 167.7l16-5.9M376.9 149.8l2.5 3.3M390.7 22.8l9-.1 .7-9-1.3-1.7-10.3-.2-1.3 1 3.2 10-3 2.3M400.4 23.5l-.7-.8M378.6 22.7l.5-10.3 8.4 .4M412.1 23.4l.4-.3 .3-10.3-1.7-1.7-10.7 2.6M399 8.2l.1 3.8M389.3 8.2l-.5 3.6M411.1 11.1l-.1-2.9M366.8 21.9l-.1-7.7 11.9-2.4 .5 .6M357.6 11.2l7.2 1.1 1.9 1.9M412.8 12.8l9.2-.7 .5-3.9M452.4 46.5l-9.2-.6-1-10.5 .4-.5M322.7 10l-.2-1.8M455.2 69.6l.5 .7-1.5 6.7-10 1.3-2.9-10.2 2.7-2.1M434.2 67l7.1 1.1M433.1 78.9l9.6 1.1 1.5-1.7M432.6 90l10.4-.5-.3-9.5M410.9 78.4l.3 12.1M401 87.7l9.1 3.6M422.1 88.7l-1 1.2M399.3 100l.3 .3 9.5-1.8M421.3 98.4l3.2 3.3 7.8-.4-.5-10.8M379.1 134.3l1.4-1.3 13.8-.1 .6 .4-1.6 16.3M397 152.5l15.3-4.9-3.7-13.6-13.7-.7M411.6 124.3l-.5-1.7 .9-11.6-12.5-1.1-1.7 1.7 1.5 6 11.8 5M433.3 112l-10 .8M431.2 127.1l-7.7-7.1M399.3 117.6l-5 12 0 3.3M408.6 134l1.9-2.1M424.5 101.7l-3.1 9.2M399.5 109.9l.1-9.6M432.3 101.3l.6 .4 .9 9.8M380.5 133l-1.9-7.9-11.8-5.6-8.3 11.7M376.6 101l.1 9.9-9.9 3.3-.8-.8M366.8 114.2l0 5.3M466.7 217.3l-3-2.3-3.3-13.3 2.3-1.8 17.9 .7 .7 14.2-14.6 2.5-2.4 16.9-1.9 1.3M450.9 232.3l-1.7-12.6 14.5-4.7M483.3 218.3l-1.2 16.3-17.8-.4M481.9 215.4l-.6-.6M480.9 200.2l-3.3-16 1-1.5 10.9-.2 5.4 5.1 .4 5.4-2.8 4.2-11.6 3-.3 .4M477.6 184.2l-12.8 .7-2.1 15M495.4 201.2l-2.9-4M506.9 194.2l-11.6-1.2M507.7 185.7l-8.1-1.8-4.7 3.7M396.9 204.4l14.8-2.7 2.1-2-3.4-13.4M397.1 221.9l14.8-1.9-.2-18.3M413.3 180.7l18.4 1.6-4 19.4-13.9-2M415.9 236.8l-3.5-16.5-.5-.3M289.2 179.2l-.8-1-.3-8.5 2.9-2.3M278.9 165.2l1.3 1.7 7.9 2.8M281.2 156.8l7.2-.8M288.4 178.2l-7.2-.1M280.2 166.9l-1.9 7.4M321 109.9l-10.3 1 1.2 12.1 4.9 5.4 4.9 0M302 87.4l-4.1 2.6 2.2 9.1 9.8 .1 .4-.5M310.7 110.9l-.9-.6 .1-11.1M322.7 67.3l.4-10 10.9 .3-1 10.9M323.1 57.3l-.8-.8-8-.9-1.2 .8-2.6 9.7M269.4 56.6l0 4M277.9 54.6l2.2 2.4-1.7 10.3-.9 .9-7.7-.2M280.1 57l8.4 1.6 2.5 8.2-.6 1-12-.5M301.4 65.5l-.4-.3-10 1.6M301.8 77.3l-11.7-.4 .3-9.1M300.1 99.1l-.9 1.2 3.6 10.9 7-.9M311.9 123l-11.4-1.2 1.3-9.8 1-.8M301.2 23.9l.8 10.6 8.3 .3 1-.8 3.2-10.3M289.1 31.6l12 3.6 .9-.7M290.6 56.2l10.5-.6 .8-1.1-.6-6.7-2.8-3.2-8.4 .9 .5 10.7-2.1 2.4M301 65.2l.1-9.6M289.1 45l1 .5M301.1 35.2l-2.6 9.4M313.1 56.4l-11.2-1.9M301.3 47.8l10.6-2.8 .7 .6 1.7 10M311.9 45l-1.6-10.2M268.1 86.2l0 2.6-.5 .4M266.2 99.9l.3-.1-.1-1.8M264 111.9l2.4-.4 1.8-2.1 .5-7.3-2.2-2.3M548.2 184.3l-.6-5.9-6.3 .6M548.8 166.1l-.4 .4-7.2-.7-1.4-5.3 .5-.7 8.2 .3 .3 6 5.7-.7 .5 .6 4.9 .8 .4 5.8 6.3-.3 .2-5-1.2-1.2-4.6-.3-1.1 1M480.4 166.4l7.8 1.2 5.6 4.9-4.3 10M478 168.2l.6 14.5M524.7 158.6l.6-6.2 6.7-.8 1.7 9-1.8 1.1-7.2-3.1-2.3 2 1.4 8.5 .7 .5 .4 6.9 7.5 .7 .5-7.4-2.2-1.8-6.2 1.6M506.8 302.6l.8-.8 2.3 .3M541.5 245.4l4.6-.7 .6 4.4-.6 1.3-4.5-.6M546.1 244.7l.3-.3 2.1-.3 2.6 1.8-.2 2.4-4.2 .8M504.1 211.4l2.3-2.6M512.1 208.6l.2 .1-.2 5.6-.5 .5-4.2 .2M499 203.7l6.3-1.3M514.5 194l1.3 .9 1.4 6.1-5.9 1.9M518 220l.8-5.4 5.1-.2 .2 .2 0 5.8-6.1-.4-.3 .4-4.8 .2-1.3-5.8M524.1 214.6l5.1 .4 .8-.9 .3-5.6-5.8 .3-.6 5.6M560.4 202.2l0 6.2 3.4 1.1 .8-.9-.8-6-3.4-.4-.6-5.9-5.7 .6 .7 6 .9 .4 4.7-1.1M563.8 202.6l2.4-1.1 2.1 .9 0 5.3-3.7 .9M548.2 202.1l.6-5.5-.3-.4-6.1-.1-1.4 5.1 5.5 1.8 1.7-.9 3.2 1.6 3.4-.8M547.7 190l1 1-.2 5.2M540.4 192.9l2 3.2M566.2 201.5l-.1-4.6-5.8-1.2-.5 .6M554.1 196.9l-.1-.2-5.2-.1M560.4 208.4l-2 .7-2-.6-.7-5.2M531.4 193.9l-5.9 .1-1.8 7.3 6.8 2 3.4-3-1.1-5.3M530.5 203.3l-.2 5.2 5.7 .8 .3 5.6-6.3-.8M521.1 294.1l2.7-.9 .3-4.6-2.7-2.8-6.5 2.3-1 5.5 1 .9M514.9 288.1l-5-4.3-1.3 .1-1.5 1.7-.4 8.4 1.3 1.1 5.9-1.5M507.6 301.8l.4-6.7M531.6 299.8l.6-3.7-4.9-.8M523.8 293.2l1 1.3M541.9 254.1l3.9-.1 .8-2.2-.5-1.4M482.1 234.6l.5 .5-3.1 18.1-12.9-1M495.9 221l2.1 5.6-2.1 5.5-12.1 3.2-1.2-.2M479 270.1l2.3-2.8-.8-13-1-1.1M483.8 235.3l12.6 10.6-1.4 6.9-14.5 1.5M495.9 232.1l3.9 3 0 8.5-3.4 2.3M505.4 220.2l.5 .8-.9 5.6-7 0M590.3 16.2l5.4 .3 .4-.3-.3-5.6-5.6-.2 .1 5.8-.5 .5M595.5 22.1l.2-5.6M590.2 10.4l-.5-.5-4.7 .3-.5 6.2 .5 .5M589.7 9.9l.3-1.7M596.3 8.2l-.1 2-.4 .4M566.5 28.1l5.7 .9 .5 5.1-.4 .4-6.3 0-.3-5.7 .8-.7 .2-5.2 5.9-.6-1.3-6.2-4.8 .4-.6 .6 .2 5-6.6 1-.2-.3 1.5-6.2 5.1 .5M579.2 28.3l-.6-.6M572.2 29l.1-.2M578.6 33.9l-5.9 .2M585 10.2l-.7-.6-.2-1.4M584.5 16.4l-5.4-.4-.9 .8-.4 5.2M584.3 9.6l-5.8 1.1 .6 5.3M578.5 10.7l-.7-.6 .2-1.9M633.7 46.8l-1-.1-1 5.7 .3 .3 6.4 .1 .6-.6M635.4 47l2.8 .3M649.2 51.8l1 2.6-1.7 3.9-3.8 .1-.9-5.4M625.9 21.9l.4 .4 6 .2 .1-1.7M625.8 51.3l.2-4.8-6.9 0 1.2 5.9 5.5-1.1 1.4 1.4 4.5-.3M632.7 46.7l-.6-.8-6 .4-.1 .2M525.4 8.2l-1.2 1.6M524.3 24.8l-1.6-6.1M515.9 26.4l-1.1-.9 2.6-8M508.9 9.2l-1.1 7.2 1.1 1.1 7.7-.9M508.9 17.5l.6 7.6 5.3 .4M548.3 8.2l-.1 2 .4 .4 5.4 .6 .7-.9 .1-2.1M554 11.2l.7 4.5 5.5 .3 .6-5.4-6.1-.3M534.5 9.5l4.9-.8 1.5 1.6 1.1 5.5-1.5 2.7-7.5-1-.5-.8 2-7.2-.8-.7M539.6 8.2l-.2 .5M525.5 15.6l7 1.1M548.2 10.2l-7.3 .1M548.6 10.6l-.9 5.2-5.7 0M531.6 24.6l1.4-7.1M540.5 18.5l1.1 2.9-1.6 4M559.9 52.4l-5.4 .7-.7 5.3 .3 .3 6-.7-.2-5.6M560.1 58l.9 .9-1 5.2-4.8-.1-1.1-5.3M553.8 58.4l-5 .3-1-.9M541.7 46.4l6.3-.9 .7 .8-.7 5.9 5.8 .1 .7 .8M584 76.4l.3-.3-.1-5-5.5-.1M597.1 58.5l-1 1-5.5-1 .3-5.8 5.3-.6M572.3 64.7l-1.1 5.5-4.9-.1-.7-5.2 .4-.5 6.3 .3 .7-.7 4.7 .7 0 5.3M572.2 71.2l-1-1M566.3 70.1l-.2 .3-5.9 0 .4-5.7 5 .2M541.4 40.3l6.7 .1-.1 5.1M553.8 52.3l.3-5.8-5.4-.2M565.5 53.1l.5 5.4 .3 .3 5-.3 .6-5.5-5.5-.8-.9 .9-5.5-.8 .1-5.8-5.9-.1-.1 .1M447 125.2l7.6-5.6-1-5.5-9.2-1.4M462.5 131.1l0-5.5-7.9-6M445.8 131.3l2.8 2.9M476 122.1l-9.9-.9-3.6 4.4M477.6 112.9l-2.7-2.1 1.7-9.5 .6-.6 10.8-.1 3.4 3.8-6.4 8.4M487.9 132.7l8.6-5.3 1.3 .3 1.8 7.1-3.5 3.8-2.6-.1M487.8 121.3l3.1-.1 5.6 6.2M490.9 121.2l6.3-3.5 0-7.4-4.2-5.7-1.6-.2M554.4 130.2l.3-4.9 .4-.5 5.3 0 .2 5.7-.8 .9-5.4-1.2-.5 .5 .3 5.8 .8 .5 5.1-1.2-.3-4.4M573.2 100.2l-.5-4.8 5.5-1.4 1 .8-.9 6.1-5.1-.7-1 .9-.4 5.4-5.3 .4-.6 5.5 .2 .3-.1 5.1-5.1 1.1 0 5.5 4.8 .6 .5 5.4-.2 .1-5.4 0M486.4 35.5l1.5-1.9-1.1-8.3-7.7-1.2-1 .8-2.8 10.1M467.6 14l-2.6-2.7-8.1 1.9-.4 .4-2.1 8.2 11.8 3.2 .7-.9 .7-10.1 9.4 .4 1.7-1.6 .4-4.6M465.6 8.2l-.6 3.1M478.1 24.9l-11.2-.8M479.1 24.1l-2.1-9.7M455.3 8.2l1.6 5M465.2 34.2l1-9.2M452.5 23.6l1.9-1.8M446.8 24l-4-11.8 1.1-1.7 12.6 3.1M443.9 8.2l0 2.3M653.8 280.7l5.8-1-1.1-2.8-4.7-.6 0 4.4-.3 .9 1.1 3 2.9-.2 2.4-4.4-.3-.3M721.4 109.6l4.6-1 .3 5.9M731.6 117.8l3.5 .7-.4-4.1-3.3 .1 .2 3.3-.6 .5M726.5 114.7l4-1.1 .9 .9M680.6 204.2l-5-.1 .7 4.6 3.5 .1 .8-4.6 .1-.2-1.5-4.7 2.1-1.1 3.2 1.5 1 1.5-.6 2.4-4.2 .4M762.3 225.3l.7-3.3 3.7 0 .9 .6-.3 2.7-1.4 1.4-3.6-1.4-1.5 1.4 1.7 3.8 3.9 .4-.5 5.3-4-.5 .5-5.1-4.4 1.7-.1 2.5-.3 .2-3.6 .1-1.4-3.9 1.1-.7 3.6 .8 .7 1M726.8 240.1l3.6 .2 .7 4.3-.2 .3-5.2-1.5 1.1-3.3-1.3-2-4 1-.4 .9-3.7 1.9-2-2.4 3-4.1 1.4 .1 1.7 3.6M731.1 244.6l3.6-.5 1.6 3.6 2.3 .1 1.4-2.1-1.4-2.7-3.9 1 .1-3.8-3.6-.9-.8 1M650.1 27.7l3.2 .2 1 .6 0 .2M632.9 40.8l-.9-6 .3-.4 5.8-.1 .4 5.8-5.6 .7-.3 .3-.5 4.8M638.7 40.3l-.2-.2M644.2 34.3l-6.1 0 .3-5.1-6.4-.6 .4-6 3 .1M590.9 52.7l-.5-.4M578.7 41l-.7 5-5 .2-1.2-5.7 .8-.8 5.3 .4 .8 .9 5.6-.2 .3 5.1M578.9 52.4l-.1-5.7 5.7-.7M584.2 52.8l.4 5.6 5.3 .7 .7-.6M667 64.6l0 4.9-2-.5-2.1-1.6-.4-3.2 .5-.5 4 .9 1.2-.8 .5-2.7-1.3-1.3-3.3 .2-1.1 3.7M699.3 97.4l.9-1.1 3.4 .2 0 4.6-3.5-.6M899.2 49.1l-6-.1M891.7 44l.7 4.3M900.3 56.5l-7.2 .4M885 45.6l-1.2 3.2M883.6 50l1.3 1.1M891.6 61.9l-.5 .8-6.8 1.9-.3 5.7 .7 1 8-1.9 .6 .5-.7 6.3-1.5 .9-5.9-2.1-.5-3.7M885.6 55.2l-2.6 2.8 1.2 6.5-5.7-.7M883 58l-1.2-.1M728.4 91.6l-3.2 .7 .3 2.2 1 1.5M726.7 96.2l.1 .2 3.8-.8M730.4 86.1l-.9 1.4 .2 1M721.7 77.9l.5 4-1.2 1.5-2.9-.9-.7-4.9 2.5-.9 1.8 1.2 4.2-1.6 1.3 2.3-.6 2.5-4.4 .8M739.4 154l.9-3.4 3.3-.3-.7 3.1-3.5 .6-.7 .6-3.6-2 .1-2.6 3.3-.9 1.8 1.5M700.3 217.1l-2.1-.8-1.4-3.2 .5-.5 6.2 .5-.3 2.4-2.9 1.6 .3 5 1.6 0 2.7-4.9 2.3 .8-.6 4.4-2.1 .7-2.3-1M703.5 213.1l.3-.7-.8-3.2-4.5-.3-1.2 3.7M725.5 94.5l-3 2.2-.3 3.2 4-.6 .6-2.9M722.2 99.9l-.5 .4-.3 2.8 4.1 2 2.3-4.3-1.6-1.5M731.5 96.6l.3 3.1-2.3 1.3-1.7-.2M891 91.2l-6.1 .7-1-.6-1.4-6.3 2.2-2.1 6 .9 .1 .2M898.9 69.4l-.2 .1-.4 7.2 7.2-.6M898.3 82.7l-.7-5.3 .7-.7M869.7 105.1l.8-1.2-1.1-5.6-4.5-.2-2.6 7.3-3.7 0-.6 .6 .4 6.3 6.3 .5 5.3 .1 1.1-1.6-1.4-6.2-5.9 1 .9 6.7-1.6 6.7 .9 1.4 7.3-1.3 .8 5.2 5.5 2.5 1.7-1.3 0-1.8M874.4 119.1l-3 .5-1.4-6.7M881.1 98.7l-3.6-1.2-1.1 6.6 .5 .4M884.7 94.9l.2-3M267.4 145.2l1.2-.8 9.2 .9 1.8 9.8M378.6 11.8l-.5-3.6M364.8 12.3l1.4-4.1M423.2 21.5l8.4 3.3 2.8-2.1 .4-7.9-2.5-1.7-8.3 1-.8 7.4-3.1 2.5-7.6-.9M422 12.1l2 2M432.1 8.2l.2 4.9M443.8 26.6l-9.4-3.9M442.8 12.2l-8 2.6M430 34.1l1.6 1.5-1.3 11.1-6.5 .1-4.1-3.2 .9-8.1 2-1.6 7.4 .2 1.6-9.3M442.2 35.4l-10.6 .2M420.1 24l2.5 9.9M413 45.8l6.7-2.2M411.9 33.8l8.7 1.7M419.5 57.1l4.3-10.3M432.9 65.5l-.3-6.4M454.5 56.5l-.6 .6M443.2 45.9l-1.3 1.5M430.3 46.7l.9 .9M420.1 57.6l11-.3M454.4 89.3l-11.1 .5 .1 10 1.7 1.6 9.9 .1-.6-12.2 .4-.4-.2-11.3-.4-.6M443 89.5l.3 .3M432.9 101.7l10.5-1.9M443.8 111.9l1.3-10.5M380.5 120.1l-2.3-8.2 10.6-2.2 2.5 2.1-2.6 6.3-8.2 2-1.9 5M376.7 110.9l1.5 1M394.3 129.6l-5.6-11.5M387.2 101l1.6 8.7M397.8 111.6l-6.5 .2M412.3 147.6l3.8 3.5-4.6 16.5-1 1.1M464.6 165.8l-2.1 1.3 .4 16 1.9 1.8M429.2 203.2l1.1 14.5 .2 .2 16.6-.2 1.8-17.4-.4-.3-19.3 3.2-1.5-1.5M412.4 220.3l17.9-2.6M431.6 236.2l-1.1-18.3M449.2 219.7l-2.1-2M460.4 201.7l-11.5-1.4M448.5 200l-1.6-15.2 16-1.7M316.7 150.3l-5.3-5.2-10.8 1-.1 8.9M316.8 128.4l-6.1 5.3 .7 11.4M289.3 155.4l.7-12.7 9.2 1.8 1.4 1.6M310.7 133.7l-7.3 .4-4.2 10.4M334.7 57.1l.5-11.1 6.6-1.5 4 2.8-1.5 11.5-.5 .4-9.1-2.1-.7 .5M344 68.3l-.2-9.1M353.6 46.6l-7.8 .7M354.4 58.4l-10.1 .4M343.9 36l-2.1 8.5M321.2 43.8l3.1 3.7 9.6-2.3-2.8-8.8-7.6-.4-1.3 1-1 6.8-8.6 1.8M322.3 56.5l2-9M311.3 34l10.9 3M335.2 46l-1.3-.8M322.6 23.5l.9 12.5M333.2 33.6l-2.1 2.8M279 79.2l1.3-1.3 9.4-.5 1.4 11.3-.2 .2-11.5 2.1-1-1.1 .6-10.7-10-.8M277.5 68.2l2.8 9.7M268.1 88.8l10.3 1.1M290.1 76.9l-.4 .5M297.9 90l-6.8-1.3M279 98.8l-.4 .5 1.7 12.8 .3 .3 8.2-.4 1.3-1.5 .6-7.2-1.2-1.5-10.5-3 .4-7.8M268.7 102.1l9.9-2.8M290.9 88.9l-1.4 12.9M268.2 109.4l12.1 2.7M299.2 100.3l-8.5 3M301.8 112l-11.7-1.5M553.8 178.7l-5.3-1.2-.3-4.7 .8-1 4.9 .1 1.1 .9-1.2 5.9 .3 .3-.2 5.3-5.4 .3M547.6 178.4l.9-.9M555 172.8l5.3-.1 .1 5.8-6.3 .5M539.8 177.5l1-5.5 7.4 .8M555 166l-1.1 5.9M548.4 166.5l.6 5.3M540.8 172l-1.1-2.3 1.5-3.9M554.5 165.4l.2-5.1-.3-.4-5.6 0-.3 .2M485.8 149.9l3.6 1.6 4.2 9.7-5.4 6.4M499.6 183.9l1.5-7.2-6.3-4.2-1 0M531.9 161.7l-1.2 6.3M539.7 169.7l-6.8 .1M539.8 160.5l-6.1 .1M533.7 178.7l-1.3-1.5M532.5 184.6l-8.4-.3 0-6.7 .8-1.1M516.7 186l.5-.5 5.5 .3 1.9 7.4-8.8 1.7M524.6 193.2l.9 .8M524.1 184.3l-1.4 1.5M568.3 202.4l3.6-.5 .9-4.7-1.2-1.3-4.2-.4-1.3 1.4M560.3 195.7l0-4 .6-.7 5.5-.2 1 4.7M554 196.7l.6-6.3 5.7 1.3M553.9 184.3l.8 .7-.4 5.1-5.6 .9M554.3 190.1l.3 .3M554.7 185l5.3-.4 .5-6.1 6 .6-.3 5.5-5.5 .6 .2 5.8M560.7 185.2l-.7-.6M566.2 130.4l5.3-.2 .5 .5 .1 5.3-6.1 .5-5.9-.6 .3 6.8 5.5-.3 .1-5.9 0-6M560.9 124.4l-.5 .4M487.7 287.3l6.7 6.9 4.5 .1 .7-.7-.1-6.7-1.8-2-10.7 .7M499.4 301.2l-.5-6.9M506.7 294l-7.1-.4M492.4 297.1l2-2.9M507.1 285.6l-7.6 1.3M497.7 284.9l2.3-7.1-4.7-4.1-8.5 11.3M508.6 283.9l-4.7-6.3-3.9 .2M518.4 201.8l5.2-.3 .4 6.9-5.9 .4-.8-.7 1.1-6.3-1.2-.8M523.7 201.3l-.1 .2M512.3 208.7l5-.6M524.5 208.8l-.5-.4M512.1 214.3l6.6 .3-.6-5.8M542.1 213.5l2.8-.8 1.7 1 1.1 2.7-5.3 1.3-1.2-2.9 .9-1.3-2.3-4.7-3.1-.1-.2-7 4.4-.4 .5 6.2-1.6 1.3M540.8 244.9l.4-6.2 1.4-.8 1.4 .3 .9 .9 1.5 5.3M563.8 209.5l.2 1.3-1 2.1-3 .4-1.1-.6-.5-3.6M568.3 207.7l1.1 .6-.8 4.8-4.6-2.3M551.4 203.7l-.5 5.1 3.4 1.2 2.1-1.5M546.5 203l-.9 4.9 4.8 1.1-.9 2.9-2.9 1.8M541.4 207.5l4.1 .5-.6 4.7M550.9 208.8l-.5 .2M555.4 216l-5.5 2-.4-.4 1.8-4 3.1-.5 .9 1.5 .1 1.4 .7 .9-.8 4.6 1.1 .9 1.3 .2 2.5-1.5-1.6-3.9-2.5-.3M558.9 212.7l-3.6 1.9M554.3 210l.1 3.1M549.5 211.9l1.8 1.7M547.7 216.4l.9 1 .9 .2M533.9 200.3l2.6 1.4M536 209.3l.7-.6M536.3 214.9l.3 .4 4.6-.5M530.1 274.8l1.2 6.6-6.7-1.2 .7-5.1 4.8-.3 .6-.7-1.2-5.8 .4-.3 6.3 .8-.9 5-4.6 .3M521.4 285.8l0-2.9-2.9-3-6.2 1-2.4 2.9M536 250.4l-5.3-.7-.1-5.2 5.6-.2 .9 .9M541.2 238.7l-4.7 0-.3 5.6M529.5 268.3l-4.6 .2-.8-5.7 .6-.7 5.6 .1 .4 .5-.8 5.3M530.7 262.7l6.1 .7-.1 5-.5 .4M534.2 303.8l4.7-1 .8 .9 .8 4-.7 3.4-1 .1M591.8 302.8l-.6 .3-2.7-.6-1.2-4.3 2.5-1.2 2.5 2.1-.5 3.7 4.3 .5 .9-4-1.6-2.8 .2-1.2 3.7-1 1.8 3.6-1.5 1.2-2.6 .2M499.8 243.6l5.2 .5 2.2 6.5-2.1 2.9-10.1-.7 2.1 8.8 7.9 .7 .9 5.8-.9 1.3-10.7 .6-1.1-1.5 3.9-6.9M499.8 235.1l4.7-1 2.8 4.4-2.2 5.5 7-.1 .8 .7-1.3 6-4.4 0M503.9 277.6l1.9-2.5-.8-5.7M495.3 273.7l-1-3.7M481.3 267.3l11.9 1.2M505.9 221l6.3 .3 .7-.7M505.9 268.1l6.3 .8 .1-5.9-.9-.8-6.4 .1 1.3-6-1.2-2.8M597.8 4.5l1.5 0M579.2 34.7l-1.3 5.4M578.8 46.7l-.8-.7M572.3 34.5l.3 5.2M572.2 47.2l.8-1M567.1 40.9l4.7-.4M566 40l-.5-4.8 .5-.7M584.4 58.5l-.4 6.8-5.5-1.1 .6-5.2 5.3-.5M578.2 52.9l-.2 4.7 1.1 1.4M578 57.6l-6.1 1.4 1.1 5M577.7 64.7l.8-.5M584.2 71.1l.2-.2-.1-5.4-.3-.2M572.9 52.1l-1 .9M566.4 47.1l0 5.1M571.9 59l-.6-.5M566 64.4l.3-5.6M561 58.9l5-.4M560.6 64.7l-.6-.6M565.7 28.8l-4.8-.3-.4-.5-1-4.9M566.7 22.9l-.6-.8M560.5 28l-6 .8-.3-.2 .5-6.3 4.6 .5M560.2 16l.6 .6M560.8 10.6l.4-.3 4.6 .5 .7 5.7M578.2 16.8l-6.2-1.2-.7 .5M577.8 10.1l-5.2 .4-.6 5.1M561.2 10.3l-.2-2.1M637.9 24.3l.9 4.4-.4 .5M643.5 28.3l-4.7 .4M626.3 22.3l-.2 6.5 .3 .3 5.5-.4 .4 5.7M620.8 22.6l-.6 .6-.1 5.2 6 .4M554.2 21.9l-5.5 1-.8-.8 .3-5.8 6 .2 0 5.4 .5 .4M548.7 22.9l-.7 5 .5 .5 5.7 .2M554.7 15.7l-.5 .8M547.7 15.8l.5 .5M541.6 21.4l6.3 .7M542.5 28.9l5.5-1M566.2 117.9l.8 6 5 .4 .1-6.1-5.9-.3-.2-.1M565.7 125l1.3-1.1M572.1 118.2l.5-.5 5.1 .6 .8 .8-.9 5.2 6.2 .7 .2 5.6-5.3 .3-.7-.7-.5-5.8-5.5 0-.5 5.8M566.1 112.7l6.2-.1 .3 5.1M584.9 100.3l-6.6 .6 .5 5.3 5.8 .2 .4-.4-.1-5.7M584.6 106.4l.4 5.1 5.2 .8 .2-.2 .3-6-5.7-.1M584.3 76.1l5.6 1.2 .5-.4 0-6-6 0M583.7 81.8l1 .9 4.9-.5 .3-4.9M589.6 82.2l.2 .2 6.2 .3 .5-.7-.7-5.1-5.4 0M579.2 94.8l5.1-.4 .7 5.8 5.5 0 .3-5.4 5.7-.6 0 5.8-5.7 .5 .3 5.3 4.8 .4 1.3-5.4-.7-.8M596.3 65l-.2-.3-6.4-.5-.2 .2 1.5 6 4.5-.2 .8-5.2 5.2-.1 1-1.1M596.1 59.5l0 5.2M589.9 59.1l-.2 5.1M595.8 76.9l.5-.6-.6-5.9-.2-.2M590.4 70.9l.6-.5M584.3 65.5l5.2-1.1M548.1 40.4l.5-.5 5.4 .2 .2 6.3M541.6 34.1l6.4 1.3 .6 4.5M548.5 28.4l.7 5.6 5.7 .1-.4-5.3M549.2 34l-1.2 1.4M516.7 66.1l7.2 2.8-.8 6-6.6 1.5-1.8-8.7 2-1.6 1.6-6.2M525 60.2l-.4 8.1-.7 .6M514.7 67.7l-5.7-.8-.4 .5-1.4 8.6 9 .8 .3-.4M508.8 58.2l-1.5 2.4 1.7 6.3M498.4 86.6l-8.8-6.8-2.7-.5 .3 12 .5 .7 10.4-3.6 .3-1.8 1.6-1.8 6.4-1.6 .6-7.1-6.9-1.3-1.1 1.2-10.9-5.6-1.9 8.1 .7 .8M500 84.8l-1-8.6-9.4 3.6M516.2 76.8l-.1 6.9-7 1.6-2.7-2.1M507.2 76l-.2 .1M508.6 67.4l-9.5 1.3 1 6.1M467.3 111.8l-.5 .7-11.1-1-.5-9.9 9.1-1.3 .4 .4 2.6 11.1 7.6-1M466.1 121.2l.7-8.7M476.6 101.3l-11.9-.6M453.6 114.1l2.1-2.6M455 101.5l.2 .1M454.6 77.6l11.4 2.9-.8 9-10.4-.6M464.3 100.3l2.1-9.4-1.2-1.4M477.2 100.7l-2.4-9.7-8.4-.1M487.7 92l.3 8.6M487.2 91.3l-10.9-1.8-1.5 1.5M500.1 91.7l-2 9.5 7.9 .4 2.5-8.9-.2-.2-8.2-.8-2-3.3M493 104.6l5.1-3.4M509.1 85.3l-.8 7.2M507.7 127.1l6.3-.5 1 .7 1.7 8-.5 .4-8.5 .1-1.8-2.2 1.8-6.5-1.2-1.3-.2-7.3-8.4-.3 2.4 7.2 6.2 .4M515 127.3l8.2-1.5 1.3 1.4 .9 7-2.3 1.6-6.4-.5M499.6 134.8l6.3-1.2M497.8 127.7l2.5-2.3M497.2 117.7l.7 .5M566.1 70.4l-.4 5.6 .1 .2 6.6-.1-.1 5.3-6.3 .9-.2-6.1M516.1 83.7l1.1 1.1 0 6.8-3 2.5-5.7-1.4M491.1 24l-3.7 .7-.1-10.5 2.2-1.9 7.3 .5 .7 1.7-6.4 9.5 7 2.4-.8 7.6 1.3 .9 8.6-2.3-.1-5.6-6.2-2.2-2.8 1.6M478.7 12.8l8.6 1.4M486.8 25.3l.6-.6M488.4 8.2l1.1 4.1M498.6 8.8l-1.8 4M507.8 16.4l-7.1 .7-3.2-2.6M489.4 47.5l3.7 2.5 .3 0 .5-15.5-6-.9M507.5 51.8l-13-1.3-.4-.4 6.2-8 7.4-.5M657.7 271.2l1.7 4.3 3.3-.9 .5-3.5-3.6-1.2-1.9 1.3-2.2 .1-.8-4.2-4.9 .5 .5 2.8 3.8 1.9 1.4-1M632.3 297.5l-.1-4.2 3.9-.3-.5 4.9M577.4 208.2l.7-5.3-5.1-.1-.3 4.7 4.7 .7 .7 1.2-.3 1.6-4.2 1.6 1 4.3 3.2-.1 .1-5.6 4.6 2.5 .6-.6 3.5-.8 1.2 4-.8 .8-4.6-.1-.4-.4-3.5 .6-.3 5.3 3 .3 1.9-1.3-.7-4.5M571.9 201.9l1.1 .9M572.7 207.5l-.6 .7-2.7 .1M665.1 302.5l-1.2 0-.3 2M658.9 300.8l.3-2.3 3.5 .5 .7 3.2-2.2 .5M659.2 298.5l-.5-.9-5.2 2.2 .6 1.7 2.7 .4M601.1 285.5l2.8-1 1.8 1.5 .5 2.4-1.3 1.1-4.6-.3 .8-3.7-1.1-1.6-3.4-.3-1.7 2.3 .5 1.7 1 1 3.9 .6 0 3.9 4.3 1.2 1.1-.8-.8-4M605.7 286l3.7-2.7-.2-1.5-4.5-.3-.8 3M730.4 109.7l-4.3-1.2 .1-2 4.3-1.7 .6 .4-.7 4.5 .8 .7-.7 3.2M725.5 105.1l.7 1.4M729.5 101l1 3.8M721.2 109.5l-.8-5.5 1-.9M680.8 209.8l-1-1M687.2 208.3l-1.3 4-4.5-.1M690.1 208.6l.5 .4-.5 4.3-3.8-.5-.4-.5M810.7 227.5l.1-.3-3.7-.3-.3 2.2M800.1 231.3l-1.6-.4 .6-4.1 4 .6 .2 2M794.5 225.9l3.5-.5 1.4-3.4-1.3-1.3-4.1 .2 .5 5-.6 .6-.3 2.9-4.3 1.3-.2-5.5 .4-.5 4.4 1.8M794 220.9l-.3-.1-.4-3.6 4.4 0 .4 3.5M686.7 261.8l.4 3.5 3.1 .9 .3-.1 1.6-2.5-2.4-2.9-3 1.1-1.7-1.2-.2-2 .9-1.9 5 1.1 1.2-4 1.5-.4 1-4.3-.6-1.2-4.4 2 .3 2.5 2.2 1.4M749.4 249.4l-.7 .9-4.3-3-.1-1.8 .3-.4 3.5-1.2 1.3 5.5 3.1-.8 .7 .6 .9 3.9-.3 .4-5.5-1 .4-2.2M738.6 247.8l1.3 2.4 3.2-.1 1.3-2.8M740 245.7l4.3-.2M753 258.1l-.2 .3 .7 2.8 4-.1 .5-4.1-5 1.1 .8-4.6M744 233.8l-3.7 1.5 .2 4.4 1.7 .5 2.7-1.5-.6-4.6-.3-.3 .5-1.9-5-2.6 .5-2 1-.9 2.7 0 1.8 4.6-1 .9M734.8 240.2l1.3-1.1 3.7 .9-1.2 3M742.2 240.2l2.4 4.9M739.8 240l.7-.3M744.3 234.1l4.8 1.9-1.1 3.2-3.1-.5M723 248.4l-.6 5.2-4.5-1.9-.4-2.8 3.5-1.2 2 .7 1.6-.6 .5-4-2.1-.9-2.4 2.2 .4 2.6M713.7 234l2.9 .1 1-3.6-4.3-.5 .4 4-1.4 1.4 1.8 3.7 1.3 .4M713.3 230l-.5-.7 .2-1.7 3.7-1.8 1.8 4-.9 .7M723 242.9l-1.9-2.9M717.4 241.9l-.1 .7 3.3 2.5M716.6 234.1l1.8 1.3M725.1 243.8l.6-.4M730.9 244.9l-.7 3.3 4.3 1.5 .6 2.6 3.8-.3 .7 1.4-.6 3.7-.3 .3-2.9-.9-.8-4.1-4 1.3-.9-5.4-2.7 .7-2.8-1.2M738.9 252l1-1.8M736.3 247.7l-1.8 2M654.3 28.5l.7-.1M653.3 27.9l1.1-3.5M657.3 27.3l.4-2.4M602 28.1l.7-.8-.8-4.8-5.7 .4M602.6 34.1l4.9-.6 .5-5.2-5.3-1M613.9 22.5l.2-.2 .4-4.9-1.2-1.3-4.6 .3-.3 5.8 .7 .7 4.8-.4 .6 6.5 .1 .1 5.5-.7 .5 6.4 5.4-1 1.2 1.4-.8 4.8-1.2 .9-4.5-.8-.6-4.7 .5-.6M620.2 23.2l-6.1-.9M614.5 29l-6.5-.7 1.1-5.4M619.5 16.6l-5 .8M601.9 22.5l.6-.7 5.9 .4M613.5 14.5l-.2 1.6M602.6 10.6l-.2 .2-.9 5.7 .7 .8 6-1.3-.4-2.2M596.1 16.2l5.4 .3M602.5 21.8l-.3-4.5M596.2 10.2l6.2 .6M608.7 16.4l-.5-.4M667.8 54.4l0-3.2-.5-.7-4.9 1.2 .2 3.5 5.2-.8 1.3 1.1 2.1 .1 .3-.3 .9-4.4-.6-.5-4 .8M650.2 54.4l4.6 1.2-.7 3.2-2 2.1-3.6-2.6M650 50.7l2.8-.3 1.3-2.5M658.4 46.2l-1 1.6-1.8-.5M668.2 63.8l3.5 2.4-.3 1.9-.6 .8-3.8 .6-.2 3-1 1.8-2 .1-2.5-1.4-1.1-.1-.9-2.8 .2-.5 3.4-2.2M677.1 102.1l1.3-3.1-1.4-2.7-.5-.2-4 1.8-.1 1.3 4.7 2.9 .1 1.4-1 .9-2.8 0-1.9-3.8 .9-1.4M638.2 130l-5.4 .5-.7 .8 .4 4.9 5.7-.2 .5-.5-.1-5.2-.4-.3-.5-4.9-5.4-.7-.5-.5 1-4.9 5.5-.1 .7 4.9-1.3 1.3M659.3 70.1l-4.7-.6-1.3 3.9 .9 1 5.9-1.4-.7 5.1 3 .3 1.4-4M665 69l-3.7 4M638.4 52.8l-.9 6.2-4.8-.4-.7-5.9M644.1 59.2l.3 5.1-6.7 .2-.1-5.5 6.5 .2 .6-.8M709.1 101l-1.7-1.9-3.7 2.1 .6 2.1 2.4 1.4 2.4-3.7 2.9 .9 .1 2.1-.6 1.5 1.6 3.8 2.8-.4 1.5-4.2-5.3-.7M707.4 99.1l.5-2.8-.2-.2-3.6 0-.5 .4M703.6 101.1l.1 .1M691.2 62.4l-.6-2.3 4.3-1.2 .7 1.3-.7 1.2M694.6 56.2l-.9-.8 1.4-3.9 2.8-.8 1.7 4.1-.2 .4-4.8 1 .3 2.7M695.6 60.2l2.1 .5M699.4 55.2l.8 4.8M699.6 54.8l4-.9 1.1 2-.3 2.5-.9 .5M862.3 105.4l1.5 .7M876.4 111.1l-5.3 .2M876.4 104.1l-5.9-.2M869.7 91.7l-.2 6.4 7.5-1.3 .7-4.1-1.6-1.7-6.4 .7-.7-.7-5.5 0-1.4 1.4 .3 4.1 2.5 1.6M869.4 98.3l.1-.2M877.5 97.5l-.5-.7M883.9 91.3l-6.2 1.4M869 91l.5-6.8 2-.8 4.6 2.5 0 5.1M882.5 85l-3.6-.5-2.8 1.4M869.5 84.2l-5.2-2 0-4 6.6-3.9 2.8 3.3-2.2 5.8M863.5 91l-1-7.4 1.8-1.4M862.1 92.4l-5.4-1.5 1.3-6.9 4.5-.4M855.6 91.5l-4.9-.9-.7 8.6 5.7-.6-.1-7.1 1.1-.6M862.4 96.5l-5.4 3 1.6 5.9M857 99.5l-1.3-.9M850 99.2l-.5 .3-.1 4.5 1.9 3.2 6.7-1.2M884.7 82.9l-1.1-5.7-5.7 .7 1 6.6M873.7 77.6l3.4-.1 .8 .4M858 84l-1.7-1.1 0-7.1 .9-.6 6 1.7 1.1 1.3M713.4 68.1l3.5 1.1 .5 2-1.7 2-3.5-.1-.1-4M720.2 87.1l-1.8 1.2-.4 2.2 3 2 3-1-3.8-4.4 1.2-2.4 3.8 2 .1 .3-1.3 4.5 1.2 .8M729.5 87.5l-4.2-.5M726.6 81.1l.7 1.1-2.1 4.5M721 83.4l.4 1.3M727.3 82.2l3.2 1.5 .1 .5M713.1 86.9l.2-5.2 4.1 1.1-1.7 3.5-2.6 .6-.6 .5 .7 4 2 .5 2.8-1.4M718.4 88.3l-2.7-2M718.1 82.5l-.7 .3M726.4 55.3l-.4 .1 0-.4M749.4 163.3l-1.3 .6 1.3 4.2 2.5-.3 .8-4-3.3-.5-.1-3.8-1.2-1.4-3.6 2.6 .4 3.2-.6 .6-5.6-.6-.1 4.8-.4 .5 .4 2.4 1.8 1.8 2.5-.7 1.2-1.7-.5-2.3 .7-1.6 4.6 1.6-.6 3.4-4.2-1.1M738.6 168.7l5 0M744.3 164.5l0 2.6M744.9 163.9l3.2 0M749.4 168.1l-.5 .6M742.9 172.7l2 3.7 2.9-.9 .7-3.2-.2-.2M717.1 212.6l1.2 .9 1.8 .2 1.5-1.7-.6-4.1-3.5 .7-.4 4-4 .8-.3-5-3.8 .1-.7 3.8-4.5 .1M713 213.5l-4.7-1.1-.3 5.3 4.6 .6 .1-.2 .3-4.6M709 208.5l-1-1.2-4.8 1.5-.2 .4M717.2 208.4l.4-5.5-.6-.3-3.7 2.2 .3 2.7 3.6 .9 .3 .2M712.8 208.4l.8-.9M694.7 204.4l.5-.9 4.5 .4-1.3 4.8-3.3-1.6-.4-2.7-3.6 .4M690.6 209l2.4 .1 2.1-2M703.2 208.8l-.5-5.1-2.4-.1-.6 .3M693 209.1l2 4 1.8 0M717.7 120l-1.3-1.6 .6-3.8 .8-.3M722.5 96.7l-2.1-2.5 .6-1.7M711.5 105.5l-4 .4-.8-1.2M720.4 104l-2.5 .3-.5 .4M716.6 109.3l-.7-.4M717 114.6l-4.7-1.1 .2-3.2 .6-1M735.3 128.7l-1.2 3.3 .8 .5 4.5-1.1 .5-.9M731.5 122.8l2.8-.8M735.1 118.5l.5 .5M731.2 126.2l-.4-.2-.4-2.1M731.2 110.4l3.1-.8-.3-4.5-2.9 .1M731.8 99.7l2.1 .8 .2 4.5 4.8-.1 .7 3.3-.6 1.1 1.2 3-1.9 2.3-2.8-.8-.3-3.7 3.8-.8M891.1 62.7l1.6 6.7M898.7 69.5l-5.4 .4M897.6 77.4l-5-1.2M884 70.3l-5.3 .3-1.6 6.9M883.6 77.2l1.6-2.2M890.7 83.8l.4-6.7M849.5 99.5l-4.8-1.5-3.2 8 7.9-2M858.4 112.3l-1.9 2.7 .5 1.9 6.1 2.6M877.6 127.3l-.3 1.4M872.1 124.8l-2.4 2.9 1.3 2.1M266.4 111.5l3.8 10.5 6.9-.1 3.5-9.5M267.2 123.8l1.2 .1 1.8-1.9M267.8 132.7l.2 0 .4-8.8M268.6 144.4l.3-10.8-.9-.9M429.9 132.8l.8 13.8-3.9 3.3-10.7 1.2M447.6 148.3l-1.7 1.6-15.2-3.3M411.5 167.6l19.8-.2-4.5-17.5M277.8 145.3l.9-.8-.9-11.5-8.9 .6M290 142.7l-.4-.5-10.9 2.3M554 153.8l-5.2 .2-.5-.5-.2-4.4 1.3-1.4 4.5 .2 1 1-.9 4.9 .3 .5 .1 5.6M548.8 159.9l0-5.9M540.3 159.8l.7-4.9 7.3-1.4M553.9 147.9l.6-5.8-5.9-.2-.5 .5 1.3 5.3M508.1 185.3l.8-7.5-3-2.1-4.8 1M517.2 185.5l-2.4-8.8-5.9 1.1M524.1 177.6l-9.3-.9 1.2-6.7 7.8-.9M522.4 160.6l-5.5-.3-.5 .4-1 8.6 .6 .7M499.4 168l7.6-.3 .3-.4-.1-4.9-7.9-2.4-.7 .6 .8 7.4-4.6 4.5M505.9 175.7l1.1-8M493.6 161.2l5-.6M516.4 160.7l-7.8 0-1.4 1.7M515.4 169.3l-8.1-2M489.4 151.5l9.7-.3 1 1-.8 7.8M496.1 138.6l4.1 5-1.1 7.6M508.6 160.7l-.6-8.1-7.9-.4M507.7 135.8l-.2 6.9-7.3 .9M554.7 160.3l5-.5 .7-5.2-6.1-.3M561 165.8l-.2-5.1-1.1-.9M583.6 142.3l-4.5-.1-1.3-5.4 6.4-.6-.1 5.6-.5 .5 .7 6-5.7 .5-.4 5.4 .4 .5 5.6-.1 .9 5.6-1.3 1.1-4.9-.6-.8-.9 .5-5.1M566.2 184.6l.3 .3 .1 5.7-.2 .2M590 130.6l-5.7 .3 0 5.2 5.6 .8 .8-1-.7-5.3M584.1 141.8l5.6 .3 .2-5.2M551 315.3l-.6-3.7-4.7-.1 .5 4.4 3.8 .4 1-1 3.7 1.1 .9 .9-.5 2.1-4.4 1.4-1.2-1-3 1-.4 .5M546.5 320.8l-.7-4.5-3.3 .4M549.5 319.8l.5-3.5M546.2 315.9l-.4 .4M541.2 314.9l-1.1-3.6 5.5 .2 .9-5-.2-.3-5.8 1.5M540.1 311.3l-.3-.2M637.5 298.9l2.9-.9 .9 .8-.1 2.2M581.2 267.2l3 4.3 .5 0 1.7-1.1 .1-4.1-5.2 .7-.1 .2-3.6 1-1.4-1.5 1.6-4.9 .3-.4 3.9 .7-.7 4.9M586.4 270.4l4.3 1 .4 .4-.3 3.2-.6 1.1-4 .2-1.5-4.8M631.9 267.1l-4-1-1.4 1.6 1.1 2.2 .6 .6 2 .4 1.6-1.2 .1-2.6 .6-1-1.9-3.5-2.1 0-.6 3.5M529.2 215l.9 5.2-5.3 1-.7-.8M530.1 220.2l.3 .1 5.3-.4 .9-4.6M560 213.3l-.5 3.4 3.5 .3 .8-.8-.8-3.3M524.9 268.5l-.5 .5 .1 5.4 .8 .7M506.3 256.3l6.3 .6-1.2 5.3M536 238.3l-5.1 .6-1-.8 0-5.5 .2-.2 5.8 .3 .1 5.6 .5 .4M529.9 238.1l-5.2 .7-.3 5.2 6.2 .4 .3-5.5M530.3 262.2l.6-5.2-.6-.6 .3-6.6-6.1 .4-.8-5.5 .7-.7M530.9 257l5.4-.6 .8 6.6-.3 .4M545.8 254l.7 3.3-4.3 1.1-1.8-1.9M531.3 281.4l2.3 2.3 1.9-2.2 1-6.4-1.2-1.3M555.8 249.5l-3.6 .5-1.3 2.5 3.6 2.4 1.2-1.1 .1-4.3 .6-.5-2.4-4.2 .8-2.4 5.3 2.8-1 3.4-2.7 .4M546.6 251.8l4.1 .8 .2-.1M550.9 248.3l1.3 1.7M536.5 275.1l3.9-.2 1.5-3.1-1.5-2.5-3.7-.9M572.3 8.2l-.1 1.9-5.1-.5-.3-1.4M565.8 10.8l1.3-1.2M572.6 10.5l-.4-.4M632.6 41.1l-6.2-1.1M632 34.8l-4.8 .4M626.4 29.1l-.4 4.7M626.1 46.3l-.9-5.4M613.9 52.2l.5-5.5-6.5 .2M607.5 33.5l1 .9 5.5 0 .6-5.3M620.1 35.4l-6-.9-.4 5.9 6.5 .2-1.1 5.9-4.6 .1-1.1-5.9 .3-.3M602.4 39.8l5.4 .3 .7-5.7M607.6 46.5l1-5.6-.8-.8M571.8 106.5l.7 .7-.1 5.4 6 0-.7 5.7M578.8 106.2l-.5 .6-5.8 .4M590.5 100.2l.3 .3M590.7 106.1l.4-.3M590.4 112.1l5.9 .3 .3-.2-.3-5.5-.4-.5M578.2 94l-.7-5 1.5-1.2 5.4 .9 0 5.5 5.9 .1 .2-6-.5-.3-5.5 .6 .2-5.9M590.8 94.8l-.5-.5M584.3 94.4l.1-.2M596.5 94.2l.2-.1-.5-5.6-.4-.4-5.3 .2M579 87.8l-.1-5.2M589.8 82.4l.2 5.6M595.8 88.1l.2-5.4M559.8 40.7l-5.7-.7 .9-5.8 4.3 .1 .8 .7-.3 5.7 .6 .7M565.5 35.2l-5.4-.2M560.9 28.5l-1.6 5.8M523.1 74.9l2.4 1.7 .2 8-8.5 .2M532.3 60.6l1.2 7.2 5.9 .5 2.7-4.4-1.1-5M524.6 68.3l8.5 0 .4-.5M525.5 76.6l6.5-1.5 1.1-6.8M507.3 60.6l-7.6 .2-1.1 7.4 .5 .5M494.5 50.5l3 7.9 2.2 2.4M476.3 89.5l1.1-10.1 8.8-.9M498.6 68.2l-10.4 .1-.1 2.1M497.5 58.4l-9.6 9.3 .3 .6M515 143.4l1.4 1.1 .9 6.9-1.7 1.5-7.1-.6 .9-7.9 5.6-1 1.2-7.7M523.1 135.8l.1 7.8-6.8 .9M507.5 142.7l1.9 1.7M517.3 151.4l7.5 .5-.2-7.1-1.4-1.2M508 152.6l.5-.3M516.9 160.3l-1.3-7.4M525.3 152.4l-.5-.5M514.2 94.1l1.1 6.4-7.7 2.3-1.6-1.2M515.3 100.5l1.9 1.3 5.6-.2 .3-.4-.2-7.4-5.7-2.2M531.3 118.3l-6.1-.7-1.6-6.3 .8-1.5 7.5-1.3 1.4 1.6-2 8.2 1.4 1.1-.1 6.1-8.1 1.7M522.8 101.6l1.6 8.2M523.1 101.2l8.5-1 1.7 1.4-1.4 6.9M548.6 141.9l-.2-5-6.2-.6-2.1-3.1 1.4-2.9 6.9 .3 .3 .4-.2 5.8 5.7-.3M553.9 130.7l-5.2 .3M554.7 125.3l-5.9-.7-.4 6M554.5 142.1l.4-.2 .1-4.9M540.1 133.2l-7 1.5-.3-9 8 1.1 .7 3.5M523.2 125.8l.6-6.5 1.4-1.7M525.4 134.2l6.6 1.5 1.1-1M532.6 125.5l.2 .2M560.9 118.8l-1.1-6.5-4.7 .3-.2 6.1 6 .1M565.9 112.4l-6-.3-.1 .2M555.1 124.8l-.5-5.9 .3-.2M559.9 112.1l.6-5.8 5.2-.2 .8 .8M548.8 58.7l-.5 5.3 6 1.2 .9-1.2M542.1 63.9l5.4 .8 .8-.7M560.2 76l-.6 .6-4.6 .4-.8-.8-.5-5.8 .4-.4 5.8 .7 .3 5.3 5.5 0M560.2 70.4l-.3 .3M554.3 65.2l-.2 4.8M554.2 76.2l-6 .7 .9 5.5 4.2 .5 .8-.9 .9-5M578.1 82l-5.2 0-.6-.6M577.5 89l-4.8-.7 .2-6.3M572.7 95.4l-.9-.9 .8-6.2-6.3-.2-.4 .3-5.1 .3-1.2-1.1 .5-4.9 .8-.7 5.1 .3 .3 5.8M548.3 99.9l-8.6 1.7-.4-.4 1.7-7.2 7 1.1 .3 4.8 .3 .3-.4 5.7 6 .4-.1 5.5 1 .8M549.1 82.4l-.5 .5-1.4 5 1.6 1.5 5.6-1.3 .1-.2-1.2-5M493.9 34.5l3.4-.5M500.3 42.1l-1.7-7.2M494.1 50.1l-.7-.1M507.9 33.5l-.7-.9M509.5 25.1l-2.4 1.9M500.7 17.1l.2 7.7M659.6 269.9l-.1-3.2 3.7-1.4 1.3 .8-1.2 5 4.7 .3-1.6 4.9-2.1 .2-1.6-1.9M687.1 265.3l-2.4 1.7 1.7 3.1 2.3 .5 1.5-4.4M636.1 293l.2-.1 4.3 1-.2 4.1M646.9 285.3l-2.6-1.7-1-2.8 5.2-.2 .4 .6-1 3.8-1 .3-1.9 3.5 .5 .6-.4 4.5-4.3-.1 .8-5.4-.2-.2-5.1 1.9 0 2.8M651.1 298.3l-1.7-1.2-4.2 2.4 .7 2.4 2.2 1 3-4.6 1.4 .2 1 1.3M645.2 299.5l-.9-.6-3-.1M645.4 302.3l.5-.4M569.2 343.5l3.6-.8 .2 .1 .2 .8M592.3 299.1l3.1-2.6M600.3 293.1l-1 1.2M595.6 295.3l-1.1-1.2 1.9-5.5M600.2 301.7l-.6-2.6M598.1 303.5l-1.9-.1 0 1.6M601.1 297.9l2.8 .8 .7-4.4M591.2 303.1l0 4-.8 1.1-4.5-1.6 1.9-3.7 .7-.4M591.2 307.1l1 .3M639.1 231.1l1.2-1.4 4.3 1.4-.3 3.4-2.8 1.2-1.1-.9-1.3-3.7-3.1 .5-1.4-1.3-3.1-.6-.6 .7 1.5 4.9 2.5-.1 1.1-3.6M712.3 235.4l-2.2-.1-1.9-4.5 .5-5-4.3 1.6-.1 .3 1.6 3.1 2.3 0 4.6-1.5M740.3 235.3l-1.2-.9-3.7 2.1 .7 2.6M731.2 239.3l0-2.7 2.6-.9 1.6 .8M725.5 238.1l.4-1.1-4.5-3.4-1.6 1.9M614.2 190.6l-5.5-.6-.4 .3-.1 6.4 .3 .3 5.6-.6 .1-5.8 .2-.1 6 .1 .1 6-.3 .3-5.6 0-.5-.5M658.7 297.6l0-2.4 3.1-.9 .4 .5M662.7 299l.5-.7M663.9 302.5l-.5-.3M637.5 281.4l3.1-.8 .3 .2-.6 5.4-3.7-1.1 .9-3.7-.7-.4-4.6-.2 .6 2.8-1.9 2.8-3.5-1.2 .8-3.8 3.9-.7 .5-4.4-1.2-.7-4.7 .9 0 3.5-3.4 1.2-1.1-.8 .7-5 .3-.4 2.5 .6 1 .9M645 288.8l-3.4-.4M644.3 283.6l-3.4 3.3 .5 1.3M653.5 281.6l-4.6-.4M647.9 285l.4 .3 5.7 .4 .6-1.1M640.9 280.8l2.4-.1 1.1-3.6 1.7-1.2 1.9 0 .6 .5-.1 4.2M648.6 276.4l5-.3 .2 .2M644.3 298.9l.8-4.9 3.5 .6 .8 2.5M628.2 281.4l-1.5-1.4M628.2 270.5l-2.5 5.1M630.2 270.9l1.2 4.7M627.6 269.9l-5.2 2.6 .8 2.5M627.4 285.2l-.2 .2-3.8-.8-.2-.3 .1-3.1M664.5 266.1l1.9-.3 .2 .2 1.4 5.4 3.3 0 .4 .3 .2 2.5 4.4 2.3 .1 2.6-3.9 .4-1.5-3.1 .9-2.2M622.2 280.4l-3.9 .1-.1-3.7 4.7-1.4M622.4 272.5l-.6-.8-3.7-1-.7 .5 .8 5.5-4.1-.4-1.2 3.2 4.9 1.5 .5-.5M609.4 283.3l1.6 2.1-2 3.4-2.8-.4M614.2 295.2l.6-1.1-5.2-1.3-1.1 1.2 .8 2.8M617.3 294.8l-.1-.6-2.3-.1-1.1-4.2-3.8 .5-.4 2.4M605.7 293.5l2.8 .5M609 288.8l1 1.6M603.9 298.7l.3 .4M758.1 353.7l-.1-.9-.7 0M762.1 307.7l-.8 .2 .3 3.1 2.2 .1M759.6 302.9l-2.5 .5 1.1 3.8 2.7 .2 .3-1.5M758.1 299.8l-1.6 3.3 .6 .3M761.3 307.9l-.4-.5M810.8 227.2l.8-.8 .2 .1M779.9 219.8l-4.4 4.4 .3 1.2 2.7 .2 3.6-3.8-2.2-2-.5-1.6 1.8-1.9-.4-3.7 3.2-1.6 .7 .5 .3 4.6-3.8 .2M836.3 99.2l-5.6 1.1-.3 4.9 5.7 1 2.2-1.4-2-5.6 .4-.7 7.2-1.4-.1-4.5-2.1-2.1-6.2 1.7 1.2 6.3M799.1 226.8l-1.1-1.4M799.4 222l2-.4 1.5 .5 .3 5.3 3.3-.9 .6 .4M798.2 204.2l-4.8-1.2-1.1 1.5 1.2 3.8 3.6 .2 .7-.6 .4-3.7 1-.8-.7-4.1-5.2 .3-.3 .5 .4 2.9M782.1 221.8l.9 .3 2.9-5.3 2.5 .3 .7 4.9-6 .2 .9 4.7-3.3 .5-2.2-1.8M785.9 216.8l-.9-.7M789.5 224.7l-.4-2.6 4.6-1.3M793.3 217.2l-.5-.5-4.2 .2-.2 .2M789.2 209.1l-1.5 2.4 1.3 2 3.6-1.3-.4-2.5-3-.6-.6-1.2 .7-3-2.2-1.8-1.6 .3-.5 4.3 3.6 .2M797.1 208.5l.1 4.3-3.4 .6-1.2-1.2M793.5 208.3l-1.3 1.4M793.8 213.4l-1 3.3M788.6 216.9l.4-3.4M784.7 211.5l3 0M788.7 189.8l-.7-.5 1.5-3.2 3.2 .7-.6 2.3-3.4 .7 .5 4.6 3.4-.1 1 .8-.3 4.5M788.2 198.5l-4.1-.5-.1-3.7 .7-.6 4.4 .8-.9 4 .5 1 4.3 .6M764.7 316.2l-1.5-.2-2.4-4 .8-1M704.1 250.1l4.7-1-1.5-3.5-4-1.2-.5 .4 .1 3.3 1.2 2-.6 2.7-.2 .2-4.5-1.1-.3-2 4.4-1.8M681.2 212.7l.6 4.3 4.2 .6 .3-4.8M695 213.1l-1.4 .9-3.4-.6-1.1 4.1-3 .2-.4 3.8 3.5 1 .2 3.4-4.7-.6 .5-3.3 .5-.5M680.7 240.6l4.1 .4 .4 1.9-3.8 3.2-.7-5.5-1.4-.7 1.8-4.1 4 .4 .2 3.9-.5 .9M698.5 249.9l-.4-.4 .3-5 1-.5 3.4 .8M767.3 225.3l3.4 2 .3 .5-1.3 2.6-3.1 .3-.7-4M766.4 230.9l.2-.2M690.5 266.1l3.3 2.7-.1 2-3.8 1.2-1.2-1.4M689.9 272l-.7 3-.2 .3-3.1 .9-1.7-3.3 2.2-2.8M759.5 265.9l-.7-.2 .4-3.8 2-1 1.8 1.2M761.2 260.9l.2-1.8-3.3-2.2-.1 .1M757.5 261.1l1.7 .8M762.3 248.8l3.1-.8 .3-2.1-3-2.8-1.7 1.6 1.3 4.1M757.3 231.3l1.2-4.5-4-.1-.8 3.8M754 235.1l-1 1.3-3.7-.6 .5-4.8 2.8 .2M761.9 235.7l-1 .4-3-1.3M758.5 226.8l.3-.2 2 .1M748.1 243.9l.8-.6-.1-2.6-.8-1.5M753 236.4l.5 2.4-4.7 1.9M749.1 236l.2-.2M717.2 248.7l-.8-4.9-3.1 .6-1 1.3-.3 2.4 1.4 .8 3.8-.2 .3 .2M717.3 242.6l-.9 1.2M717.9 251.7l-1.5 2-3.2 .5 .2-5.3M703.5 252.8l3.6 1.1 2.1-1.7-.4-3.1 3.2-1M707.3 245.6l1.7-1.7 3.3 1.8M713.3 244.4l-1.7-3.4-2.3 0-.3 2.9M714.1 239.1l-2.5 1.9M748.3 252.5l-.9 .8 .8 3.5 1.5 1 3.1 .6M743.1 250.1l1.6 2.9 2.7 .3M739.6 253.4l4.4 .3 .7-.7M667.3 50.5l-.4-4-3.4 .1-.2 .1-1.8 3.5 .9 1.5M659.6 45.7l3.7 1M663.5 46.6l-.7-2.2M703.3 48.9l-.4 .9 1.3 2.6 2.8-.8 1.6-1.5-.8-2.4M701.1 49.5l1.8 .3M707 51.6l2.1 3.3-.9 1.1-3.5-.1M703.6 53.9l.6-1.5M697.9 50.7l.2-.4M687.6 78.5l-1.3-.7 .8-3.4 2.3-.6M655.4 54.9l2.1 0 1.6-4.9-1-.6-3.4 2.6 .7 2.9-.6 .7M652.8 50.4l1.9 1.6M657.4 47.8l.7 1.6M661.5 50.2l-2.4-.2M658.7 60.7l4.1-2.5-.6-2.4-2.8-.1-1.6 4 .9 1 .1 3 3.7 .5M664.1 60l-1.3-1.8M654.1 58.8l3.7 .9M657.5 54.9l1.9 .8M662.6 55.2l-.4 .6M669.1 55.5l-1.7 4.3M689.5 59l-2.5 .1-1.1-3.6 6.2-.1-2.6 3.6 1.1 1.1M693.7 55.4l-1.4-.1-2.7-4.1 .3-.8M671.5 55.3l4.9-.2-.4 4.5-3 1-.2 .4 .4 3.3 3.2 .7 1.9-2-1.5-3-.8-.4M672.4 50.9l3.6-.6 1 .8-.6 3.9 4.8 1.5-.2 1.8-4.2 1.7M671.4 68.1l5.6 1.1 .7-.4-1.3-3.8M671.7 66.2l1.5-1.9M668.7 61.1l4.1-.1M671.2 55.6l1.8 5M681.6 59.4l-1.8 3.8 1.1 .9 4.2-.5 .6-.7-.1-1.5-4-2-.6-1.1M678.3 63l1.5 .2M689.2 64.1l-3.5-1.2M687 59.1l-1.4 2.3M676.4 81.3l-4.4 1.6 .2 4.1 4.2 .1 .2-5.6-.2-.2-.5-3.6 5.5-.7-.5 1.7M676.5 96.1l-1.3-3.6-2.3-.4-1.6 4.6 1.2 1.2M675.2 92.5l1.1-1.3 .2-4-.1-.1M672.2 87l-.3 .2-.2 3.8 1.2 1.1M683.4 92.1l-1.8-.6-1 .7-1 2.4 2.3 2.1 .3-.2M677 96.3l2.6-1.7M681.9 96.7l-.9 2.4-2.6-.1M676.3 91.2l4.3 1M681.6 91.5l-.8-3.3 4.2-1.2M676.5 87.2l3.5 .1 .8 .9M638.2 136l.4 6.5-5.5-.1-.6-.6-.3-5.2 .3-.4M626.3 160l-5.5 .8-1-1 1-5.4 5.4 .7 6.2-.4 .5-.6-.7-5.4-5.3-.4-.7 6.8 .1 4.9 .6 .7 5.4-.2 .8-.8 5.1 .9-.7 5.6-5.2 .3 0-6M643.8 184l.9 1 5.4-.5 .1-3.1-1.2-2.6-4.5-.1-.4-5.4-5.6-1-.5 .5-.2 5.6 6.6 .3-.6 5.3-5 .7 0 5.7 5.7-.2 .3 5.9-.4 .5-6.3-.6 .4-5.3 .3-.3M644.1 173.3l.9-.9-.7-6.1-5.4 1.2-.4 4.8M631.8 123.9l-4.6 .9-1.7-6.2 .3-.3 6.4-.1 .6 .8M632.8 130.5l-.5-6.1M632.1 131.3l-5.5-1.2 .1-4.8 .5-.5M639 123.8l4.7 .8-.2 4.9-4.9 .8M643.8 112.8l-4.9-.6-.4 .4 .1 6 5.8-.3-.6-5.5 .6-.5 .2-5.9-.6-.6-5.5 1.1 .4 5.3M643.7 124.6l1.2-1.1-.1-4.9-.4-.3M638.3 118.9l.3-.3M632.2 118.2l-.1-5.1 6.4-.5M655.2 112.6l-2.8-2.9-1.9 .1-1.1 2.6 .3 .7 3.4 1.4 2.1-1.9 2.7-.1 .2-.3 .1-2.7-.2-.2-2.7-1.5-.4-2.1-4.4-.4-1.2 2-4.7-.9M649.3 107.3l1.2 2.5M644.4 112.3l5 .1M655.3 107.8l-2.9 1.9M649.7 113.1l-.9 4.4-.4 .4-3.6 .7M644.9 123.5l3.1 .8 2.7-2-2.3-4.4M638.7 135.5l5.1 .7 1-5.6-1.3-1.1M648 124.3l1.3 2.8-1.4 3.3-3.1 .2M638.6 142.5l.2 .2-.3 5.6-6.2 .2 .8-6.1M638.5 148.3l.6 .6-1.1 5-5.1 .2M632.3 148.5l-.1 .2M671.9 87.2l-4.1-.2-.2 5.6 4.1-1.6M654.6 82l-.4 .5 .4 4.1 4.4 .5 .2-4.3-1.4-1.6-3.2 .8-1.6-3.7 1.4-2.8 4 3.3 1-.7M644 105.8l.8-5 3.6-.1 1.9 .9 .2 3.7M670.8 68.9l1.4 3.6 3.2-.2 1.6-3.1M666.8 72.5l4.7 1.6 .7-1.6M658.8 63.7l-1.1 .7 1.8 5.2M657.7 64.4l-2.7 .4-2.9-3.4 0-.5M632.7 58.6l-.3 .3-.7 5.5 .3 .4 5.6-.2 .4 5.7 .4 .3 5-.2 1-6 3.8 .5 3.9-3.5M700.2 96.3l.5-4.2-1.8-1.2-2.4 1.6M704.1 96.1l-1.3-4.2-2.1 .2M707.7 96.1l-1.2-4.6-1.6-.6-2.1 1M690.4 70.8l.1 .7M708.2 56l.4 1.1M704.4 58.4l.2 .2M709.1 54.9l3.2-.7 .9 1.1-1.7 3.1M878.7 70.6l-2.7-1.5 1.2-3.7M850.7 90.6l-.4-.3-.5-4 2-2.9 4.5-.5M844.7 98l-.8-.9M838.3 104.8l3.2 1.2 1.3 4.7-7.2 2.9 0 4.3 6.4 2 2-1.5-.8-7.3-.4-.4M850.3 90.3l-6.5 2.3M835.5 92.2l-.8-.5-5.6 .9-.9 5.9 2.5 1.8M849.8 86.3l-7.5-1.7-.2 .2-.4 5.7M842.6 74.9l-.4 1.3 2.5 2.7 3.9-.7 1.8-3-.1-.3M856.3 75.8l-5.9-.6M857.2 75.2l0-.3M851.8 83.4l-3.2-5.2M842.3 84.6l2.4-5.7M719.9 76.7l.7-3.6 5.5 1.5-.2 1.7M717.4 71.2l3.1 1.7 .1 .2M717.4 77.6l-1-.4-.7-4M730.5 83.7l.2-.1M727.2 78.6l4-.4M730.8 71.8l-.6 1.2 1 .8M730.2 73l-2.9-.2-1.2 1.8M722.6 65.6l.6 2.4 .6 .6 2.1 .5 1.4 3.7M726.3 67.4l-.3 1.6 1.9-.9M720.2 64.5l-2.2 .9-.4 3 5.6-.4M716.9 69.2l.7-.8M720.5 72.9l3.3-4.3M725.9 58.7l-.2-3-3.1-.9-2 4.9M708.6 50.1l3.4 .8 1.1-4.4M712.3 54.2l-.2-3.2 5.8-.6-2.5 5.4-2.2-.5M725.7 55.7l.3-.3M721.6 51.3l-.5 0 .2 1.8 1.3 1.7M721.3 53.1l-4.5 4 .9 2.2 2.4 .6M749.4 217.5l4-.2-1.1-4.9-3.7 .8 .8 4.3-.6 .8 .4 3.2 .5 .4 3.2 .6 .3-.3 4.3 .3 1.3 4.1M754.5 226.7l-1.4-1.5-.2-2.7M748.5 172.3l4.1 .1-.1-3.9-.6-.7M757.5 177.5l-4-1.7 0-2.7 2.6-1.1 2 1.1-.6 4.4 .4 .7-.2 2.5-4.1 1.3-1.2-.6-.4-3.8 1.5-1.8M758.1 173.1l2.5-.4 1.5 3.7-4.2 1.8M747.8 175.5l1.3 1.3 2.9 .8M752.6 172.4l.9 .7M752.5 168.5l4.5-.4-.9 3.9M738.2 169.2l-4-.2-.7 3.6 1.9 1 3.2-2M744.9 176.4l-1.3 2.1-3.5-1.5-.6-.9 .9-2.7M735.4 173.6l1.1 2.5 3 0M761.9 185.3l.9-.6-.4-2.7-.7-.6-4-.7 1.1 4.9 3.1-.3-.1 4.1-3.7 .1-.4-2.6-3.5-1.1-1.1 1.1 .9 3.3 4-.6 .2 3.2 3.1 1.5-.9 4.7-1.1-.1-1.2-.4-2.6-3.8 2.7-1.9M750 182.2l-2.7-1.4-3.1 .2-.4 .8 .5 2.8 4.4 1.8 1.3-4.2 2.4-.8M749.1 176.8l-1.8 4M754.2 185.8l-.6-3.8M753.1 186.9l-3.9 .6-.5-1.1M743.6 178.5l.6 2.5M748.6 188.8l.3-.5 4.2 3.2-.1 3.1-4.2-.7-.2-5.1-4.3 1.3-1.5-3.2 1.5-2.3M749.2 187.5l-.3 .8M754 190.2l-.9 1.3M721.4 198.7l-1.1-3.2-2.5-.9-1.4 1.5-.7 3 .2 .2 5.5-.6 .7 .6-2.2 3.9-2.3-.3M717 202.6l-1.1-3.3M720.3 195.5l2.4-1.8-.2-2.2-2.8-1.6-2.6 .6 .7 4.1M714 190.4l3 .1-.1-5.4-5 1 2.1 4.3-.4 .4-1.8 3.3 4.6 2M715.7 199.1l-2.6 .1-1.5 4.3 1.7 1.3M718.3 213.5l-1.4 4.3-.2 .2-4 .1M703.2 215.5l1.7 1.7M708 217.7l-.8 .3M700.6 222.1l-.2 .1-.1 5.5 4 0M704.4 227.4l.1-4.3M711.9 226.2l1.1-4.9-.4-.5-4.5 2.4 .8 2.4 3 .6 1.1 1.4M708.7 225.8l.2-.2M706.6 222.4l1.5 .8M712.6 218.3l0 2.5M708 207.3l.1-3.7-4.3-.8-1.1 .9M711.6 203.5l-3.4 0-.1 .1M711.7 198.3l-.2-4-3.4-.5-.9 1.1 .5 3.3 1 .9 3-.8 1.4 .9M711.8 194.1l-.3 .2M708.2 203.5l.5-4.4M695.2 203.5l-.6-3.2-.9-4.1 1-.8 4.4 .5-.4 3.1 4.8 .6 .3 3.2M707.2 194.9l-4.3 .2 .7 4.3 4.1-1.2M721.6 207.3l4 2.1 2.2-1.4-3.3-3.5-2.6 1.2-.3 1.6-.6 .6M721.6 212l3.4 .2 .6-2.8M719.9 203.2l2 2.5M720.4 94.2l-3.1 2.5-2.1-4.8M712.5 87.4l-2.9-.9-2.5 4.6 5.8 .6 .3-.3M734.7 114.4l.8-.6M734.3 109.6l.9 .5M738.4 115.3l-.1-.7M735.7 90.5l1.2 .1M735.2 95.1l1 .8 0 3.7-2.3 .9M856.5 115l-5.2-2-3.3 6 2.4 2.6 5.7-3.3 .9-1.4M851.3 107.2l-1.3 3.2 1.3 2.6M451.3 166.4l-5.6 17.1-12.8-2.1-.9-13.5 14.7-6 4.6 4.5 11.2 .7M446.9 184.8l-1.2-1.3M445.9 149.9l.8 12M431.3 167.4l.7 .5M431.7 182.3l1.2-.9M303.4 134.1l-3.7-2.9-10.1 2.5 0 8.5M300.5 121.8l-.7 .6-8.8-1.5-2.2-8.9M299.8 122.4l-.1 8.8M541.2 142l-8.1 .3 1.1 7.5 5.2 1.6 2.8-3.5 .2-4.6-1.2-1.3 1-5.7M532 135.7l1.1 6.6-8.5 2.5M548.1 142.4l-5.7 .9M548.1 149.1l-5.9-1.2M532 151.6l2.2-1.8M541 154.9l-1.6-3.5M572.8 197.2l4.9-.7 .3 .3 .7 5.7-.6 .4M566.5 179.1l.3-.3-.1-6.4 5.9 .2-.1-6.6-5.7 1.3M566.8 178.8l5 .3 .2-.2 .6-6.2 5.2 .1 .7-5.6-.6-.7-5.4-.5-.7-5.4 6.3-.8M566.5 184.9l5.9 .2-.6-6M590.2 112.3l-.5 5.7-5.6-.3-.6-4.8 1.5-1.4M578.3 106.8l.7 5.3 4.5 .8M579 112.1l-.6 .5M584.1 117.7l-.8 .9-4.8 .5M596 118.6l-5.7 .1-.9 5.1 .3 .3 6 .5 .3-.3 0-5.7 .2-.1 .1-6.1M589.7 118l.6 .7M595.7 124.6l-.1 5.2-5.5 .7-.4-6.4M589.4 123.8l-4.8 .4-1.3-5.6M625.9 143.1l.4-.3-.1-6.3-.3-.2-5.7 .4 .6 6 5.1 .4 .9 5.1-6.3 1.1 .1 4.9-6.2 .1-.5-5.6 6 0 .4-5.6-6.1-.2-.4 5.7-5.5 .3-.3-.2 .1-6.5 5.3-.2 .8 .9M572.8 325.7l-3.8-.9 .4 5.3 2.5-.4 .9-4 .6-.6M555.4 324.4l.6-2.7 4.5-.4 .5 3.5-2 1.1-3.6-1.5-1.4 .9-2.5 .1-.8-4.6M560.5 321.3l.5-1.2-2.4-3.5-3 .7M555.1 319.4l.9 2.3M561 324.8l3.1 .7 .5 2.9-4.8 2.1-.8-.4 0-4.2M650.4 303.4l2.8 .1 .1 .2M654.1 301.5l-.9 2M648.1 302.9l.1 .2M573 342.8l1.9 .1M582.4 308.4l-4.3-.5 0 2.1 3.3 4.1 1.8-2.4-.8-3.3 1.4-1.3-1.9-4.7-2.5 .4-1.3 5.1-4.6-.7-.2 .2-.6 3.9 4 1.1 1.4-2.4M590.7 271.4l.1-5.5-4.1 .1-.2 .3M586.7 266l-1.1-3.6-.2-.2-2.8-.4-.6 .3M544.9 239.1l6.3 .2 .4 .5-3.1 4.3M582 243.9l-3.6 1.2-1 1.2-.1 .5 1.6 2.1 2.2 1.2 1.8-.9-.6-5.1-.3-.2-.4-4.2-3.1-.2-1.8-3.6 1.6-1.7 2.3 .3 1.8 1.8-.3 2.9-.5 .5M626.5 267.7l-2.5-.6-2.2 4.6M621.8 258l.2-5.1 .3-.3 3.4 0 1.6 1.3 .3 3.1-.5 .7-5.3 .3-.5 .5-3-.4-.9-.7-3.6 .7-.5 .7 .7 3.6 2.7 .5 1.6-4.8M627.6 257l4.3 .3 1.9-4.1-2.6-1.8-3.9 2.5M542.6 237.9l-1.3-5.7-4.3-.6-1.1 1.1M542.6 221.7l-.3-.3-6.1-.9-.3 6.1 .3 .3 5.5-1.1 .9-4.1 1.8 0 6.2 1.5-.2 1.9-3 1.6-3-5 4.2-4.3M549.9 218l1.5 3.8-.8 1.4M550.4 225.1l.5 .6 4 1.5 1.5-4.8M551.4 221.8l3.9-.3M559.5 216.7l-.9 .5M563 217l-.4 4.1-2.4 0M568.6 213.1l.3 .5 4.2-1.3-1-4.1M563.8 216.2l4.5 .7 .6-3.3M562.6 221.1l1.1 1.2 3.3-.2 1.7-4.6-.4-.6M563.7 222.3l-1.2 3.4-2.9 0-1.9-3.1M567 222.1l.7 .7 6.1-1.2-.7-3.3-4.4-.8M562.5 225.7l.7 1.4 4.6-.2 .7-1.8-.8-2.3M524.1 262.8l-5.6 .3-.2 5.5-6 .4-.4 5.4 .1 .2 6.3 .6 .2-.3-.2-6.2 6.1 .3M518.5 263.1l-.4-.5-5.8 .4M524.5 274.4l-6 .5M505.8 275.1l6.1-.7M518.5 279.9l-.2-4.7M521.4 282.9l3.2-2.7M512.3 280.9l-.3-6.3M576.7 312.4l.3 3.3-2.3 .3-2.2-4.5 .2-.2M574.7 316l-2.1 1.6-4.2-2.2 .2-2 3.9-1.9M533.6 283.7l0 2.5 5.5 1 1.6 2.2 0 5.7-.7 1.2-.7 .3-5.3-1.9-.5-8.4-9.4 2.3M540.7 295.1l4.2-2.6-.1-2.7-4.1-.4M532.2 296.1l1.8-1.4M538.9 302.8l.4-6.2M573.2 297.7l.7 .4-1 6-4.1-2.1-.2-2.2 4.6-2.1-.8-3.2-4-.1-.3-5.1 .2-2.7 4.6-2 .3 6.2-5.1-1.5-3.3 .8-1.5-1.2-.4-2.9 1.7-1.7 3.4 1.7 .3 .6M594.5 294.1l-2.9-.8-1-2.9 4.8-2.8M589.8 297l.9-2.9 .9-.8M594.9 285.9l-3-1.2-1.7 1.1-1.1 3.4 1.5 1.2M590.2 285.8l-3.7-2.2 .9-2.1 3.8-1.3 .7 4.5M546.5 257.3l.8 .6 2.2-.1 1.2-5.2M512.2 226.5l.2 .2-.9 5.8-5.5-.2-.8-5.6 7-.2 0-5.2M505 226.6l.2 .1M504.5 234.1l1.5-1.8M507.3 238.5l4.9-.7 .2-4.4-.9-.9M512.1 243.9l.1-6 6 1.1-.2 5.2-.4 .4-4.7 0M620.7 40.1l-.5 .5M620.3 52.4l-.3 .4-5 .5M608.6 40.9l4.8-.2M608.5 82.7l-5.7-1.3-.9 .8 .3 5.6 .9 .7 4.6-.7 .8-5.1 .5-.4 0-5.7-1.4-1-4.8 .9-.6-.5-.3-5.5 .6-.6 5.1-.2 .3 .3-.3 5.6M596.2 88.5l6-.7M596.5 82l5.4 .2M596.7 94.1l5.9 .4 .5-6M596.3 76.3l5.9-.3M602.8 81.4l0-4.9M595.7 70.4l6.2 .1M601.5 64.9l1 5M607.7 64.5l-.1 5.2M632.4 58.9l-5.5-.2-.4 5.3 5.2 .4M620 52.8l1.1 5.3-.2 .3-6.9 .1 1.4 6.1 5.2-.5 .3-5.7M627.2 52.7l-1.1 5.1-5 .3M626.1 57.8l.8 .9M609 82.3l5 .4 .6 .5-.1 5.6-5.8 0-1-1M608.5 63.8l6.1 1.6-.6 4.6-6.1 0M615.4 64.6l-.8 .8M522.9 93.8l2.1-1.7 1.1-7.1-.4-.4M531.6 100.2l-.1-5.8-6.5-2.3M547.7 76.5l-5.5 .1-.7-.9-.1-4.9 6.3-1.2 1.1 .9-1.1 6 .5 .4M542.2 76.6l-.4 5.1 6.8 1.2M553.7 70.4l-4.9 .1M547.5 64.7l.2 4.9M539.4 68.3l2 2.5M541.5 75.7l-8 1.1-1.5-1.7M466 80.5l2.9-2.4 6.3-.3 2.2 1.6M455.7 70.3l8.6-2.6 4.6 10.4M464.3 67.7l.3-.5-.8-10.8-.3-.3M486.4 58.3l.7 8.6-11-.4-.5-.6-.5-8.9 .8-.8 10.5 2.1 6.7-8.3M487.9 67.7l-.8-.8M477.3 47.3l-1.4 8.9M475.2 77.8l.9-11.3M463.8 56.4l11.3 .6M464.6 67.2l11-1.3M515 118.9l-8.1-1.2 .1-6.2 1.7-1.7 6.2 .8 .6 .6-.3 7.4-.2 .3-1 7.7M506.3 118.5l.6-.8M523.8 119.3l-8.6-.7M523.6 111.3l-8.1-.1M497.2 110.3l9.8 1.2M517.2 101.8l-2.3 8.8M507.6 102.8l1.1 7M540.4 119.1l1.2 6 6.8-1 .3-5.2-.2-.2-8.1 .4-.8-.8-6.9 1.1M540.8 126.8l.8-1.7M548.8 124.6l-.4-.5M554.6 118.9l-5.9 0M572.2 101.1l-5.5-1-.8 .7-.2 5.3M571.8 94.5l-4.9 .3-.2 5.3M554.4 88.1l.6 5.3-1.3 1.1-4.9-.1 0-5M565.9 100.8l-6-1-.3 5.6-5.3 .7-.7-5.4 1-1 5.3 0 .6-4.5-.9-1.1-4.6-.7M548.6 100.2l5 .5M560.5 106.3l-.9-.9M548 95.1l.8-.7M553.7 94.5l.9 5.2M566.9 94.8l-.6-.5-5.8 .9M554.5 87.9l5.1-.3M559.6 94.1l1.2-5.4M566.3 94.3l-.4-5.9M554.1 82l6 .7M559.6 76.6l1.3 5.4M548.3 113.5l.7-.9-1.5-6-5.7-.1-1.7 4.7 .6 1.4 7.6 .9 .2 5.2M554.1 111.8l-5.1 .8M539.6 118.3l1.1-5.7M548.2 105.9l-.7 .7M539.7 101.6l2.1 4.9M539.3 101.2l-6 .4M533.3 110.1l6.8 1.1M666.4 276.3l1.4 .9 3.2-.8M675.7 283.9l1.9-3.7 1.2 .1 1.7 3.2-3.5 3.1-1.3-2.7-3.7-.3-.3-2.8-3.8-.4-.9 .9-.4 3.2 5.2-.7 .2-.2M682 287.8l.3-3.4 2-1.1 2.4 1.8-1.6 2.3M675.8 271.2l4.5 1.7-.4 1.8-3.1 1.1-1-4.6-.2-.2-3.9 .7M676.3 276.5l.5-.7M686.7 285.1l2.7 .2 .1 1.7M658.5 276.9l.9-1.4M659.9 280l1.8 .3 1.6-1.1 1-2.7M663.2 288.6l.6-3.7-.6-.3-3.3 1.3-.2 3.3 3.2 1.6 .1-.8M658.7 295.2l-1.6-1.1 .9-4 1.7-.9M663.1 291.1l-.2-.3M661.8 294.3l.9-1.5M657.5 284.4l2.4 1.5M654 285.7l-.1 2.1 4.1 2.3M661.7 280.3l1.5 4.3M663.8 284.9l2.5 0 1 2.4M632.8 283.6l3.8 1.5-1.5 3.3-3.3-.1-.9-1.9M640.9 286.9l-.6-.7M635.1 288.4l1.2 1.7M623.4 284.6l-.7 4.6 .7 .8 2.6 0 1.2-4.6M631.8 288.3l-.4 .7-5.4 1 1.2 2.5 1.5 1 2.6-.8 .9 .6M631.3 292.7l.1-3.7M667.2 209l.3 .6 3.8-1 .9 4.5 3.3-.3M676.6 214l-.4 3.7-3.9-1-.4-3.2 .3-.4M675.6 204.1l-.3-.3-4.1 .5M667.3 226.8l-4.6-1 .4-3.5 3.4-.4 .8 4.9 .3 .2-.6 3.2-3.4 1.4-1.3-.8-.1-4.7 .5-.3M667.9 253.5l2.8-.8 1-3.3-.5-1.3-4.4 .8 1.1 4.6-.3 .3-.2 2-4 2.7-.3-.1-1.1-5.3 .9-.3 4.7 1M666.5 240.8l4.9-1.8-.2-2.3-2.5-.1-2.8 3.5 .6 .7 .8 2.4 1.2 .9-2.2 4.3-2.1-.3-1.1-2.8 4.2-2.1M671.2 236.7l.8-1.3-1.8-3.3-1.9-.7-1.1 3.9 1.5 1.3M618.1 217.2l-4.4 1.3 .4 3.3 2.7 .3 1.3-4.9M616.8 222.1l1.3 1.6-.4 2.4-.2 .3-3.9 .5-1-3.8 1.5-1.3M703.5 235.3l.2 3 1.3 1.7 3.1-.1 1.7-4.3-6.2-.5-.1 .2-4.2 .1-.9 3.7 .7 .6 4.6-1.4M705.9 230.8l-2.1 2.4-.2 1.9M710.1 235.3l-.3 .3M699.1 239.7l.3 4.3M703.3 244.4l1.7-4.4M709.3 241l-1.2-1.1M716.7 218l1.7 5-1 .8-4.4-2.5M716.7 225.8l.6-1 .1-1M720.1 213.7l1.8 2.9 3.5 .3 1-2.8-1.4-1.9M716.9 217.8l3.6 .4 1.4-1.6M718.4 223l2.4-.9-.3-3.9M717.3 224.8l5.2 3 1.1-1-1.3-4.2-1.5-.5M718.5 229.8l2.8 .5 1.2-2.5M721.4 233.6l.6-1.6-.7-1.7M627.2 208l-4.2 .5-.8-.7 .2-4.4 3.8-.7 .6 .4 .4 4.9 .8 1 4.1-1 .1-.1-2.2-5-3.2 .2M620.5 196.6l5.8 0-.1 6.1M620.2 196.9l.5 5.6 1.7 .9M630 202.9l2.1-1.6-.1-3.9-5.5-1-.2 .2M632.2 207.9l3.5-.1-1 4.7-3.1 .5 .5-5M582.5 213.7l-.5 2.9M587.8 216.3l2.9-.1 .8-3.2-4.7-1-.2 .3M653.4 288.6l1.9 5.6-.5 .3-4.6-2.3 0-1.6 .1-.2 3.1-1.8 .5-.8M657.1 294.1l-1.8 .1M648.3 285.3l2 5.1M648.6 294.6l1.6-2.4M645.5 289.4l4.7 1.2M652.5 298.5l2.3-4M631.8 269.7l4.2 1.1-.1 4.5 3.3 .5 1-.6 1.8-3.2-1.3-1.8-4.7 .5 .4-4-1.2-1.2-2.7 .6M642 272l1.2 .1 2.9 3.8M644.4 277.1l-4.2-1.9M632.6 276.3l3.3-1 .9 5.7M640.6 280.6l-1.4-4.8M600 283.9l1-3.6-5.1-.2 .7 3.5M604.7 281.5l-1.1-1.4-2.3-.1-.3 .3M595.9 280.1l-.3-.4-4.2 .3-.2 .2M590.2 276.1l1.2 3.9M590.8 275l6 1.2-1.2 3.5M614.6 288.6l-1.2-2.9 1-1 3.2-1.4 1.4 1.7-.1 3.3-.5 .5-3.8-.2-.8 1.3M611 285.4l2.4 .3M614.4 284.7l-1.9-5 .4-.2M617.8 281l-.2 2.3M612.5 279.7l-2.4 .4-.9 1.7M623.2 284.3l-4.2 .7M622.7 289.2l-3.8-.9M659.5 266.7l-.5-.5-.8-4.1 .5-.4 4 1.3 .5 2.3M666.4 265.8l1.1-3.3-.5-1-2.7-.9-1.6 2.4M667.4 255.8l1.7 2.5-2.1 3.2M664.3 260.6l-.9-2.1M663.1 258.4l-3.5 .4-1.2-1.7 2.3-4.1 1.3 .1M658.7 261.7l.9-2.9M655.1 253l-2.1-4.4 .9-.9 4.5 .6 .2 .6 .1 2.4-3.6 1.7-.4 .7-4.8 .3-.3-4.9 3.4-.5M658.4 257.1l-2.7-.6-1-2.8M660.7 253l-2-1.7M662.9 252.8l.9-4.2-5.2 .3M653.9 247.7l.1-2.7-4.4-2-.3 .4-.2 5.4 .5 .3M632.6 258.2l-1.3 3.9 4.4 .4 .5-.6 .2-2.5-3.8-1.2-.7-.9M628.5 262.6l-1-.9-.4-4M630.6 262.6l.7-.5M635.2 265.5l.5-3M768.5 329l-1.9 .3-.6-3.4 1.1-1.2M766 325.9l-4.1-.7 1.3 3.9 3.4 .2-.2 3.6 3.4 .9M739.6 324.5l1.3-3.3 3.3 0 1 3.2-1.2 2.2-3.5-.5M762.3 322.6l-4.9-2.4 .9-2.5 3.1-.4 1.5 4.7-.6 .6-.4 2.6-4.4 1.4 .1 1.9 .7 1.4 3.5 .8 1.4-1.6M758 352.8l.6-.9-1.7-4.1-1.4 .5M758.8 265.7l-1.8 1.1-.3 2.8 .9 .6M753.5 261.2l-.5 1 .9 2.7 3.1 1.9M760.8 312l-1.7 .5-1.6 3.2-4-.9-.6-2.8-3.8-1-.3-2.9 .4-1.1 4.2-.7 .4 4.8 2.8-.5 .8-2.9-4-1.4 .9-3.4 2.2 .2M758.2 307.2l-.8 .5M759.1 312.5l-2.5-1.9M752.9 312l.9-.9M815.5 223.4l-.9-1.7 1-.9 2.2 1.5M811.6 226.4l-.1-3.7 3.1-1M762.7 243.1l.2-1.7 3-1.4 .8 5 3.5-.7-.4-2.9-3.8-1.5 .2-3.4-.3-.3M765.7 245.9l1-.9M760.9 236.1l-.3 3.7 2.3 1.6M775.8 225.4l-.7 1.3 1.1 3.5 2.9 1.1 .1-.2 1.5-3.7M766.2 236.5l5.1-.5 .3 3.9-1.8 1.5M770.2 244.3l.1 .2 5.3-.4 .5-.6-.5-1.9-.5-.6-3.5-1.1M789.1 225.2l-4.7 2-.4-.3M797.2 233.1l-.1-1.4-2.3-.7-2.5 4 1.8 1.7 .4-.1M798.5 230.9l-1.4 .8M793.6 229.4l1.2 1.6M775.6 241.6l4.3-3.1 1.8 2-2.3 3.6-3.3-.6M789.2 230.8l-.4 4.1-.2 .1-3.4 .2-.9-.6-.1-4.4 .6-1.3 4.4 1.9M792.3 235l-3.5-.1M784.4 227.2l.4 1.7M784.3 234.6l-4.3 .3-.6 .9 .5 2.7M781.7 240.5l2.3 .1 1.2-5.4M779.2 231.1l5-.9M779.1 231.3l.9 3.6M812.1 190l-.6 .1 .4 3M811.7 195.7l-4.7-1.3 .2-3.6 4.1-.8-.4-4.7 1-.2M817.1 107l-2.2-1.7 3.3-6.4 2.9 .1 1.3 1.1-.1 5.3-5.2 1.6-.7 2.6-4.5-.1-.1-4.4-4.2 .8-.5 1.5 3.6 3.8 1.2-1.7M821.1 99l.3-7.6-5.8 1-1 3.2 2 2.8 1.6 .5M814.9 105.3l-2.5-.6-.3-3.3 4.5-3M784.7 193.7l-.1-4.6-5.2 2.6 .7 2.2 3.9 .4M778.4 203.7l1.6 1.3 .1 1.6-1.1 1.5-3.6 1.5-1-.8 .5-5 .4-.2 3.1 .1 1-5.2 3.6 .6 1.1-1.1M779.4 195l-4.8-.3-.4 .6 .6 3 4.5 .2 .1-3.5 .7-1.1M783 199.1l.9 3.7 1.6 .6M788.7 199.5l-1.6 3.6M792.3 204.5l-3 .4M784 211l-.3-2.1 1.3-1.2M797.7 217.2l.5-.8 3.8 1.4-.6 3.8M797.2 212.8l1.2 1-.2 2.6M806.9 207.3l-3.5 .2-1.5 1.8 .6 3.6 .2 .2 4.2-1.4 0-4.4 .2-.2 0-2.8-5.6-.8 2.8-3.8-2.1-2.3 .4-2.5 4.3-.4-.3 4-1.6 1.2-.7 0M799.2 203.4l2.1 .1 2.1 4M797.8 207.9l4.1 1.4M798.4 213.8l4.1-.9M802 217.8l1.7-1.8-1-2.9M792.6 194.3l.4-3.8 4.5-.4-.6 4.2-.2 .3-3.1 .5M798.5 199.3l.3-.8-2.1-3.9M779.4 191.7l-.7-.7 1.3-5.4 .5-.2 3.7 1.5 .6 1.8-.2 .4M738 320.2l1.6-.8-.3-1.5-1.3-.6M740.9 321.2l-1.3-1.8M765.7 321l-2.8 1M757.5 326.6l-.6-.4-.2-5.6 .7-.4M763.2 316l-1.8 1.3M757.5 315.7l.8 2M756.7 320.6l-2.8-.3-.8-5 .4-.5M744 253.7l-1.1 2.8-3.9 .6M748.2 256.8l-3.3 2.4-2-2.7M672 235.4l3.3-.6 2 5.7-.2 .2-4.8-.4-.9-1.3M676.2 217.7l.7 1 4.5-1.2 .4-.5M681.4 217.5l.7 3.8-1.1 1.1-3.3-.2-1.1-2.1 .3-1.4M696.5 222.2l-1.7 1.9-4.1-3.1 .2-2.2 2.2-.8 2.2 1 1.2 3.2 3.9 0M698.2 216.3l-2.9 2.7M693.6 214l-.5 4M689.1 217.5l1.8 1.3M700.3 227.7l-.5 .5-5.3-2.9 .3-1.2M703.8 233.2l-4.5-3 .5-2M698.8 251.9l-.8 1-3.8 .8-.8-.3M698.1 249.5l-3.7-.4M703.3 253l-.9 3.9-2.7 .8-1.7-4.8M713.2 254.2l-.5 .4-3.5-2.4M707.1 253.9l.6 3.3-4.3 .5-1-.8M707.7 257.2l1.4 .9-1.6 3.3-3.1 .5-1-4.2M685.7 256.7l-.3-1.6 1.1-1.7 3.2-1M689.4 249.9l-1-1.6-2.4-.2-1.9 1.1 2.4 4.2M762.6 221.5l-3.9-.2-1.3-4.2 .4-.4 4.9 1.5-.1 3.3 .4 .5M757.5 222.5l1.2-1.2M753.2 222.2l1-4.2 3.2-.9M779.4 218.2l-1.8-.7-1.6-4.4 4.1-.8 .7 .3M762.3 208.1l-.9 4.9 1.5 .7 3.5-2.4 .2-1.4-4.3-1.8-.3-.3 .7-2.9 4-.3 .9 4.5-1 .8M762.9 213.7l1.1 3-1.3 1.5M757.8 216.7l.5-3.1 3.1-.6M692.1 263.6l2.7-.8-1.3-3.7-2.8-1.2-1 2.8M694.2 253.7l1.8 3.6-2.5 1.8M699.7 257.7l-.8 .6-2.9-1M694.8 272l-.5 3.5 .1 .3 5-.5-.7-3.4-3.9 .1-1.1-1.2M689.2 275l5.1 .5M694.4 275.8l.2 3.7-3.1 .4-2.5-4.6M766.2 259.5l.4-.7 .5 0M766.6 258.8l-1.4-1.4 .7-3.7 .3-.1 4.7 1.7 .1 .6M761.4 259.1l1.2-1.4 2.6-.3M762.3 248.9l-.1 3.9-1.3 1-2.2 .1-1.4-1 .8-4 4.2 0M765.4 248l2 1.7-1.2 3.9M765.9 253.7l-3.7-.9M758.1 248.9l-.8-1.1-.1-3.2 3.8 .1M754.1 253.1l3.2-.2M757.3 247.8l-4.1 1.4M762.6 257.7l-1.7-3.9M758.1 256.9l.6-3M754.2 218l-.8-.7M749.7 221.9l-1.8 4.3-2.9-.8 .2-3.5 4-.4M753.1 225.2l-3.9 2.7-1.3-1.7M749.8 231l-.8-.6 .2-2.5M752.5 244.6l4.3-.5 .4-3.2-.8-.9-2.4-.7-2.1 4.9 .6 .4 0 4M757.2 244.6l-.4-.5M748.9 243.3l3 .9M753.5 238.8l.5 .5M760.6 239.8l-3.4 1.1M757.6 235l-1.2 5M716.9 258.4l.4 3.6-3 .6-1.6-1.3-1.3-3.5 .8-1 4.7 1.6 1.4-1.6-1.9-3.1M712.7 254.6l-.5 2.2M712.7 261.3l-3.7 2.1 0 3.1 2.2 .3 1.8-.7 1.3-3.5M707.5 261.4l1.5 2M709.1 258.1l2.3-.3M722.4 253.6l.2 .4 3.9-.1 .9-4.9M718.3 256.8l3.4-.3 .9-2.5M683.8 73.2l-2.1 .6-.9-1-.9-3.6 .3-.2 4.8-.9 1 .9-.1 .6M686.2 69l-.2 0M685.1 63.6l-.1 4.5M680.9 64.1l-.7 4.9M687.1 74.4l-.2-.1M677.7 68.8l2.2 .4M675.4 72.3l1.2 2.2 4.2-1.7M675.2 42.8l-.1-.6 1.5-1.5 .5-2.4 .6-.5 .8 0M677.6 35l.1 2.8M673.9 37.1l3.2 1.2M683.6 46.2l-2.4 .4-1-1.4 .1-.5M680.2 45.2l-4.2 .5-.3-1M695.1 51.5l-.3-.3M685.6 55.2l.5-2.1-1.8-2.4-3.4-.6-.5 .4 1.5 5.3 3.7-.6 .3 .3M689.6 51.2l-3.5 1.9M681.2 56.5l.7-.7M685.4 48.8l-1.1 1.9M677 51.1l3.4-.6M681.2 46.6l-.3 3.5M676 50.3l-.5-3.9 .5-.7M680.3 81l-.3 1 1.5 1.2 2-.4 .5-.7 .6-3.7-1.1-.6M681.9 76.9l-.2-.1-.3 .2M676.6 81.5l2.7 .4M679.4 81.9l.6 .1M680 87.3l1.5-4.1M685.5 85.4l-2-2.6M686.3 77.8l-1.7 .6M681.7 73.8l0 3M686.5 82l-2.5 .1M676.6 74.5l-.8 3.1-3-.5-1.6 5.1 .8 .7M665.8 74.3l2 3.4 3.8-1.4-.1-2.2M672.8 77.1l-1.2-.8M662.4 78.4l1.1 .9 3.9-.6 .4-1M671.2 82.2l-3-.7-.8-2.8M632.4 154.7l.7 5M620.8 160.8l.3 5.1 5.4 .3 .4-5.5M620.6 154.2l.2 .2M620.5 149.3l-.6-.6M625.8 177.8l-5.3 .9-.7-.6 .1-5.8 .6-.5 5.4 .7-.1 5.3 1 .8 4.8 .1 .5-6-5.8-.6 .5-5.6 5.4 .1 .4 5.6-.5 .5M625.9 172.5l.4-.4M638 172.8l-5.4-.6M638.9 167.5l-1.4-1.3M626.5 166.2l.3 .3M619.9 172.3l-5.1-.9-.3-5.3-6.1 .5-.7-6.3 .3-.3 6.3 .6 .3 5.3 6.3 .1-.4 5.8M645 172.4l3.8-.1 .8-.5 1-2.9-3-2.7-3.2 0-.8-5.6-4.7-.5-.7 .5M638 153.9l.6 .6 .3 5.6M626.6 130.1l-.5 .4-.2 5.8M632.2 136.6l-6-.1M632.5 141.8l-6.2 1M620.3 143.1l.5-.4M613.4 142l1.1-4.9 .4-.4 5.1-.2 .2 .2M626.7 112.1l-.1-5.8 6.1 .1 .2 .2-1 6.2-5.2-.7-.3 .2-.6 6M632.1 113.1l-.2-.3M638 100.7l6.7 0-.8-5.5-5.2-.9-.8 .7 0 5.5 .1 .2 .3 6.1-5.4-.2M632.3 95.2l.5-.4-.3-6-.4-.3-5 .6-.2 4.7 5.4 1.4-1 4.8 1.1 1.1 .3 5.3M657.9 103.8l-.4-3.2-3.8-.8-.7 .8 2.2 4.4 2.7-1.2 1.6 .9 2.2-.3 .4-4.4-3-.6-1.6 1.2M658 109.3l1.5-4.6M654.9 105.7l.3-.7M650.3 101.6l2.7-1M653.7 99.8l0-2.6-3.8-1.7-1.5 5.2M643.8 136.2l.4 .5-.4 5.4 4.8 .2 1 2.7-1.3 3.4-3.6 .3-1-6.6-4.9 .6M658.4 96.5l1.3-1.8-2.7-3.1-1.8 .4-.4 .4 0 3.5 3.6 .6 .7 2.9M653.7 97.2l1.1-1.3M663.4 91.4l-.7 .6-1.3 2.4 2.1 2.8 4.1-2.1-.3-2.2-3.9-1.5-.5-3.3-3.9-1-1.2 3.6-.8 .9M655.2 92l-1.2-4.8 .6-.6M667.6 95.1l.7 .8 3 .8M667.6 92.6l-.3 .3M668.3 95.9l-1.3 5.3-4.1-1.7 .6-2.3M662.9 99.5l-.8 .5M659.7 94.7l1.7-.3M657.8 90.7l4.9 1.3M663.4 87.6l3.5-1.2 0-3-4-1-.3 .2 .8 5-.5 .5M667.8 87l-.9-.6M659.2 82.8l3.4-.2M668.2 81.5l-1.3 1.9M663.5 79.3l-.6 3.1M658.4 78.8l-.6 2.4M655 64.8l-1 3 .6 1.7M648.2 64.9l1.5 3 4.3-.1M643.4 70.4l.2 .2 4.9-.4 1.2-2.3M648.5 70.2l2.3 3.2 2.5 0M654.4 75.5l-.2-1.1M643.6 70.6l1.2 5.2 3.2 .3 2.8-2.7M644.8 75.8l-.7 .8-4.9 .8-1.4-1.6 .6-5.2M653 78.3l-3.5 .6-1.5-2.8M698.8 84.1l.6 2.7-1 1.3-1-.3M698.9 90.9l-.5-2.8M716.4 77.2l-2.8 .9-.5 3.4 .2 .2M712.2 73.1l-1 1 2.2 3.9 .2 .1M704.9 90.9l-.6-2.7-2.5-1.8-2.4 .4M706.5 91.5l.6-.4M709.6 86.5l-1.6-1.9-3.7 3.6M715.5 64l.7-.5 0-.8M718 65.4l-1.8-1.9M717.7 59.3l-1.4 1.5M715.4 55.8l1.4 1.3M876 69.1l-3.8 .7M870.9 74.3l-.1-3.4M863.2 76.9l.2-2M766.3 178l.1 1.8 .3 .4 4.6 1.2 .8-.5-.1-3.6-1.4-1.2-4.3 1.9-1.7-1.4-2.1-.1-.4-.1M772.1 180.9l2.5 1.2 2.4-1.9-1.2-3.9-3.8 1M814.8 86.5l1.5 .1-1.3 5.1-2.6-1.2-.2-1.6M842.2 76.2l-6.7 .3-.1-1.6M829.1 92.6l-1.6-1.6-6 .2-.1 .2M822.4 100.1l5.8-1.6M721.2 50.9l-.1 .4-3.2-.9-.5-1.9M757.7 186.9l1.1-1.3M762.5 176.5l-.8 4.9M766.4 179.8l-4 2.2M742.9 153.4l1.4 2-2.2 2.9-2.7 0-.7-3.7M738.5 163.7l.9-5.4-5.1 .2-.7 4.3 1 .9 3.9 0 .2 .2M742.1 158.3l2.4 2.4M734.2 169l-.6-.8 1-4.5M735.1 152.6l-.5 .5-1.1 4.5 .8 .9M736.5 176.1l-1 1.2-3.5 .1-1.3-2.5 .1-.7 .2-.3 2.5-1.3M732 177.4l-.9 3.4-.8 .3-3.7 .2-1.1-3.3 5.2-3.1M761.3 194.3l1.3-.6 .6-3.4-1.4-.9M758.1 198.5l-4.2 1.9-1.5-1.9 .7-3.8 2.4 0M744.3 155.4l3.9-.3-.1 3M760.6 172.7l1.5-2.6 3.7 2.7-1.2 3.8M724.5 204.5l.9-1.5 4.7 1.6-1.2 3.4-1.1 0M722.1 199.3l3.3-.1 0 3.8M722.7 193.7l3.4 1.9 .3 .5-.6 2.8-.4 .3M717.1 121.9l-.7 .5-.9 4.4 .8 .4 4.2-.3 .1-2.6M712.3 136.3l-4.5-1.6-.2-2.9 4.7-1.5 1.3 2.5-1.3 3.5 .4 1.2 3.3 0 2.8 3.6-.6 .6-5.1 .2-1.1-2.5 .7-1.9M713.6 132.8l3.9 .1 .6-.9-1.8-4.8M715.5 126.8l-2.7 1-.5 2.5M712.5 110.3l-4.7-.6-1.2-1.6 .9-2.2M704.3 103.3l-.7 .9 0 4.8 3-.9M703.6 104.2l-4.2 2 .2 1.8 4 1 .2 5 3-.9 1-3.4M699.3 101.3l-.6 4-.2-.1M699.4 106.2l-.7-.9M675.3 203.8l.8-4.5 1.2-.4 1.9 .4M685.7 204.7l-.8-1.1M690.2 203.9l.3-3.2-1.4-1-3.6 1.5M707.9 96.3l3.3-.5 2 4.8 2.2-.6 2-2.1-.1-1.1-6-1.1 1.6-4M712 101.9l1.2-1.3M717.9 104.3l-2.5-4.3M721.7 100.3l-4.3-2.4M741.1 99.4l-1.1 .5-1-5.1 .2-.2M736.2 99.6l2.9 1.2 .9-.9M736.2 95.9l2.8-1.1M739.1 100.8l.5 2.8 2.4 .1M738.9 104.9l.7-1.3M739.6 108.2l2.8 0M850.4 121.6l.4 4 7.2 .8-1.9-8.1M884.4 127l-.6 .3 0 .2M879.3 126l4.5 1.3M288 124.9l1 8.1-11-.2-.1-10 10.1 2.1 3-4M289.6 133.7l-.6-.7M277.1 121.9l.8 .9M560.8 160.7l5.3-1.1 1 .8-1.5 5.7M567.1 160.4l4.6 .1 .2-6 .8-.6 5.5 .3M554.9 148.9l4.7-.5 .6-5.5-5.3-1M560.4 142.7l-.2 .2M583.9 184.1l.2-.2 6 .3-.7 5.4-5.3 .9-.2-6.4-6.1 .4 1.5 6.1-1.3 1.1-5.1-1.3-.3-.5 .3-4.5 4.9-1 0-5.5-5.8 0M572.4 185.1l.5 .3M566.6 190.6l6-.7M571.6 195.9l1.3-5.5M577.7 196.5l.3-4.8M578 196.8l6.2-.3 .6-.7-.8-5.2-4.7 0M584.3 130.9l-.3-.3M584.6 124.2l-.8 .8M578.7 130.9l-1.1 5.6 .2 .3M572.1 136l.7 .7 4.8-.2M572 130.7l6-.5M564.6 328.4l1.1 1 3.2 1.1 .5-.4M564.1 325.5l1-1.1 3.8 .1 .1 .3M573.4 335.9l.1 2.7-.4 .3-4.5-.1-.4-.6 1.5-3.7 3.6 .9M572.8 342.7l.3-3.8M568.1 343.3l.5-4.5M568.9 330.5l-.1 2 .9 2M573 330l-1.1-.3M574 338.7l-.5-.1M568.8 332.5l-4.8 2.8 .2 2 4 .9M565.7 329.4l-2.7 4.6 1 1.3M560.1 341l.3-1.7 2.8-.8 2 4.2M564.2 337.3l-1 1.2M559.8 330.5l1.4 2.8 1.8 .7M555.1 338.7l.5-.4 3-.6 1.8 1.6M561.2 333.3l-2.4 2.5-.2 1.9M548.6 325.7l2.8-.2 0 5.3 4.3-.3 .7 .5-.4 2.3-1.1 .9-3.2 .3M568.9 324.5l1.4-2.7 2.2-.8 1.5 2.9M581.1 250.1l-.5 2.9-3.5 1.7-1.5-1.2 3.3-4.6M591.2 265.6l-.2-4.3 .2-.3 5.3 .8 .6 .6-1.8 3.8-4.1-.6-.4 .3M585.6 262.4l5.4-1.1M596.5 261.8l-.6-5-4.5-.3-.6 1 .4 3.5M585.4 262.2l1.6-4.4 3.8-.3M596.5 253.7l-2.2-1.7 .5-2.8 3.7 .5 .8 2.1-2.8 1.9-.1 2.8 3.9 .1 .3-4-1.3-.8M578.5 239.5l-1.7 1.5 1.6 4.1M582.1 239.2l4.8 .8 .2 .3-.6 3.8-4.2 0M587 217.1l.5 4.4-.9 1.1-3.5-1.1M590.7 216.2l.3 .4-.2 4.2-3.3 .7M559.6 225.7l-1.5 2.1-3-.3-.2-.3M550.9 225.7l-.2 6 3.5-.9 .4 .4 1.7 3.5-.6 .6-5.1-.6-.4-.4 .5-2.5-3.5-1.9-2.3 1.3-2.4-.1-.1-4.3 4.7 .2 .1 2.9M555.1 227.5l-.9 3.3M550.2 234.3l-3.2 .8-3 3.1M551.2 239.3l-.6-4.6M551.6 239.8l2.9 .8 .3 1.8M555.7 235.3l-1.1 5.2 3.9-.7 1.6-4.1-1.5-1.1-2.3 .1M551.1 245.9l2.9-1.1M559.1 248.6l.3 .3 .2 5.7-3.9-.8M554.6 231.2l4.6-.4-.6 3.8M563.2 227.1l-.5 2.9-3.1 .3-1.5-2.5M559.6 230.3l-.4 .5M576.7 235.9l-2.7 .2-.6-4.8 4.1 .2 .8 2.7M576.8 241l-2.4 0-.6 2.6 3.6 2.7M603.6 225.8l-2.8-.4-2.4 1.2 1.9 4.3 3.1-1.5 .7-2.6-.5-1 1.4-3.1 3.8-.4 0 4.5 4.5 .5 .3-.4M600.6 252.6l3-.7 .2 .1 .5 5.6-3.9-.8-.1-.2M603.8 252l5 .5 .4 1.4-1.8 3.7-3 0-1.3 3.9-4 .2 1.3-4.9M609.2 253.9l3.2 .9 2.2-1.7-.7-4.3-.5-.3-3.5 .6-1.1 3.4M609.9 249.1l-.9-1-.7-3.6 .6-1.9 4.8 2.3-.3 3.6M600.6 244.4l1.5-.4 1.5 .9 1.3 3.4-1.3 1.4-3.6-2.3 0-2.4 .6-.6-1.9-4.1 1.1-1.2 4.7 .1 .1 .2 4.3 1.9 0 1.3M594.8 249.2l-.5-.7 2.9-3.7 2.8 .2M598.5 249.7l1.5-2.3M608.3 244.5l-4.7 .4M604.6 239.4l-2.5 4.6M609 248.1l-4.1 .2M603.6 251.9l0-2.2M595.9 256.8l.5-.3M591.4 256.5l-.1-.7 .9-2.4 2.1-1.4M586.3 257.2l-.5-3.9-3.2 1.3-.2 2.6 .2 .4 3.7-.4 .7 .6M585.8 253.3l.7-.9 4.8 3.4M582.6 261.8l0-4.2M580.6 253l2 1.6M577.1 254.7l.4 2.5 4.9 0M577.5 257.2l-.1 .3 .7 3.9M591.9 247.4l-.7-2.2-4.3-.6-1 5.4 .6 .7 3.3-.9 2.1-2.4 2.4 1.1M592.2 253.4l-2.4-3.6M582.9 249.2l3 .8M586.5 244.1l.4 .5M586.5 252.4l0-1.7M597.2 244.8l-1.3-1.2-4 .2-.7 1.4M617.4 257.4l-.1-3.2 1.6-1.6 3.1 .3M617.3 254.2l-2.7-1.1M612.4 254.8l1.4 3.3M607.4 257.6l1.2 1.7 4.7-.5M623.3 263.3l-.4 2.5-4.5 .8-.3-.3-.6-2.5 4.2-2.4 1.6 1.9 4.2-1.6M624 267.1l-1.1-1.3M621.3 258.5l.4 2.9M616.7 262.9l.8 .9M618.1 270.7l.3-4.1M618.1 266.3l-5.1 .6-.6-.6 .3-2.8 1.3-1.1M535.9 226.6l-5.2 .2-.6 5.6M537 231.6l-.8-4.7M535.7 219.9l.5 .6M530.7 226.8l-.3-.3 0-6.2M542.4 217.7l-.1 3.7M547 235.1l-2.1-3.9M541.3 232.2l1.2-1.1M541.7 225.8l.7 1M547.4 226.7l-.3 .3M578.5 217.2l-.7-.4M573.1 218.3l1.5-1.4M573.1 212.3l.5 .3M578.1 209.4l4.2-1 .8 4.7M573.8 221.6l.6 .9 3.8 0-.2 4.4 4-.3-.8-3.8M568.5 225.1l4.7 .7 1.2-3.3M583.8 307.1l1.5-.1 .6-.4M587.8 302.9l-5.1-1.2-.8 .7M573.5 307.2l-.2-2.6 4.5-3.1 1.6 1.3M512.6 256.9l.9-.8-1.1-4.8-.8-.7M517.6 244.6l.4 5.1-5.6 1.6M544.8 289.8l1.4-1.7 0-2.3-3.6-.8-3.5 2.2M554.5 254.9l-.3 2-4 1.2-.7-.3M571.6 256.2l-2.6 1.5 .3 3.9 .1 .2 2.3 .2 1.2-.6 1-3-2.3-2.2 1.2-2.2 1.4-1 1.4 .5M577.4 257.5l-3.5 .9M569 257.7l-.7-.5-3.6 .7-1 1.2 1.4 2.4 4.2 .1M577.8 261.8l-4.9-.4M576.2 266.7l-1.7-.2-2.8-4.5M572.8 275.9l.2-4.1 4.5-1.9 0 5.1-4.7 .9-.3 .2-4.2-.8-.2 5.8-3.6 .2-1.2-1.2 1.3-3.9 .4-.3 3.2-.7-.1-2.5-3.4-2.5 .1-2.2 1.1-.9 2.1-.4 1.2 1 .5 2.4-1.6 2.6M584.2 271.5l-1.8 1-4.9-2.6 .1-1.7M574.5 266.5l-.9 .5-1 4.3 .4 .5M545.5 271.7l1.6 4.6 2.6-.4 .5-.5 .3-4.6-5 .9-.2-.1-3.4 .2M524.7 238.8l-.7-.6-4.8-.3-1 1.1M523.7 244.7l-5.7-.5M512.4 233.4l5.9-.8 .9 5.3M614.9 136.7l-.9-6.1-4.6 0-1.1 5.1 6.2 1.4M620.5 106.8l6-.6-.1-5.5-.3-.2-6 .5 .4 5.8-.2 .3-6.2-.8 .3-5.5 5.3-.1 .4 .3M631.3 100l-4.9 .7M626.9 93.8l-1.5 1.3 .7 5.4M620.2 95l.9-.8-.3-5.3-5.9 .3-.2 4.7 .2 .3 5.3 .8-.5 5.7M625.4 95.1l-4.3-.9M602.5 100.6l-.5 .4 .4 5.4 .7 .7 4.9-.4 .2-5.8-5.7-.3 .1-6.1 5.9 .2 .8 5.3 5 .8 .6-6.6M620.7 82.6l-.2-.2-.2-5.4 .7-.7 5.2-.3 .2 .2-.2 6.5-5.5-.1 .1 6.3 6-.1 .3 .3M608.7 88.8l-.2 5.8 6.2-.7M614.5 88.8l.4 .4M614.7 125l5.7-.8 .3 .3-.5 5.9-5.5-.6 0-4.8-.9-.9 1-6.1 5.7 .8 .5-6.7-.7-.8-5.6 1.2 0 5.5-5.9 0-.5-5.2-5.8-.1-.4-.5-5.5 0M626.4 112.3l-5.4-.2M620.3 107.1l0 4.2M625.5 118.6l-4.9 .3-.2 5.3M614.1 106.3l-.6 .7 .5 4.9 .7 .6M614 111.9l-5.6 .8-.4-6 5.5 .3M534.2 84l-1.6 1.3 .8 6.8 7.3 1.3 1.2-5-2.2-3.9-5.5-.5-.7-7.2M526.1 85l6.5 .3M541.8 81.7l-2.1 2.8M531.5 94.4l1.9-2.3M541 94l-.3-.6M547.2 87.9l-5.3 .5M681.4 277.2l-1.4 2.4 4.7 1.7 1.3-1.6-.3-3.1-4.3 .6-1.5-2.5M677.6 280.2l-1.2-1.1M678.8 280.3l1.2-.7M684.2 272.9l-2.6-1-1.3 1M685.9 276.2l-.2 .4M680.5 283.5l1.8 .9M684.3 283.3l.4-2M686 279.7l3.9 1.9 1.6-1.7M689.9 281.6l0 3.1-.5 .6M694.6 279.5l.8 .7 0 3.7-1.2 1-4.3-.2M694.2 284.9l.2 1.6M666.3 284.9l.3-.4M672 286.8l-.2-3M663.3 279.2l3.7 2.1M667.8 277.2l.1 3.2M672.5 279.5l-.8 1.3M628.7 293.5l-.5 3.3M622.9 295.6l-1.2-1.7-3.4-.4-1.1 .7M623.4 290l-1.7 3.9M618.4 288.8l-.1 4.7M627.2 292.5l-4.1 3.2M590.4 308.2l0 .2M585.3 307l1.7 3.3M583.2 311.7l1 .2M657.8 227.2l1.4 3.7-.7 .9-4.1-1.6 .3-2.8 3.1-.2 1.1-1.5 3.3 .4M662.3 230.8l-3.1 .1M650.9 199.7l3.6 .5 .6 3.4-1.7 1.4-4.2-3 1.7-2.3-.8-3-1.1-.8-4.2 .2M649.2 202l-.5 .2 1.2 6.6 2.7-.9 .8-2.9M664 206.7l-1.7 2.3 1.5 3 1 .6 1.6-.5 1.1-2.5M671.9 213.5l-4 .2-1.5-1.6M658.5 212l-3.1 .4-1.6-3.8 4.8-1 .7 1.2-.8 3.2 .7 .7 4.6-.7M662.3 209l-3-.2M658.6 207.6l.3-3.1 .4-.3 2.5-.6 2 1.2M658.9 204.5l-3.8-.9M652.6 207.9l1.2 .7M659.9 216.4l-2.1 2 .8 2.8 3.6 .2 1.6-4-.7-.8-3.2-.2-.7-3.7M664.8 212.6l-1.7 4M658.6 221.2l-.5 .9 .8 3.6M663.1 222.3l-.9-.9M655.4 212.4l-.8 1.2 .8 3.9 2.4 .9M645.8 230.3l3.5 .5 .2-.2 1-3.1-1.8-1.6-3.2 .9 .3 3.5-1.2 .8M640.3 229.7l-.1-2.3 .6-1.2 4.2 .1 .5 .5M654.7 227.4l-1.4-1-2.8 1.1M654.4 230.2l-.3 .4-4.6 0M657.6 243.5l.4-3-4.1 .2 .4 3.9 3.3-1.1 1.7 2.2-.9 2.6M654 245l.3-.4M663.6 231.6l-.2 4.2-5.9-1-.7 .7 1.5 4.6 3.8-.1 1.4-1 0-3.1 3.7-.6M659.3 245.7l3-.8-.2-4.9M658 240.5l.3-.4M658.5 231.8l-1 3M668.3 231.4l-1.3-1.2M665.9 240.1l-2.4-1.1M672.3 240.3l-1.8 4.1-2-.3M662.3 244.9l.8 .4M670.5 244.4l1 1.2-.3 2.5M666.8 248.9l-.5-.5M663.8 248.6l.4-.5M612.6 223.1l-3.5-1-.3 .2M608.8 226.8l-.9 .8-3.8-.8M600.8 225.4l-.7-4.8 .2-.2 3.4 .4 1.3 1.9M618.9 252.6l-1.5-4 4.4 .3 .2 .2 .3 3.5M613.9 248.8l3.4-.2 1.5-3.6 3.2-.6 .3-4.5 4.7 1.3-1 4.4-3.6-.8-.4-.4M640.4 234.8l-4.5 1.7 .5 2.8 4.3 1.3 .3-.1 .5-4.8M635.9 236.5l-1-1.3M625.8 236.2l1.5-2.3 3.7 2.2-.8 4.1-1.3 0-3.1-4-2.8 1.1-.9-1.5-.1-4.7 1-.6 .4-3.7-5.7-.7M627.3 233.9l-.2-1.8 3.8-1.7M632.4 235.3l-1.4 .8M636.4 239.3l-1.5 1.2-3.6 .6-1.1-.9M640.8 226.2l-.5-3.9-3.5-.8-.4 .4-.3 4.7 4.1 .8M634.6 230.3l1.3-3.6-4.1-1.3 .1-2-1.6-1.6-1.9 .3-1.6 4 .6 .5 3.5 .5 .9-1.7M654.1 230.6l-.2 3.7-3.9-.7-.7-2.8M653.9 240.7l-2.2-1.1 3.4-4.2 1.7 .1M655.1 235.4l-1.2-1.1M636.4 259.4l.3-.3-.4-5.6-.7-.5-1.8 .2M636.3 253.5l4.8 .3-.7 4.1-.5 .6-3.2 .6M640.4 257.9l4.6 .8-1.2-5.1-.2-.3-2.2 .3-.3 .2M725.4 216.9l.4 .7 .3 2.8-3.8 2.2M725.9 237l1-1.1-1.6-3.6-3.3-.3M731.2 236.6l-1.6-1.3-2.7 .6M723.6 226.8l1.1 .1 2.5 3.6-1.9 1.8M644.7 185l0 5-.2 .2M626.5 196.4l.5-5.5 4.6-.4 1.7 5.8-1.3 1.1M633.3 196.3l4.7-.2 .1-.1M638.5 190.7l-5.7-1.2-1.2 1M626.2 212.6l1.5-1.6 3.5 2.3-.5 3.5-4.2-.5-.3-3.7-2.8-.8-.4-3.3M628 209l-.3 2M631.6 213l-.4 .3M595.5 212.1l-3.6 .4-1.6-4.1 1.2-.6 3.5 .8 .5 3.5M595 208.6l.8-1 3.5 .1 .6 1.3-.1 2.5-4.2 .7 .3 4.1-.8 .9-4.1-.6M591.5 213l.4-.5M587.3 209.2l1.1-.9-.9-5.3-3.5-.6-1.3 .8 .2 4.5 4.4 1.5-.5 2.8M590.3 208.4l-1.9-.1M582.3 208.4l.6-.7M591.5 207.8l1-4.5-2.6-1.5-2.4 1.2M578.7 202.5l4 .7M584.2 196.5l-.2 5.9M589.9 201.8l.6-4.6-.6-.6-5.1-.8M677 286.6l0 .9M591.1 271.8l3.1-.7 2.6 5.1 2.5-.9 .6 .6 5.6-.1-.4-3.7-3.6-.5-1.7 1.6-.5 2.1M595.3 266.2l.8 2.2-.6 1.6-1.3 1.1M610.1 280.1l-1.7-3.2-2.7-.7-2.1 3.9M596.1 268.4l4.5-.4 .9-1.2-3.3-4.5-1.1 .1M598.2 262.3l.9-.6M643.8 253.6l5.5 1.3 .2 2.5-4.4 1.4-.1-.1M648 275.9l.5-3.8-3.3-1.3-2 1.3M649.5 257.4l.7 .9-.6 4.1-4.7-1.2 .5 5.1-4 .1-.4-.4-.4-2.1 1-2 3.2-.8 .3-2.3M639.9 258.5l1.7 3.4M636.2 261.9l4.4 2M636.4 266.7l4.6-.7M640.7 270.2l.7-3.8M645.4 266.3l.5 .3-.7 4.2M756.9 326.2l-4.2-.1 0 4.9 4.9-2.5M752.7 331l-.1 .3 .7 2.2 3.5 .8 1.5-4.4M752.7 326.1l-1.2-.8 1.3-4.4 1.1-.6M753.3 333.5l-.3 .3-4.7 .2-.4-4 4.7 1.3M745.2 324.4l3.5 .1 1.5 1.1-2.6 4-2-.1-1.6-2.9M750.2 325.6l1.3-.3M747.6 329.6l.3 .4M745.6 329.5l-1.3 1.3-1.3-.3M745.7 335.1l1.7 .2 .9-1.3M744.3 330.8l-.4 1.9M767.3 348.8l-1 .3-.4 1.7M762 353.7l-.3-2.4 3.9-.1M758.6 351.9l3-.7-.2-2.9 .4-.7 0-3.6 3.9 .5 .9-.7 2.2 .5M765.7 344.5l.3 3.8 .3 .8M757.5 344.6l-.9-1 .7-4.5 4.4 1.4 0 3.4-4.2 .7-.5 3 4.4 .7M766 348.3l-4.2-.7M756.9 347.8l.1-.2M756.6 343.6l-4-.3-.1 2.6M762.2 339.8l4.7-.5 .4-.4-2.8-4.5-1.8-.1-.9 .8 .4 4.7-.5 .7M766.6 343.8l.3-4.5M757.3 339.1l-.3-.5 .7-3.3 4.1-.2M766.4 332.9l-1.9 1.5M769.4 338.4l-2.1 .5M761.8 330.7l.9 3.6M756.8 334.3l.9 1M748.6 338l.1-.1 2.9-.2 1.3 1.5-.7 3.7-2.3 .1M752.6 343.3l-.4-.4M757 338.6l-4.1 .6M753 333.8l-1.4 3.9M747.4 335.3l1.3 2.6M749.6 316.7l-.3 2.6-1.2 .7-2.7-.1-.9-3.7 3.3-1.4 1.8 1.9 3.5-1.4M752.8 320.9l-3.5-1.6M749.1 311l-.8 .7-.5 3.1M744.2 321.2l1.2-1.3M748.7 324.5l-.6-4.5M739.3 317.9l.2-.2 3.9-2.1 1.1 .6M776.3 236.1l-1.4-4.5-3.3 .9-.1 3.3 4.3 .6 .5-.3 3.1-.3M776.2 230.2l-1.3 1.4M775.1 241l.7-4.6M771.3 236l.2-.2M769.7 230.4l1.9 2.1M775.1 226.7l-4.1 1.1M769.2 249.5l2.6 3.1 3-1.3 .1-2.9-4.3-.7-1.4 1.8-1.8 .2M770.9 255.3l.9-2.7M770.3 244.5l.3 3.2M775.6 244.1l-.5 3.9-.2 .4M775.7 252l-.9-.7M819.8 175.2l.8-1.9-.4-.5-4.2-.9 1 4.3 2.8-1 1.7 2.1 3.4-.1 .1 .2 .1 .7M823.8 181.2l-2.6 0-.9-1 1.2-2.9M820.6 173.3l3.7-.8 .8 1-.2 3.7M821.6 185.1l-1.3-.1 .9-3.8M811.1 180.2l-.3 .7 .4 .1M814 176.9l1.8 .7 .6 2.2-.2 .5M817 176.2l-1.2 1.4M820.3 180.2l-3.9-.4M820.3 185l-.8 .5-2.1 .2M810.9 185.3l-.3-.2-.1-3.9 .3-.3M803.7 113.7l-.8 1.2-3.8-1.3-.2-2.6 2.8-1.4 2 4.1 2.4-1.2-.4-3.6-3.5 0-.5 .7M812.4 104.7l-.6 .4M810.7 111.2l0 1.1-3.7 .6-.9-.4M805.7 108.9l1.4-1.5M814.6 95.6l-1.5 .1M812.1 101.4l-2-1.8 .1-.5M806.9 101l.5 4.6 .2 .3M810.1 99.6l-1.2 .2M803.5 186.2l.6 3.6 2.6 .6 .9-4.4-4.1 .2-.6-.8-4.8 2.3 .1-6.7-.3-.2-4.5 1.4 .2 3.7 4.4 1.9 .2 1.4-.7 .9M789.5 182.3l-1.3-1.1-2.6 .2-.8 4.8 3.7-1.4 1-2.5 3.8-.1-1.4-4.9 3.1-1.7 2.4 1 .5 4.2M793 190.5l-.9-1.4M793.6 185.9l-.9 .9M784.8 188.7l3.2 .6M780 185.6l-4.3-.1-.7 5.3 3.7 .2M780.5 185.4l.2-3.8-1.2-1.1-2.5-.3M774.6 182.1l.7 3.1 .4 .3M774.6 194.7l.3-3.9-2.7-.4-.3-.3-4.2 1.2-1.6-2.5 .7-2.6 .1-.1 2.2-.2 1.3 .6 1.5 3.6M810.3 221.8l.3-4.3-.1-.2-3.2-.7-1.5 .6 0 4.4 .7 .4 3.8-.2 1.2 .9M806.5 226.5l0-4.5M803.7 216l2.1 1.2M806.9 211.7l.9 .6-.5 4.3M802.9 222.1l2.9-.5M807.8 212.3l4 .3-1.3 4.7M784.2 186.9l.6-.7M789.5 186.1l-1-1.3M780.7 181.6l3.3-1.4 1.6 1.2M739.5 317.7l0-5.6-.9 0M744.7 260.1l-2.1 1.6 2.3 4.7 2.5-.7 1-2.2-.8-1.2-2.9-2.2 .2-.9M749.7 257.8l-2.1 4.5M753 262.2l-4.6 1.3M753.9 264.9l-2.3 2.7-3.7-1.3-.5-.6M747.9 266.3l.5 5.1-4.7-1.6-.4-1.7 1.6-1.7M798.4 175.6l0-3.7 3.9 .2-.4 3.3-3.5 .2-1 1M816 171.9l-.6-.7 1.6-3.1 2.2-.2 1 4.9M819.2 167.9l.7-.5-.4-4.3-3.8-.7-.5 4.2 1.8 1.5M798.4 171.9l-.4-.6 1.3-3.1 3.3-.7 .9 1-.2 2.4-1 1.2M638 196.1l.2 5.1 3.1 1.4 3.4-1-.3-5M632.1 201.3l3.6 1.7 2.5-1.8M635.7 203l.1 4.8 3.7 .9 .8-.7 1-5.4M667 203.4l-.6-3.4 2.1-2.2 2.8 1.2-.7 4.8M676.1 199.3l-2.9-1.1-1.9 .8M648.8 172.3l.6 6.1-.4 .4M644.7 201.6l.8 .7 3.2-.1M644.7 190l5.4 .3-1.1 5.6M650.1 184.5l2.2 2.4-.2 2.2-2 1.2M659.3 204.2l-1.2-4.5-3.5 .4 .7-4.1 2.9-.9-.5-4-4.8-1.4 .6 5.5 1.8 .8M663.2 196.2l-1.1-1.1-3.5 .3 .4 3.2 3.5 1.5 .6-.5 .1-3.4 4.4-.7 .1-.6-1.3-3.3-3-.8-1.3 4.3M666.4 200l-3.3-.4M667.6 195.5l.9 2.3M661.8 203.6l.7-3.5M658.1 199.7l.9-1.1M677.3 240.5l2-.6M675.3 234.8l.5-.7 5.3 1.6 .1-4.3-1-1 2.1-3.9-5.2-1.5 .6-2.8M690.7 221l-1.5 1.5M682.1 221.3l3.1 .7M689.4 225.9l.6 .7 4-.8 .5-.5M694.2 231.2l-.8 3.9 1.5 1 3.2-1.8-.2-3-3.2-.5-.5 .4-4.3-.6-.4 4.6 .9 .6 3-.7M690 226.6l-.9 3 .8 1M694 225.8l.7 5M699.3 230.2l-1.4 1.1M698.4 239.1l-2.8-.3-.7-2.7M699.3 235.4l-1.2-1.1M677.1 240.7l-.3 3 4.3 2.9 .3-.5M671.5 245.6l3.8-.3 1.5-1.6M666.6 266l4.7 .5 .3-3.4-4.1-.6M671.3 271.4l.1-4.8 4.8-.2-.7-3.7 4.7-.5 .9 .8 .3 3.7 3.3 .3M685.4 255.1l-3.1-.9-2.3 3.4 4.8 1M685.3 240.1l5.1-.4-1.4 4.3 1.2 1.3 3.4 0 .9-1-.8-3.4-3.1-1.2-.2-3.9M685.2 242.9l.6 .6 3.2 .5M685.1 236.2l.8-.8 3.6-.2M695.6 238.8l-1.9 2.1M698.4 244.5l-3.9-.2M693.8 247.9l-.2-2.6M688.4 248.3l1.8-3M686 248.1l-.2-4.6M775.5 224.2l-1.7-1.9 .9-3.5 2.9-1.3M770.7 227.3l-.1-5.1 3.2 .1M767.6 222.6l2.9-.4-.3-4.2 1.4-1.4-.1-2.1 4.2-1.6 .3 .2M766.7 204.6l.9-1-2.8-4.2-2.9 .9-.3 2.7 1.1 1.9M767.6 209.1l3.1-.2 .2-5.5-.5-.4-2.8 .6M783.9 202.8l-3.9 2.2M780.1 212.3l-1.1-4.2M775.7 212.9l-.3-3.3M770.9 203.4l4 .4M770.2 218l-3 0-1.3-1.2 2.1-2.9 3.4 .6-.7-5.6 3.7-.1M783.7 208.9l-3.6-2.3M758.3 213.6l-1-1.2 .7-4.2 4-.4M752.3 212.4l.4-.4 4.6 .4M705.4 266.9l-1.3 .8-1 2.9 1 1.6 4.2-1.2-.4-3.9-2.5-.2-1.1-4.8 .1-.2M709 266.5l-1.1 .6M699.7 263.1l.9 2.8-2.1 2.4-2.7-1.1 .1-4.1 2.5-.9 1.3 .9 4.6-1M704.1 267.7l-3.5-1.8M698.9 258.3l-.5 3.9M694.8 262.8l1.1 .3M693.8 268.8l2-1.6M698.5 268.3l.8 2.9 3.8-.6M699.3 271.2l-.6 .7M695.4 280.2l2.6-.6 1.2-.9 .9-2.4-.7-1M745.2 221.9l-1.5-1.4 .7-3 4.4 .8M744.4 217.5l-.1-.4 0-2.4 3.7-1.7 .6 .2M745 225.4l-1.3 1M749 230.4l-3.5 .6M743.7 220.5l-3.4 1 .7 4.9M739.1 234.4l-1.3-3.3 1.7-1.8M721.7 256.5l.7 2.1-1.7 3.5-2.8 .2-.6-.3M667.9 42.3l0 .1 4.4-.9 .4 .3-1.2 4.6-.6 .2-3.3-.7 .2-3.5M672.1 38.8l.2 2.7M675.1 42.2l-2.4-.4M675.5 46.4l-4 0M666.9 46.5l.7-.6M671.8 50.4l-.9-3.8M619.8 159.8l-5.3 .6-.1-6-5.9 .4-.2-5.9M619.8 178.1l-5 .3-.4-.3-1-5.3 1.4-1.4M654.2 82.5l-4.6 .3 .8 4.9 3.6-.5M649.5 78.9l-.6 3.4 .7 .5M632.8 94.8l5.1 .2M632.5 88.8l6-.6 .2 6.1M632.4 101.1l5.5-.6M644.8 100.8l-.1-.1M639.1 148.9l5 .4 .6-.6M650.6 168.9l3.2-1.3-.3-3.3-3.5-1.3-2.4 3.2M632 64.8l-.2 5.3 .3 .3 5.9-.1M620.9 70.3l5.6 .2 .3-.4-.9-5.6-5-.2 0 6-.3 .4-6.2-.1-.4-.6M626.5 64l-.6 .5M620.6 64.1l.3 .2M631.8 70.1l-5 0M609 76.6l5.2-1.2 .2-4.8M614 82.7l.7-6.7-.5-.6M713.1 81.5l-4.1 .6-.2-3.5 4.6-.6M699.7 81.6l3.7-.4 .6 1-2.2 4.2M708 84.6l-.2-.9-3.8-1.5M709 82.1l-1.2 1.6M703.4 81.2l.4-3-2-.4M798 171.3l-3.6-.2 .3-3.2 3.3-.6 1.3 .9M795 175.6l-1.1-4 .5-.5M812.1 123l-.3 .6 0 3.1 3.3 0 3.2-1.5-2.1-3.7-4.1 1.5-1-4.8-.5-.4-2.4 .4-.9 3.8 4.5 1.6M815.1 126.7l2.1 5 2.4 .1 2.1-2.3 0-1.8-1.2-1.9-2.2-.6M811.8 126.7l-.2 .2 .4 3.8 3.9 1.5 1.3-.5M807 112.9l.5 4.9-4-.1-.6-2.8M810.6 117.8l1-4.3-.9-1.2M807.5 117.8l.7 .4M816.3 86.6l2.8-1.2-1.1-1.7M821.5 91.2l-1.6-5.6 2.2-1.6 6.2 1.1-.8 5.9M815 91.7l.6 .7M819.1 85.4l.8 .2M842.1 84.8l-5.7-1.8-1.4-5.9 .5-.6M834.7 91.7l-.3-6.7-5.9-.1-.2 .2M834.4 85l2-2M738.5 149.1l1.6-2.8-1.7-2-2.5 0-.7 5.6-4.3-1.7-.7 .5-.3 4.7 4.7-.3M735.5 177.3l1.1 3.8-2.6 1.1-2.9-1.4M743.8 181.8l-5 .5-.2 2 2.6 2.7 1.6-.1M740.1 177l-2.3 4.4-1.2-.3M738.8 182.3l-1-.9M748 213l-1.1-4.2 2.7-1.6 2.9 1.2 .2 3.6M744.3 214.7l-2.5-1.9 1.6-3.3 2.2-1.3 1.3 .6M744.3 193l-1.5 1.4 3 4.3 1.1-.5 1.2-3.9-3.8-1.3-.1-2.9-4.7 .8-.8-1.4 2.5-2.5M740.1 146.3l3.4 .1 .4 3.5-.3 .4M752.7 163.8l.6-.3 3.2 .4 1.3 3.1-.8 1.1M749.3 159.5l3.6-.2 .4 4.2M730.3 181.1l.6 5.3 3.1 .3 0-4.5M738.6 184.3l-3.5 3.4-1.1-1M738.7 189.5l-3.3-.8-.3-1M684.5 199.7l1.9-4.4 2.9-.1-.2 4.5M734.1 132l-1.9 .4-1 4.2 2.4 1.4 3.4-1.9-2.1-3.6M732.2 132.4l-1.8-1.2-.2-4 .6-1.2M724.4 172.9l-3-.1-1.9 3.5 2.4 1.7 3.5 0-1-5.1 .8-.8 5.6 2.1M722.2 131.8l-1.2-1.3 .5-2.7 3.3-.4 .4 .3 1.1 4.5-.5 .7-3.6-1.1-1.7 4.2-2-1-1-2.1M718.1 132l2.9-1.5M725.8 132.9l-.1 3.3-4.3 .9-.9-1.1M730.2 127.2l-5 .5M730.4 131.2l-4.1 1M725.6 122.6l-.8 4.8M720.5 126.9l1 .9M695.3 147.9l3.9 1.9-1.8 3.7-2.9 .4-.1-5.4 .9-.6 .3-3.1 2.8-.7 .7-4.2 4.2 1 .9-4.3 2.1-.3 2.2 3.6-1.4 1.6-3.7-.5-.7 3.5-2.1 1-.6 4 3.1 1.3 .9-.4 .6-4.5-1.9-1.4M696.9 118.7l1.3 .2 1.4-4.4 .3-.3-1.4-4.7 1.1-1.5M699.6 114.5l-1.1-.2M699.9 114.2l3.7 0 .2-.2M713.7 118.1l-1 1-4.3 .2 1.8-4.8 2-.9 1.5 4.5 2.7 .3M716.4 122.4l-2.9-.6-.8-2.7M712.3 113.5l-.1 .1M703.6 114.2l1.2 3.7 3.2 1.7 .4-.3M706.8 113.1l3.4 1.4M711.8 122.9l-3.4-1.3-.6 4.2 .3 .4 4.6 1.4-.9-4.7 1.7-1.1M708 119.6l.1 1.2 .3 .8M707.8 125.8l-3.7 .3-.8-2.7 4.8-2.6M707.6 131.8l-.7-.5 1.2-5.1M667 101.2l.7 1.1 3.8-1.7M661.7 104.4l1.4 1.2 .1 2.6-5 1.3M667.7 102.3l-.1 1.4-4.5 1.9M673.4 104.4l-2.1 1.8-2.8-1.1-.9-1.4M648.8 117.5l5.2 .5-.6 4.4-2.7-.1M653.1 114.5l1.1 3.3-.2 .2M654.2 117.8l3.4-.6 .3-4.7M740.2 112.3l1.4 .6M864 120.9l-1.3 4.3 2.9 3 4.1-.5M858 126.4l.2 .2 4.5-1.4M589.4 189.6l1.3 1-.8 6M584.4 154.4l.5-5.6 4.8-.7 1 6.3-6.3 0-.2 .2M584.3 148.3l.6 .5M577.9 166.5l1-5.8M578.5 167.2l4.9-.2 .6-.7-.2-5M584 166.3l5.7 .2 .6-.7-.5-5-4.7-.6M590.3 165.8l5.4 .7 .5 .6-.8 5.5-5.3 0-.6-.4 .2-5.7M590.5 197.2l5.1-.5 .4-6.1 6.1 .5 .4 5.2-.5 .6-5.8 .3-.6-.5M590.7 190.6l5.3-.1 0-5.1 .6-.6-.5-6-.1-.2-5.3 .9-.6 4.7 5.9 1.2M608.3 190.3l-5.6 .1-.6 .7M602.5 196.3l5.7 .4M601.7 167l.4-.5 6.3 .2-.2 5.6-.1 .1-5.6 .1-.8-5.5-5.5 .1M589.5 172.2l-4.7 .7 0 5.5-.9 1-5.6-1.1 0-4.9 6.4-.6-1.3-5.8M590.1 172.6l.2 6.5-5.5-.7M577.8 172.8l.5 .6M577.8 178.9l.5-.6M584.1 183.9l-.2-4.5M608.1 142.2l-.3-.2-.3-5.7 .8-.6M568.7 320.7l-3.5 .5-1-1.6 1-2.8 2.7-1.1 .8 5 1.6 1.1M565.1 324.4l.1-3.2M572.6 317.6l.1 2.8-.2 .6M568.4 315.4l-.5 .3M561 320.1l3.2-.5M558.6 316.6l.9-1.1 4.6 .5 1.1 .8M577 315.7l1.1 .5-.5 1.8M572.7 320.4l3 0M581.4 314.1l0 .3M578.1 316.2l1.4 0M582.4 236.3l3.3-1.6 1.7 1.6-.5 3.7M582.3 229.8l-.2-3.1 3.9-1-.2 5.3-3.1-.7-.4-.5-4.1 .2-.8-2.3 .6-.8M582.7 230.3l-2.1 4.2M577.5 231.5l.7-1.5M577.4 227.7l-3.7-.6-1.3 3.2 1 1M573.7 227.1l-.5-1.3M593.1 222l-2.2 4.7 4.5 .9 1.7-1.3-1.4-4.3-.7-.4-1.9 .4-2.3-1.2M595.1 217.2l-.1 4.4M595.9 216.3l4 .7 .4 3.4M600.1 220.6l-4.4 1.4M598.4 226.6l-1.3-.3M572.8 254l-3.9-1.5-1.8 1.8 1.2 2.9M567.1 254.3l-2.8-1.2-.9 .9 1.3 3.9M559.6 254.6l.7 .8 3.1-1.4M559.4 248.9l3.8 1.1 .8 .8 .3 2.3M567.8 226.9l.8 3.7-4.7 .8-1.2-1.4M572.4 230.3l-3.2 .7-.6-.4M563.9 231.4l-.7 4.3-3.1 0M595.9 243.6l.3-3.5 2.5 .2M609.2 234.8l.2-2.9-1-.7-3 .4-1.8 3.7 .9 1.3 4.7-1.8 .8 .9 3.5 .1-.2-4.8-.3-.3-3.6 1.2M610 235.7l-.1 4.8-1 .8M604.5 239.2l0-2.6M607.9 227.6l.5 3.6M603.4 229.4l2 2.2M613.3 227.3l-.3 3.4M587.1 240.3l4 0 .3-4.4-4 .4M591.9 243.8l-.1-2.8-.7-.7M596.2 240.1l-.4-.5-4 1.4M564.6 294.1l.2 4.5-.7 .3-4.3-2-.3-1.7 .8-1.2 3.6-.7 .7 .8 3.8 .3-.7 4.7 .9 .7M573.9 298.1l2.8 .4 1.1 3M573.3 304.6l-.4-.5M573.3 307.4l-5.5 .1-.2-3.7 1.2-1.8M568.4 313l-1.1-5-1.6 .1-2.1 3.6 4.8 1.3 .2 .4M567.8 307.5l-.5 .5M564.1 316l-.9-4.1 .4-.2M567.6 303.8l-3.5-.4 .3 4.1 1.3 .6M518.1 257.2l-.3-.3 .9-6.4 5.3 .2 .2 5.4-.3 .3-5.8 .8 0 5.4M513.5 256.1l4.3 .8M524.7 262.1l-.8-5.7M518 249.7l.7 .8M530.3 256.4l-6.1-.3M524.5 250.2l-.5 .5M540.8 280.3l1.3 1.2 4.2-1.2 .3-.5-.1-2.8-4.6-.2-1.1 3.5-5.3 1.2M542.6 285l-.5-3.5M540.4 274.9l1.5 1.9M546.2 285.8l.6-.4-.5-5.1M547.1 276.3l-.6 .7M549.7 275.9l2.7 4-1.5 1.6-4.3-1.7M577.8 280.6l.2 4.2-5-.3-1.1-3.2 1-2 4.9 1.3 1.3-1.6 2.9 .5 .1-3.9-.9-1.1-3 1 .9 3.5M568 286l.8-4.6 3.1-.1M587.4 281.5l-2.3-2.9-2.6 1.1 .3 3.6 3.4 .4 .3-.1M586.2 276.3l-.3 .4-.8 1.9M581.8 293.3l.6 .5 3.1-.1 1.2-4.3-1.1-.8-2-.2-2.6 2.3 .8 2.6-4 1.2-.1-5.1-4.5 1.4-.1 1.8 4.7 1.9-.4 3.3-.7 .7M572.4 294.5l.7-1.9M581 290.7l-3.3-1.3 .4-4.5 3.1-.2 1.6-1.4M587.3 298.2l-.9-.5-.7-3.7 5 .1M582.7 301.7l.3-2.7 3.4-1.3M537.1 263l4.3-.4 1.7 3.4 1.5 .5 3-3.1-1.1-1.7-5 .8 .7-4.1M545.3 271.6l.6-3.6-1.3-1.5M540.4 269.3l2.7-3.3M547.3 257.9l-.8 3.8M560.3 255.4l-.4 2.9-5.2-.9-.5-.5M563.7 259.1l-3.7-.4-.1-.4M552.4 279.9l2.3 0 .3-5.1-.2-.1-4.6 .7M568.8 281.4l-.7-.3M564.6 284.3l-.1-3M572.5 276.1l.4 3.2M565 275.9l-1.2-4.6-3.8 .9-.1 1.9 4.7 2.1M551.8 288.6l-1.9-3.7 .5-.5 4.8 .3-1.3 3.9-2.1 0-1.9 2.3-3.7-2.8M546.8 285.4l3.1-.5M550.9 281.5l-.5 2.9M559.9 285.1l.6-4.6-1.4-.7-3.4 .8-.1 3.9 3 1.4 1.3-.8 3 .9M563.3 280.1l-2.8 .4M563.3 288.9l-4.4 1.1-.4-.3 .1-3.8M558.5 289.7l-2.8 .6-1.8-1.7M555.2 284.7l.4-.2M554.7 279.9l1 .7M555 274.8l4 .1 .1 4.9M559.9 274.1l-.9 .8M518.4 232.4l6.1-.1 .4-.3-.6-5.7-.2-.2-5 .4-.9 .9 .2 5-.1 .2M524 238.2l.5-5.9M512.4 226.7l5.8 .7M517.7 220.4l1.4 6.1M524.8 221.2l-.7 4.9M530.4 226.5l-6.1-.2M529.9 232.6l-5-.6M620 136.5l.2-6.1 5.9 .1M614 130.6l.7-.8M626.7 125.3l-6-.8M668.1 216.7l-2.1 1.5 .9 3.1 3.8-.3 .2-3.1-2.8-1.2-.2-3M663.8 217.4l2.2 .8M672.3 216.7l-1.4 1.2M666.5 221.9l.4-.6M670.7 221l1 1 4.9-1.9M622.2 221.9l.9 .8 4.3-1.1-1.7-4.6-1.4 .4-2.3 1.6 .2 2.9-4.1 1.8M623.4 226.8l.5-.7-.8-3.4M623.4 211.8l-1.8 1.1-3.6 .2-.2 .2 .5 3.7 3.7 2M621.6 212.9l2.7 4.5M626.5 216.3l-.8 .7M649.9 208.8l-.2 .2-3.1-.5-1.2-1.2 .1-5M645.4 207.3l-5.1 .7M614.6 196.9l-.3 5.9 .4 .4 2.2 .7 3.8-1.4M608.5 197l-.3 5.7 6.1 .1M616.9 203.9l1.1 4.9-5-.4-.3-.5 2-4.7M622.2 207.8l-3.8 1.5-.4 3.8M618.4 209.3l-.4-.5M592.5 203.3l2.9-.1 .4 4.4M596.2 197.2l.1 5.3-.9 .7M602 196.9l.6 6.2-1.8 .5-4.5-1.1M608.2 202.7l-.5 .4-4.6 .2-.5-.2M600.8 203.6l-1.5 4.1M612.7 207.9l-3.9-.4-.1-.2-1-4.2M613.7 218.5l-2.4-1.3 2.8-4.2 3.7 .3M613 208.4l0 3.4-3.7 0-.5-4.3M614.1 213l-1.1-1.2M630.5 249l1.5-4.2-.8-1.3-4.5 2.8 .2 1.1 3.6 1.6 .5 .6 .2 1.8M625.7 252.6l.6-4.1-4.3 .6M626.3 248.5l.6-1.1M623.9 226.1l2.9 0M627.4 221.6l1 .5M623 230.5l4 1.6 .4-5.5M631.5 229.7l-.6-2.6M636.4 221.9l-4.5 1.5M630.3 221.8l1-4.3-.6-.7M634.8 217.5l1.1-3.1 4.8-1.1-.3 3.1-4.6 2.2-1-1.1-3.5 0M634.7 212.5l1.2 1.9M636.8 221.5l-1-2.9M639.5 208.7l1.4 4.3-.2 .3M649.6 243l.5-3.1-4.4-.7-.3-3.9 3.7-.3 1.1 4.9 1.5-.3M649.3 243.4l-3.4 .2-2.1-3.1 1.9-1.3M650 233.6l-.9 1.4M641 240.5l2.8 0M644.3 234.5l1.1 .8M635.6 253l.8-3.2 3.6-.5 1.4 4.3M631 249.6l4.4-2.1 1 2.3M632 244.8l3.6 1.4-.2 1.3M631.2 243.5l.1-2.4M634.9 240.5l1.4 5.1-.7 .6M726.1 220.4l2.1 1.7-1.7 3.8-1.8 1M725.8 217.6l5.1-.4-.9 5-1.8-.1M733.8 227.9l1 2.9-.3 .3-4.4 .9-1.3-1.5 1.1-2.8 1.4-.9 2.5 1.1 2.2-2.8 4 2.2M737.8 231.1l-3-.3M729.6 235.3l.5-3.3M727.2 230.5l1.6 0M733.8 235.7l.7-4.6M726.5 225.9l3.4 1.8M731.3 226.8l-.4-4.2-.9-.4M631.7 178.8l.1 5.5 1 1.1 5.2-1.4-.6-5.2-5.7 0-.1-.1M637.8 178.4l-.4 .4M638.8 184.7l-.8-.7M632.8 189.5l0-4.1M620.5 178.7l.2 5.6 5.4-.1 .7 .8-.2 5.5-5.5-.5-.5-5.7-5.8 .6-.4 5.6M620.4 190.6l.7-.6M627 190.9l-.4-.4M631.8 184.3l-5 .7M626.8 178.6l-.7 5.6M614.8 184.9l-.3-.4 .3-6.1M601.3 280l-1.4-4.1M605.7 276.2l-.2-.4M595.5 270l4.3 3.2M600.6 268l.9 3.6M614.1 276.3l-1.1-2.4-2.7 .8-1.9 2.2M617.4 271.2l-3.5 .4-.9 2.3M613 266.9l.5 4.2 .4 .5M601.5 266.8l2.7-.9 .1-2.5-1.2-1.9M608.6 259.3l0 2-4.3 2.1M612.7 263.5l-3.6-1.3-.5-.9M655.7 256.5l-1.8 2.1-3.7-.3M649.9 254l-.6 .9M658.2 262.1l-3 0-1.3-3.5M743.4 315.6l-.7-3.6-2.4-.2-.8 .3M739.2 307.6l.3 0 .8 4.2M748.3 311.7l-4.9-.4-.7 .7M779.4 244.1l.1 .1 .4 2.6M775.1 248l3.8 .5M825.1 173.5l1.2 0M825 177.4l.4-.1M798.2 189.2l4 2 1.9-1.4M796.9 194.3l5-.5 .3-2.6M807.6 186l1-.8 2-.1M807.2 190.8l-.5-.4M810.5 181.2l-3.2-1.3-1.5 2.3 2.8 3M802.9 185.4l0-2.2 2.9-1M798.2 181l2.8 .3 1.9 1.9M801.9 175.4l1.8 1.5-2.7 4.4M812.4 90.5l-.4 .3M775.3 203.6l-.5-5.2-3.2 1.1-1.1 1.1-3.9-3.3 .3-1.8 .7-.5 2.5 0 .2 .1 1.3 4.4M821 220.7l-.2-2.2 .3-.3M815.6 220.8l.9-2.8 4.3 .5M810.6 217.5l5.7 .3 .2 .2M816.3 199.9l-1.2 2.8-2.9 .8-1.4-1.5 .3-3 .6-.7 4.6 1.6 .2-.1M817.1 208.5l-2 5.1-3.1-1.1 .4-4.6 .1-.2 3.8-.2 .8 1 2.5 1.3 0 3 1.3 .8 .4-.2M815.1 202.7l2.3 2.5-1.1 2.3M812.2 203.5l.3 4.2M815.1 213.6l.9 .8 .3 3.4M807.1 207.1l5.3 .8M807.1 204.3l.3-.9 3.4-1.4M819.6 209.8l.1-.1M821.3 215.2l-.4-1.6M816 214.4l3.6-1.6M817.9 205l-.5 .2M751.6 267.6l.7 4.1-3.7-.1-.2-.2M755.5 275.2l-2.3-.7-.5-2.6 4-2.3M752.3 271.7l.4 .2M754.3 280.3l-1.1 .2 .1 3.2 .7 .1M742.6 261.7l-3.3 .1-.6-4.4M743.7 269.8l-.8 2.2 1.3 3.8-4.4-.6-.1-2.9 3.2-.3M743.6 278.5l.4 .7-1.2 4.6-2.9-.1-1.6-3.4 .4-.7 4.9-1.1 .7-2.6 2.1-.6 2.2-3.7M803.3 170.9l3.2 2.7 0 3.1-2.8 .2M815.4 171.2l-1.7 .6M807.3 179.9l-.7-3.2 3.9-.7M803.5 168.5l3.2-.1 .8 4-1 1.2M807.5 172.4l2.8-.6M649.6 171.8l3.4 2 0 3.1-3.6 1.5M654.3 168l4.3-.1 .5 3.3-1.9 2.1-2.4-.6-.5-4.7-.5-.4M654.8 172.7l-1.8 1.1M663.4 190.8l-.2-.2-4.9 0-.6 .5M658.6 195.4l-.4-.3M652.3 186.9l1.8-1.2 4.3-.2 .7 .4-.8 4.7M652.1 189.1l.8 .6M650.1 196.7l3.4-1.5M684.1 249.2l-2.5-.2-.3 3.6 1 1.6M681.1 246.6l.3 2.2 .2 .2M675.3 245.3l1.3 4.5 4.8-1M671.7 249.4l4.9 .4-.6 4-3.3 .1-2-1.2M681.6 271.9l-.3-5-4 .7-1.1-1.2M675.6 271l1.7-3.4M685 260.6l-3.9 2.4M680 257.6l-.8 .3 1 4.3M679.2 257.9l-1.8-.7-.7-2.7 4.6-1.9M676 253.8l.7 .7M774.7 218.8l-3.1-2.2M766.4 211.3l1.6 2.6M766.7 222l.5-4M764 216.7l1.9 .1M754.3 206.9l3.4 .9 .6-3.8-1.7-1.1-2.4-.1-.2 .3 .3 3.8-1.8 1.5M758 208.2l-.3-.4M749.6 207.2l-.2-3.6 4.6-.5M761.6 203l-3.3 1M761.9 200.3l-1.5-1.3M759.3 198.9l-2.7 4M753.9 200.4l.3 2.4M752.4 198.5l-2.7 1-.4 4.1-5-.6-.3 .3 1.6 4.9M711.2 266.8l1 4.1-3.7 .4-.2-.3M704.1 272.2l.3 2.3-2.2 1.6-2.1 .2M744.3 217.1l-5.4 .4-.4-.6 2.6-4.1 .7 0M740.3 221.5l-.8-.4-.6-3.6M736 225.1l-.5-2.8 4-1.2M730.9 222.6l3.5-.9 1.1 .6M608 148.7l-4.5 .2-1.2 5.1 5.8 1.3 .4-.5M608.2 172.3l5.2 .5M614.5 160.4l-.2 .2M608.1 155.3l-.1 4.7M649.9 88.4l-5.2 0 .3 5.7 4.1 0 1.6-2.2-.8-3.5 .5-.7M654.8 92.4l-4.1-.5M649.9 95.5l-.8-1.4M643.9 95.2l1.1-1.1M644.7 82.5l.4 .4-.6 5.3-6 0-.3-5.4 .4-.4 6.1 .1-.6-5.9M648.9 82.3l-3.8 .6M639.2 77.4l-.6 5M644.7 88.4l-.2-.2M649.6 145l5.2 .6-1.3 3.2 1.5 2.4 3.2-1.5-.8-3.7-2.5-.5-.4-4-4.6-.5-1.3 1.3M638.6 154.5l5.7-.2-.3 6-.4 .3M644.1 149.3l.3 4.8 4.5 .4 .8 4.7 4.1-.5 .6-.8-.9-3.8-3.5-.6-1.1 1M650 163l-.9-3.1-5.1 .4M637.8 75.8l-5.6 1.1-.4-.4 .3-6.1M638.2 82.8l-5.8-1-.2-4.9M632.1 88.5l-.2-6.2 .5-.5M626.8 88.8l-.4-6 5.5-.5M705.8 73.1l2.4 .3 .8 .9-1.2 2.9-3.9 .7-.4-2.1M708.3 71.1l-.1 2.3M703.8 78.2l.1-.3M708.8 78.6l-1-1.4M711.2 74.1l-2.2 .2M821.7 129.5l3.3 2.2 .8 3.3-1.3 1.1-4.5-.9-.4-3.4M820 135.2l-.4 1 2.7 4.8 1.7-.2 .5-4.7M825.8 135l2.3 .6 .9 1.2-.7 3.3-3.6 1-.7-.3M813.4 161.9l-1-.1-.5-4.3 3.8 .5 .7 .8-.9 3.3-1.3-.1M791.9 177.3l-2.3-1.1-.1-4.2 .3-.3 4.1-.1M784 180.2l.4-3.3 4.4-.1-.6 4.4M789.6 176.2l-.8 .6M794.7 167.9l-.5-.7-4.3 1.5-.1 3M799.1 113.6l-1 1.1-4.3 .3 0 3.3-4.9 1.6-.4 2.8 4.7 .4 1.2-.9-.5-3.7 4.6 .5-1.5 4.2 .7 1 4.5-.6 .5-.5-.6-3.8-3.1-.6-.5 .3M822.1 84l1-5.3M828.5 84.9l0-5.9-4.8-.9M835 77.1l-4.4 .3-2.1 1.6M830.6 77.4l-1.2-2M733.5 157.6l-3.6 0-.9-3.5 .9-.7M730.2 148.7l-4.3 0-.7 1.1 2.3 4 1.5 .3M726.6 181.3l-.5 .8-3.9 .3-1.4-1.7 1.1-2.7M719.7 189.9l1.9-3.2-1.3-2-2.8-.5-.6 .9M730.1 204.6l1.4-1.3 2.3 .4 .7 .7 .8 2.6-4.8 2.8-1.6-1.8M743.4 209.5l-3.4-2.7-1.3 .9 1.2 4.4 1.2 .7M740 206.8l1.2-2.8 2.8-.7M734.5 204.4l5-1.6 1.7 1.2M735.3 207l.7 .6 2.7 .1M738.4 144.3l2.1-3.5-.9-2.1-5 2.8 .5 2.2 .8 .6M737 136.1l2.7 .9-.1 1.7M734.6 141.5l-.4-.4-.6-3.1M739.4 131.4l.8 5.2-.5 .4M743.5 146.4l.8-.9-.5-3.2-3.3-1.5M757.8 167l3.8 1.1 .4 .3 .1 1.7M748.2 151.4l.9-1.5 5.3-.7 .4 .4-3.7 5.1-2.3-.2-.6-3.1-4.3-1.5M749.1 149.9l-.4-4.3-4.4-.1M748.2 155.1l.6-.6M756.5 163.9l.2-.2 5-2.6 .3 .7-.4 6.3M757.2 154.8l-4 1.2 0 2.8 3.5 .6 1.4-1.7-.9-2.9 .2-.6 4 .4 1.2 4.6-.5 .4-.4 1.5M756.7 163.7l0-4.3M762.1 159.6l-4-1.9M752.9 159.3l.3-.5M751.1 154.7l2.1 1.3M770.6 176.1l-.2-2.6 5-1.7 .7 4.1-.3 .4M765.8 172.8l1.4-.5 2.8 .6 .4 .6M729.5 187.1l-.7 3-1.8 .5-1.8-.7-.9-3.1 1.8-2.2 3.4 2.5 1.4-.7M735.4 188.7l-1 1.8-4.4 .5-1.2-.9M726.1 182.1l0 2.5M721.6 186.7l2.7 .1M722.2 182.4l-1.9 2.3M722.5 191.5l2.7-1.6M726.1 195.6l.9-5M726.4 196.1l3.9-1.2-.3-3.9M713.6 190.8l-5.9-1 0-3.3 3.8-.7 .4 .3M708.1 193.8l-.8-3.1 .4-.9M700.3 203.6l-1.7-4.5-4 1.2-4.1 .4M689.3 195.2l.4-.4 4 1.4M667.7 194.9l3.2-1.4 1.6-3.7-4.1-.3-2 2.1M673.2 198.2l0-2.1-2.3-2.6M712.6 145.9l-.5 4.1-4.2 .4-.5-4.9 .7-.6 4.1 .3 .4 .7 5 .4 .7-.6 2.6 .4 1.5-.9-1.6-4.4-.5-.3 1.1-3.4M731.2 136.6l-1.6 .7-3.6-.8-.3-.3M726 136.5l-.5 5.2-4.7-.9M720.3 140.5l-1.5 .6M718.3 145.7l-.1-4M712.2 145.2l.9-3.3M718.5 135l-2.5 2.5M708.1 144.9l-1-3.4M708.5 139.9l3.5-.5M707.8 134.7l-1.5 1.6M717.9 171.6l3.2 .9-.3-5.1-3.9-.1-.4 .5 1.4 3.8-1.1 1.2 1.5 3.5-5.5-.6 .4-2.4 3.6-.5M719.5 176.3l-.9 .3-1.5 4.1 3.7 0M711.5 185.8l.9-4.6 .8-.8 3.3 .8 1 3M716.5 181.2l.6-.5M702.3 122.6l2.4-4.6-6.1 1.7 .5 2.4 3.2 .5 1 .8M698.2 118.9l.4 .8M681 99.1l.6 .6M704.1 126.1l-1.2 1.8-4.2-1.4-.3-.4 .5-3.8 .2-.2M706.9 131.3l-3.6-.6-.4-2.8M676.2 104.4l-.3 5.5-3.7-.3-.9-3.4M663.2 108.2l1 1.2 2.7 .1 1.6-4.4M658.1 112.2l4.8 1.1 1.3-3.9M649.3 127.1l4.4-.1 .2-4.1-.5-.5M657.6 117.2l2 1.6-1.3 3.8-4.4 .3M693.6 124.4l-.2 2.5-.2 .2-3.1 0 0-.2M698.9 122.3l-4.4 .5M698.4 126.1l-5 .8M688.8 128.3l-1.6-.1-3.5 2.8 2.3 2.5 3-2.6-.2-2.6 1.3-1.2M684.5 125.9l2.7 2.3M684.3 125.8l-2.5 1.6-.5 1.1 .7 2.2 1.7 .3M815.5 162.1l.2 .3M819.5 163.1l.8-.8-1-3.8-2.9 .3M830.1 141.4l-.2 3.5 4 1 .5-.6-1-4.8-3.3 .9-1.8-1.3M833.4 140.5l.4-.4-.7-3-.4-.4-3.7 .1M865.6 128.2l-.3 2.3 .8 1.5M856.2 139.1l.9-2.3 2.9 .6M865.3 130.5l-3 2.2-1 .7 .7 2.3 .7 .1M861.4 136.8l.6-1.1M815.7 158l.5-3.5 3.3 .3 .7 2.7-.9 1M816.2 154.5l-.6-.8 1.9-3.2 2.9-.2-.3 3.5-.6 1M837.9 149.9l-3.9-.9-1 1 .6 3.1 1.7 1.7 2.1-.2M819.5 185.5l.8 1.6M572 142.2l6.2 .9-.4 4.7-5.3 .4-.3-.2-.4-5.6 .2-.2 .8-5.5M579.1 142.2l-.9 .9M566.3 148l.6 .6 .1 4.9-1.4 1.3-4.5-.8-.7-4.9 5.9-1.1-.4-5.6 5.9 0M578.6 148.8l-.8-1M572.7 153.9l-.2-5.7M603.5 148.9l-1.5-1.4 .3-5 5.5-.5M589.8 160.8l.8-.9 .4-5.3-.3-.2M595.4 172.6l.4 .5 6.3-.2 .4-.4M602.7 190.4l-.3-6-5.8 .4M590.3 179.1l.4 .4M595.8 173.1l.2 5.5M602.1 172.9l.1 5.9-6.1 0M602.7 184l-.3-5 5.6-.8 1.1 1-.3 4.8-.4 .4-5.7-.4-.3 .4M602.2 178.8l.2 .2M608.7 190l-.3-5.6M608.1 172.4l-.1 5.8M614.5 184.5l-5.7-.5M614.4 178.1l-5.3 1.1M559.6 148.4l.8 .7M572.2 148l-5.3 .6M571.9 154.5l-4.9-1M560.4 154.6l.7-.6M566.1 159.6l-.5-4.8M609.4 130.6l-.5-.5-6.5 .3 .1 4.9 5 1M595.6 129.8l.2 .2 6.1-.3 .6-5-6.5-.4M551 333l.3-2 .1-.2M555.6 338.3l-.7-4.1M558.8 335.8l-2.8-2.5M550.1 330.7l1.2 .3M554 325.3l1.7 5.2M559 330.1l-2.6 .9M586.6 222.6l.4 2 3.7 2.1-.9 3.9-.2 .2 1.9 5 2.9-.4 .8-4.1-5.4-.7M585.7 234.7l.5-3.3-.4-.4M586 225.7l1-1.1M577.3 246.8l-4.1 2.2-1.1-4.3-2-.7-2.3 2.4 .5 2.2 .7 .5 4.2 0 1 3.9M573.8 243.6l-1.7 1.1M568.9 252.5l.1-3.4M563.2 250l1.6-5.3 3 1.7M564 250.8l4.3-2.2M567.3 236.1l1.8-2.5 4.3 3-1 2.4-1.5 .4-3.6-3.3-3 .7-1.1-1.1M569.2 231l-.1 2.6M574 236.1l-.6 .5M574.4 241l-2-2M570.9 239.4l-1.4 1.8 .6 2.8M565.2 241.3l-.7 3-4 .5-.5-3.9 4.3-1.4 .9 1.8 4.3-.1M564.8 244.7l-.3-.4M564.3 236.8l0 2.7M558.5 239.8l1.5 1.1M560.1 245.2l.4-.4M617.5 226.4l1.3 4.6 3.2 .1M613.3 231l4.4 1 1.1-1M599.8 239.1l-.9-3.5-3.3 .7 .2 3.3M603.6 235.3l-3.1-1.2-1.6 1.5M600.3 230.9l-.4 1 .6 2.2M549.9 290.9l.1 2.5 .2 .1 3.9 .9 1.6-4.1M544.9 292.5l3 1.5 2.1-.6M563.2 311.9l-2.6-.6-.2-3.7 4-.1M559.5 315.5l.1-3.1 1-1.1M564.8 290.1l-.9 3.2M558.9 290l1.4 4M554.1 294.4l.1 .2 5.3 .6M567.7 299.1l-2.9-.5M564.1 303.4l-1.6-1.1 1.6-3.4M582.5 279.7l-.5-.2M577.5 275l.7 .5M585.9 276.7l-3.8-1.1M582.4 272.5l-1.2 2M583 299l-1.4-1.7-4.2 .5M581.2 284.7l2.4 3.7M581.6 297.3l.8-3.5M585.7 294l-.2-.3M589.1 289.2l-2.4 .2M586.2 283.7l-.6 4.9M565.1 261.5l-1.4 1.6-3.5 .3-.8-2 .6-2.7M554.7 257.4l.2 4.2 4.5-.2M563.8 271.3l.9-1.1M563.7 263.1l2.2 4M569.4 261.8l-1.4 4.9M573.6 267l-4.4 .7M572.6 271.3l-2.9-1.2M609.3 100l-1.1 .9M596.3 106.7l6.1-.3M597.2 100.8l4.8 .2M602.1 112.2l1-5.1M608.9 124.3l-.4 .4-5.9-.2-.3-5.5 .3-.3 5.9-.4 .4 6 4.9-.2M608.9 130.1l-.4-5.4M608.8 118l-.3 .3M602.5 124.7l.1-.2M601.9 129.7l.5 .7M602.5 112.7l.1 6M596.2 118.5l6.1 .5M646.6 208.5l-2.2 3.9-.9 .8-2.6-.2M649.7 209l.3 4.3-5.6-.9M654.6 213.6l-4.5 0-.1-.3M653.3 226.4l.1-3-4.6-1.2-.2-.2 .9-4.2 3.8 .7 .1 4.8 4.7-1.2M645 226.3l.5-3.9 3.1-.4M648.7 225.9l.1-3.7M655.4 217.5l-2.1 1M649.5 217.8l-.5-.8 1.1-3.4M641.6 221.3l0-2.6 4.2-2.2 .6 .3-2.3 4.8-2.5-.3-1.3 1M640.4 216.4l1.2 2.3M645.5 222.4l-1.4-.8M649 217l-2.6-.2M643.5 213.2l2.3 3.3M603.1 203.3l.6 4.7-3.8 1M608.7 207.3l-4 2.2-1-1.5M609.1 222.1l.4-4.3-4.2-.5-1.6 3.5M611.3 217.2l-1.5 .3-.3 .3M609.3 211.8l-.9 .9 1.4 4.8M643.6 253.3l2-4.4-5-.8-.8-3.1 .5-.7 4.3 1.3 1.1 3.3 3.4-.1M640 249.3l.6-1.2M636.3 245.6l3.5-.6M640.7 240.6l-.4 3.7M645.9 243.6l-1.3 2M736 207.6l-.6 4.7-4.5 0-.2 .3 .9 3.9 2.8 1.1 1.6-1.2-.5-4 4.4-.3M730.9 217.2l.7-.7M734.4 221.7l0-4.1M726.4 214.1l4.3-1.5M738.5 216.9l-2.5-.5M730.5 209.8l.4 2.5M605.1 272.1l3.4-.1 1.4-1.7-1.5-3.1-.4-.2-1.9 .2-1 4.9M610.3 274.7l-1.8-2.7M604.2 265.9l1.9 1.3M613.5 271.1l-3.6-.8M612.4 266.3l-4 .9M609.1 262.2l-1.1 4.8M655.2 262.1l-1.1 1.2-4 .3-.5-1.2M659 266.2l-4 .4-.9-3.3M645.9 266.6l3-.3 1.2-2.7M784.3 241.7l-.3-1.1 1.7-.1M788.6 235l.7 4.5M794.1 236.7l0 .5M801.9 193.8l.7 1.1M811.9 195.8l-.2 2.5M811.1 199l-4.5-.5M807.4 203.4l-2.4-3.7M798.8 198.5l3.4-1.1M807.4 105.6l-4.8-1.4-1.4 1.8 1 2.9M775.3 185.2l-4.9 1.3M771.3 181.4l-2.2 4.5M766.7 180.2l.2 5.9M762.8 184.7l4 1.5M763.2 190.3l2.9-1.5M764.8 199.4l1.8-2.1M770.4 203l.1-2.4M774.2 195.3l-3.9-.2M762.6 193.7l4.3 1.8M767.7 191.3l-.1 3.7M772.2 190.4l-2.1 4.6M736.3 303.2l0-.1-1.3-1.3 .3-1.8 .7-1.1 4.1-.4 .6 .5-.7 4.3-3.7-.2M744.3 303.7l-3.5 .3-.6 3 3.5 1.5 .5-.6 .1-4.2 .3-.2 3.7 1.2 .9 2.3M748.8 308.1l-4.6-.2M739.5 307.6l.7-.6M740 303.3l.8 .7M743.4 311.3l.3-2.8M752.5 279.7l-3.2 .3-1.1-3.7 4.6-1.1-.3 4.5 .7 .8M753.2 274.5l-.4 .7M746.4 275.3l1.8 1M754.5 288.7l-.9 0-.4 .4 .3 5.4 2.3-.6M753.3 283.7l-1.4 1.5 1.7 3.5M757.4 298.4l-4.2 .8-.4-4.2 .7-.5M752.8 295l-3.6-1.1 .6-3.6 3.4-1.2M743.3 268.1l-3.5-.9-.5-5.4-3.3 .6-1.4 3.7 1.1 .9 3.4 .6-1.1 3.7 1.7 1M739.8 267.2l-.7 .4M738 271.3l-2.6 1.3-.8-.9 1.1-4.7M739.8 275.2l-1.7 1.2-2.9-2.1 .2-1.7M717.1 274.8l-4.2-.2 .2-2.8 4-2.4 1.5 1.4-1.5 4 1.1 1.8-1.6 4.1 .3 .3 5.2-.9-.6 4.1 .9 .9-1.5 3 2.2 2 2.2-1 .7-3.1-1.1-1.2-2.5 .3M717.9 262.3l0 4.8-.9 1.6-4-2.6M713.1 271.8l-.9-.9M717.1 269.4l-.1-.7M725.8 280.4l3.3-.2 .9-.8 0-3.2-4.7-1.6-.3 5.2 .8 .6-.9 4.4M730 279.4l3.8 .7 1.1-5.5-4.3 .8-.6 .8M810.1 168.4l-2.1-.6-.4-5.3 .2-.2 3.1 .6 .6 1.8M806.7 168.4l1.3-.6M815.2 166.6l-1.8 .1M812.4 161.8l-1.5 1.1M657.8 177.6l-3.9-.2 0 3.7 1.1 .8 2.7-1.1 .6-1-.5-2.2 .4-.8-1-3.5M653 176.9l.9 .5M650.2 181.4l3.7-.3M654.1 185.7l.9-3.8M658.4 185.5l-.7-4.7M676.4 231.2l.8-.8-1-4.4-4.4-.5-.3 .3 1.2 4.2 3.7 1.2-.6 2.9M670.2 232.1l2.5-2.1M667.6 227l3.9-1.2M671.7 222l.1 3.5M677.1 225l-.9 1M681.2 231.4l3.9 .4 1.1-1.7-2.5-3.8-1.3 .1-1.4-4M677.2 230.4l3 0M685.9 235.4l-.8-3.6M689.1 229.6l-2.9 .5M684.7 225.3l-1 1M671.2 258.8l1.4 3.2 2.2 0 1.9-4.2-4.5 0-1 1-2.1-.5M671.6 263.1l1-1.1M672.7 253.9l-.5 3.9M677.4 257.2l-.7 .6M675.5 262.7l-.7-.7M708.9 295.1l.1-.8 3.1-2.1 1.6 .8-.2 2.2M709 294.3l-1.5-1.4-.2 0M713.7 293l3.5-.7 .6 .8M703 168.1l.9-1.6-.4-1.7-4.1-.5-.3 3.1 1 1.1 2.9-.4 1 3.5-4.9 .8 1-3.9M694.5 153.9l-.7 .6 .4 3.2 4.2 1.1 .3-4.1-1.3-1.2M699.1 167.4l-4.7 1.4-.5-.7 2.7-4.8 1.5-.3 1.3 1.3M694.2 157.7l-.9 1.6 .3 2.2 3 1.8M698.4 158.8l.9 1.1-1.2 3.1M693.9 168.1l-2.4-.7-.2-4.2 2.3-1.7M648.3 148.4l1.4 1.2 3.8-.8M658.2 149.7l1.1 .6 .8 3.2-1.2 .7-3.9-1.6 0-1.4M672.1 149.7l-3.2 1.3-.2 3.9 3.4 0 0-5.2 .1-.1-.9-4.1-3.5-.7-.6 .4-.3 4.5 2 1.3M649.1 159.9l.6-.7M653.5 164.3l1.5-1.7-1.2-3.9M655 162.6l3.4 .1 1.4-3-2.1-2.1-3.3 .3M658.9 154.2l-1.2 3.4M655 152.6l-1.5 1.5M649.7 149.6l.3 3.9M658.4 162.7l.6 1.2-.3 4 4.8-.2 .6 .7-1.5 4.5-3.5-1.7M660.1 153.5l2.1 .4 .1 5.4-2.5 .4M659.3 150.3l2.9-2.1 2 2.5-.8 2.6-1.2 .6M666.9 149.7l-2.7 1M668.7 154.9l-1.1 1-4.2-2.6M626.5 70.5l-.3 5.5M631.8 76.5l-5.4-.3M620.6 70.7l.4 5.6M626.4 82.8l-.2-.1M614.7 76l5.6 1M614.6 83.2l5.9-.8M821.5 118.2l.3-4.3-5.1-1.5-.8 .7-.1 5.1 1 .9 4.7-.9 1.3 1.8-2.3 5.8M816.2 121.5l.6-2.4M811.1 118.2l4.7 0M811.6 113.5l4.3-.4M816.4 109.6l.3 2.8M830 111.1l-2.3 1.9-4.5-.4-.8-7.1 6.9 1.2 .7 4.4 4.4 1.1 1.7-6M830.4 105.2l-1.1 1.5M821.8 113.9l1.4-1.3M834.4 112.2l1.2 1.4M850 110.4l-6.8 .7M848 119l-4-.6M842 119.9l-.3 5.1 8.4 1.5 .7-.9M841.7 125l-.7 1-5 .7-1.6-7.7 1.2-1.1M827.7 113l1.5 7 5.2-1M822.8 120l5.8 .6 .6-.6M821.7 127.7l7-2.5-.1-4.6M824.7 141.1l1.5 4.7 2.8-.3 .9-.6M833 150l-2.6 .1-1.4-4.6M834 149l-.1-3.1M852.3 132.5l-.1 2.6 4.7 .9 1.3-3.9-.5-.9-5.4 1.3-2.7-3.3-1.6 1.3-.2 5.4 4.4-.8 .1 5 .5 .4 .4 0M850.1 126.5l-.5 2.7M858.2 126.6l-.5 4.6M857.1 136.8l-.2-.8M861.3 133.4l-3.1-1.3M788.7 159.2l5.3-.5-1.4 5-3.6 .6-.3-5.1-.8-.8-3 0-5.1 1.8 .3-5.3 3.6 .6 1.2 2.9-.3 4.7-3.5-.1-1.1 3.7-3.2-.3-.3-1.6 3.3-3.3 1.3 1.5M798 167.3l-.5-3.5-4 .7 .7 2.7M787.9 158.4l2-4.8 3.4 .9 .9 4-.2 .2M776.8 166.4l-1.9 2.1 .8 2.6 4.4 .4 .1-4.6-.2-.2M779.8 161.5l-.3-.9 .3-.4M784.7 169.4l-1.3-2.1 1.8-3.6 3.6 .8-.1 1.1-4 3.8 .1 1.9 4.7 .7M789.9 168.7l-1.2-3.1M780.2 166.9l3.2 .4M784.6 163.1l.6 .6M789 164.3l-.2 .2M793.5 164.5l-.9-.8M780.5 171.8l3.4 .3 .2 4.4-3.8 .3-1-1.1 1.2-3.9-.4-.3M784.8 171.3l-.9 .8M776.1 175.9l3.2-.2M775.4 171.8l.3-.7M784.4 176.9l-.3-.4M779.5 180.5l.8-3.7M793.4 154.4l4.3-1.9 .1-3.2-4.2 .7-.2 4.4M815.9 132.2l-1.6 4.5-1.1 0-2.2-1.3 .4-3.9 .6-.8M819.6 136.2l-3.4 1.8-1.9-1.3M816.2 138l.4 3.2 4.6 .6 1.1-.8M820.8 144.9l5 1.4-.9 3.1-.9 .6-3.1-.1-1.1-3.5 1-1.5 .4-3.1M826.2 145.8l-.4 .5M816.6 141.2l-.8 1 0 2.8 .6 .6 3.4 .8M817.5 150.5l-1.5-1.2 .4-3.7M820.4 150.3l.5-.4M830.4 150.1l-1.3 .8-4.2-1.5M811.6 126.9l-2.9 .1-2.5 4.7 5.2-.2M807.3 122l-1.7 1.6 1.8 2.6 1.3 .8M786.5 123.2l1.9-.3 1.3 4.6-1 1.3-4.2-.4-.5-1.4 2.5-3.8-2.3-1-4 2.6 0 .5 3.8 1.7M739.5 190.9l.3 3.5-4.7 .7-.7-4.6M733.8 203.7l2.1-4.5 2.7 .7 .9 2.9M744.3 203l.2-2.7-3.8-2.4-2.1 2M743.4 130.9l1 1.4-1.5 3.6-2.7 .7M742.9 135.9l2.1 1.4 .8 3-2 2M754.4 127.5l3.6 .6 .5-.4-.1-2.6M762 161.8l4.3 2.9-1.1 2.3-3.2 1.4M767.2 172.3l-.1-3.8 3.7-.1-.8 4.5M767.1 168.5l-1.9-1.5M774.9 168.5l-3.2-1.1-.9 1M771.6 152.7l3.7 2.4 1.3-5.1-.7-.5-3.9 2.1-.4 1.1-1.5 1.1-2.8 .2-1.6-3.4-3-.5-.8 4.1 4.7 1 .7-1.2M775.9 149.5l-.5-2.2-2.9-1-2 2.6 1.5 2.7M770.5 148.9l-3.1-.6-.2-2.8 4.6-.4 .7 1.2M689.7 194.8l.3-3.4 4-.7 1.5 .8-.8 3.9M690 191.4l-.6-.9 .4-4.1 .8-.9 3.6 .7-.2 4.5M658.2 176.8l5-1.6 1.1 1.3-2.9 4.6-3.1-1.3M662.6 172.9l.6 1.4 0 .9M667.3 169.1l.8-5.8 2 .1 1.8 4.2-4.3 1.8-.3-.3-3.2-.7M663.2 174.3l4.8-3-.4-1.9M663.2 190.6l.3-5.1 3.2-.1 1.7 4.1M661.4 181.1l1.3 2 .2 1.9-3.8 .9M662.9 185l.6 .5M698.7 126.5l-1 5.5-1.2-.1-2.2-1.4-1.1-3.4M689 130.9l2.2 2.1 3.1-2.5M729.9 157.6l-1.2 1.5-2.9 .2 .2-4.4 1.5-1.1M733.6 162.8l-3.3 .1-1.6-3.8M720.8 167.4l1-.6-.2-3.8-.3-.5-4.9 2 .5 2.8M712.4 181.2l-4.6-.1-.8-3.5 1.4-1.5 3.9 .3 .9 4M708.6 168.2l-2 3.7 .7 .9 5.4-.9 .1-2.6-1.9-1.3-1.8 0-.5 .2-4.7-1.7M704 171.6l.6 .3 2 0M699.2 149.8l.8-.3M698.7 154.7l3.8 .1 .6-4M698.4 144.1l2.2 1.4M707.4 145.5l-2.8 .4M707.9 150.4l-.7 .5-3.2-.5M707.2 150.9l.4 4-4.4 1-.7-1.1M726 154.9l-4-.1-.2 4.2 3.7 .4 .3-.1M721.3 162.5l-.1-3-2.2-.3-3.3 4.4 .7 .9M725.5 159.4l.3 4.1-4.2-.5M721.8 159l-.6 .5M726.1 144l.1-1.2 3.6-1.3 .2 .1 1.3 3.8-.3 .6-4.9-2-.8 1.3-2.9-.1M725.5 141.7l.7 1.1M730.9 148.2l.1-2.2M725.9 148.7l-.6-3.4M729.6 137.3l.2 4.2M735.1 143.7l-3.8 1.7M734.2 141.1l-4.2 .5M721.4 172.8l-.3-.3M718.6 176.6l-.3-.3M716.5 167.8l-3.7 1.5M712.7 171.9l.5 1.4M712.3 176.4l.5-.7M708.4 176.1l-1.1-3.3M677.2 103.5l3.5 1.2M703.3 130.7l-.9 1.1-4.2 .5-.5-.3M704.2 136.6l-1-.8-.8-4M672.2 109.6l-.4 .4-4.7-.3-.2-.2M662.9 113.3l.5 1.1 4.4-.8-.7-3.9M659.6 118.8l3.5-.7 .3-3.7M671.8 110l-.9 3.5-2 .8-1.1-.7M658.3 122.6l.2 .4 3.8 1.9 1.9-3.4-1-3.3 4.8-.3 1.1 4.6 2.5-.2 1.6-3.2-.3-.7-4.4-.9-.5 .4M676.9 128l.5-4.5-4.2 .4-.5 3.7 3.7 .8 .5-.4 4.4 .5M777.9 113.3l2.1 1.3 1.6-1.2-1.6-2.4M852.7 140.7l.1-.2M852.3 140.1l-4.9-.2 .6 2.2M847.8 135.9l-.8 .9-.1 2.9 .5 .2M835.2 159l-1.4-.2-.5 2.9M835.3 154.8l-1.9 3.1 .4 .9M824.3 172.5l.4-3.9-.6-1-4.2-.2M824.7 168.6l.6 .1M820.3 162.3l1.5-.1M823.4 162.1l.8-.1 1 1.8M824.1 167.6l.2-.7M830.1 165.4l-.2-1.7-4.4 .6M832 163.1l-1.8 .3-.3 .3M602.3 142.5l-.2-.2-.5-6.2 .9-.8M595.8 130l.8 6.2 5-.1M590.7 135.9l5.4 .7 .5-.4M596.1 136.6l-.5 5.6-5.1 .7-.7 5.1 6.7 1 .4-.6-1.2-6.1 6.4 0M589.7 148.1l.1-.1M596.5 149l0 4.7-5.5 .9M602 147.5l-5.1 .9M589.7 142.1l.8 .8M601.2 154.8l1.3 6-.4 .4-5.5-.1-.5-.6 1-6.3 4.1 .6 1.1-.8M607.7 160.3l-5.2 .5M596.5 153.7l.6 .5M590.6 159.9l5.5 .6M595.7 166.5l.9-5.4M602.1 166.5l0-5.3M628.9 240.2l-1.9 1M626.7 246.3l-.7-.7M623 237.3l-.9 2.3 .2 .3M621.8 248.9l.6-4.1M613.7 244.9l.3-.5 3.3-.9 1.5 1.5M609.9 240.5l3.5-.4 .6 4.3M595.6 236.3l-1.2-.9M586.2 231.4l3.4-.6M599.9 231.9l-4.7-.6 .2-3.7M544.7 298.1l1.3-.6 4.1 1.5 .8 1.3-.5 1.7-3.9 1-.8-.5-1-4.4-4.7-1.8M547.9 294l-1.9 3.5M539.7 303.7l6-1.2M550.2 293.5l-.1 5.5M546.3 306.2l.2-3.2M554.2 294.6l0 3.8-3.3 1.9M560.2 263.4l-.7 2.4 .8 1.4 4.5 .8M560 272.2l-.7-1.6 1-3.4M550.2 258.1l1.4 4.2 2.1 .5 1.2-1.2M547.6 263.4l1.7 .5 2.3-1.6M545.9 268l4-.5-.6-3.6M698 279.6l2.6 5.3-1.3 .7-3.9-1.7M699.3 285.6l-.3 .8M601.2 212.6l3.3-1.1 1.1 .9-.6 4.6-4-1.2 .2-3.2-1.4-1.1M604.7 209.5l-.2 2M599.9 217l1.1-1.2M605.3 217.3l-.3-.3M608.4 212.7l-2.8-.3M648.5 272.1l1.8-1.7M648.9 266.3l.9 1.3M653.6 276.1l.5-3.8M655 266.6l-.3 .5M779.5 244.2l1.7 .3M802.6 104.2l-.3-2.1M725 279.8l-2.3-.1-.6 .4M721.5 284.2l-4-.9-.8 2.5 .5 2.5 .3 .3 3.4-.5M717.5 283.3l-.6-2.3M722.7 279.7l-2-3.5-2.5 .4M736 298.9l-.6-5.1 2.8-.7 2 1.1-.1 4.3M730.5 289.1l-.4-3.1 .3-.3 3.7-.9 .8 .7-.3 3.9-.5 1-3.6-1.3-.7 .8-.3 3.4-1.1 .1M738.2 293.1l1.3-4.5-4.9 .8M735.4 293.8l-.3-.2-1-3.2M749.8 290.3l-1.8-2.2-3.9 1.2-.4-.4-4.1-.3-1.1-2.6-3.6-.5M729.1 280.2l1.3 5.5M726 286l4.1 0M734.1 284.8l.7-3.9-1-.8M751.9 285.2l-2.6 .1-1.3 2.8M749.3 285.3l-1.6-1.7-3.9 1.2-.1 4.1M749.3 280l-1.6 1.3 0 2.3M753.6 301.9l-.6-2.4-4.1 .2-.1 4.2 4.8-2 .7 1M753.2 299.2l-.2 .3M748.3 304.7l.5-.8M748.2 294.2l-.7 4.8-2.5 .9-1.2-1 .1-5.4 .6-.4 3.7 1.1 1-.3M748.9 299.7l-1.4-.7M744.1 289.3l.4 3.8M740.2 294.2l3.7-.7M740.7 299l3.1-.1M744.6 303.5l.4-3.6M726.3 263.9l.2 2.3-3.8 1.5-1.1-1.5 .1-3.1 4.6 .8 1.3-1.9 3-.4 .4-.3 .4-3.6-4.2-.5-1.1 2.2 1.5 2.6M720.7 262.1l1 1M717.9 267.1l3.7-.9M731 253.7l-.2 .3-4.1 0-.2-.1M718.6 270.8l1.1 .1 2.4-1.1 .6-2.1M720.7 276.2l1.2-1.5-2.2-3.8M725.3 274.6l-.1-.2-3.3 .3M729.7 271.2l-4 1-.4-.6 1.3-5.3 4 2.1 .1 1.3-1 1.5 .9 4.2M725.2 274.4l.5-2.2M734.6 271.7l-3.9-2M735.2 274.3l-.3 .3M734.6 266.1l-2.5 .5-1.5 1.8M722.1 269.8l3.2 1.8M712.9 274.6l-.4 .4-3.5 0-.5-3.7M716.6 280.7l-3.1-.6-1-5.1M704.4 274.5l3.2 1.5 1.4-1M717.2 288.3l-5.4 .6-.5 .5 .8 2.8M717.2 292.3l.3-3.7M716.7 285.8l-4.3-.5-.6 3.6M709.2 280.7l-1.3 3.7-.5 .4-3.9-.1-.3-.2 0-2.8 1.1-1.8 3.2-1.2 1.7 2 4.2-.6-1.2 5 .2 .2M691.5 167.4l-1.7 .6-2.7-.5-.9-2.4 3.6-2.6 1.5 .7M694.4 168.8l1 3.3 3.4 .6 .3-.3M653.7 127l.6 .9 3.1 .1 1.1-5M655.4 140.3l2.1 0 2.3-4.6-.5-.6-4.7 1.5-.5-4.4-.8-.8-3.4 .8-.5 4.2 .3 .3 4.9 0 .8 3.6-.9 1.2M647.9 130.4l2 1.8M644.2 136.7l5.2-.3M654.3 127.9l-1 3.5M649.9 141l-.2-4.3M666.1 159.3l-3.7 0 .6 4.6 .9 .8 3.5-1.8-1.3-3.6 1.4-2 .1-1.4M668.1 163.3l-.7-.4M670.1 163.4l1.7-1.3 .8-2.3-5.1-2.5M659 163.9l4 0M663.5 167.7l.4-3M830.4 132.2l2.7 .8 2.4-1.5-.1-4.2-5.5-.6-.8 3.4 1.3 2.1-2.3 3.4M832.7 136.7l.4-3.7M825 131.7l4.1-1.6M828.7 125.2l1.2 1.5M836 126.7l-.6 .6M841 126l1.7 5.7-4.7 1.8-.1 2.2 1 2.1 3.4-1.3 1.2-2.2-.7-2.5 5.2-1.3M847 136.8l-3.5-2.5M842.3 136.5l2.2 4.2 2.4-1M833.1 137.1l4.8-1.4M835.5 131.5l2.5 2M833.8 140.1l4.9 .1 .2-2.4M776.6 150l2.9 .8 .5 4-4.2 1.2-.5-.9M783.7 155.5l1.2-1.6-1.6-3.7-3.8 .6 1.2-4.8-1.3-1.4-3.9 2.6-.2-6.1-2.9 .6-.6 3.4M789.9 153.6l-.9-1-4.1 1.3M793.6 150l-1-1.3-3.7 2.7 .1 1.2M797.5 163.8l1.3-1.5-.9-3-3.7-.8M802.6 167.5l.1-3.5-3.9-1.7M807.6 162.5l-4.3 1-.6 .5M807.6 153.7l-1 .9-.1 3.1 1.1 1.1 4.1-1.5 0-1.9-4.1-1.7 1-3.6-1.3-1.2-4.1 2.4-.4 1.7 3.8 1.6M811.9 157.5l-.2-.2M811.7 155.4l1.4-2.2 2.5 .5M807.8 162.3l-.2-3.5M806.5 157.7l-3.5 .6 .3 5.2M811 135.4l-2.4 .7-.9-.5-1.5-3.9-2.2-.3-1.3 1 .1 4.6 .2 .2 4.7-1.6M792.6 148.7l.2-3.2 .8-.4 3.9 1.2 .8 1.9-.5 1.1M807.4 126.2l-4 2.6 .6 2.6M803.5 117.7l-1.4 1.6M805.6 123.6l-2.9-.5M798.1 114.7l.9 4M803.4 128.8l-1.2-1.3 0-3.9M794.4 122.2l2.6 1M784.5 128.4l-1.3 2.4-1.9 .7-2.8-4.3 1.7-1.9M793.6 145.1l.7-4.6 3.4-1.4 .4 .8 .3 5.3-.9 1.1M788.9 119.9l-5.2-1.8 1.3-4.1 3.4 .7 .5 5.2M784.2 122.2l-1.5-3.2 1-.9M788.5 122.7l-.1 .2M793.8 115l-.6-.7-4 0-.8 .4M798.9 111l-1.6-1 .7-4.4 3.2 .4M793.2 114.3l.9-3.9 3.2-.4M789.2 114.3l.2-5.1 3.8 .1 .9 1.1M781.6 113.4l2.9-.1 .4-3-3-1.3M734.6 195.7l.2 1.6-4.4 3.4-.5-.4 1.5-4.8 3.2 .2 .5-.6M735.9 199.2l-1.1-1.9M739.8 194.4l.7 .5 .2 3M730.3 194.9l1.1 .6M731.5 203.3l-1.1-2.6M725.8 198.9l4.1 1.4M749.7 199.5l-2.8-1.3M744.5 200.3l1.3-1.6M748.8 193.9l-.7 .4M740.5 194.9l2.3-.5M762.3 141.7l0 4.1-.2 .3-3.9-1.4-.7-1.2 1-2.9 2.8 .3 1 .8 4.1-.2 .5 .7 4.9-.9-1.4-4.4-3.6-.4-.4 5M753 136.9l.6 3.8 4.7-.4-.6-2.5-4.7-.9-.9-.7 1.6-4-.9-1.1-4.6 .2-.7 1 1.3 3.3 1.8 1 1.5-.4M761.3 140.9l2.4-4.6-1.7-1.2-3.4 .6-.9 2.1M758.3 140.3l.2 .3M752.8 128.5l0 2.6M748.1 130.1l.1 1.2M753.7 132.2l2.5 0 1.8-4.1M758.6 135.7l-1.2-2.6-1.2-.9M744.4 132.3l3.1 0M745 137.3l3.8-1.7M749.1 140.8l-.3 4.7 4.5-.1 .4-.6-1-3-3.5-1.1-.1 .1-3.3-.5M748.7 145.6l.1-.1M750.6 136.6l-1.4 4.1M753.6 140.7l-.9 1.1M754.4 149.2l-1.1-3.8M757.5 143.5l-3.8 1.3M758.2 144.7l-.8 5.7 4.4-.9 .3-3.4M754.8 149.6l2.4 .9 .2 3.7M757.4 150.4l-.2 .1M762.3 145.8l4.7-.6 .2 .3M767.4 148.3l-1.7 2.3M761.8 149.5l.9 .6M766.6 155.2l-.7 3-3.3 1M761.4 154.6l.5-.4M765.9 158.2l.6 .5 1.2 5-1.4 1M771.7 167.4l-1-3.2-3-.5M779.4 144.6l-.3-3.3-3.7-.2-.6-4.3-4.2 0 1.7-4.6 2.2 .1 1.1 3.5-.8 1M767 145.2l-.1-3M766.8 136.5l-.1-.1-3-.1M772.4 141.7l-.6-.4M707.1 182l-4.1-1 1.1 5 2.8-.1 .2-3.9 .7-.9M707.7 186.5l-.8-.6M699.1 195.9l.7-.9-2-4-2.3 .5M702.9 195.1l-.4-.3 .7-3.6 4.1-.5M702.5 194.8l-2.7 .2M682.1 177.6l2.9-.2 2.3 3.4-1.8 1.4-3.2-1.2-.2-3.4-1.2-.8-3.9 1.7 0 .9 3.5 3.6 1.8-2M664.3 176.5l1.3 .6 1.9-.9 1.5-3.8-1-1.1M662.7 183.1l3.8-3.4-.9-2.6M669 172.4l3.6 .8 .2 3.4-1 .8-4.3-1.2M690.6 144.5l4.8 .1-.8-3.6-4.6 0 .6 3.5-.9 1.9-3.3-1.2-.3-4.3 3.4-.3 .5 .4M679.5 148.7l2 3-.3 1.3-5 .4-.9-3.1 1.6-1.7 2.6 .1 2.4-3.2-.7-1.9 0-1.9 .6-.6 4.3-.2-.4-5.6 .4-.4 4.5 1.5-1.1 4.2M696.5 131.9l-3 4.3-2.3-.3 0-2.9M686.1 134.9l-.1-1.4M690.6 136.4l.6-.5M689.7 146.4l.3 2-5.1 1.1-.9-2.9 2.4-1.4M694.4 148.5l-4.3 0 0 4.4-3 .8-1.7 2.2 .2 1.6 1.2 1.6 1.4 .2 .7-.4 2.5-5-1.3-1M695.6 144.8l-.2-.2M729.6 163.8l-3.3 .3-1.5 3.4 1.2 1.6 3.3-.5 .7-.6-.4-4.2 .7-.9M725.8 163.5l.5 .6M733.6 168.2l-3.6-.2M721.8 166.8l3 .7M731 173.9l-1.7-5.3M725.2 172.1l.8-3M715.7 163.6l-1.8-.9-2 1.4-1 3.9M717.6 146.3l.3 3 4.1 .5-1.1-3.7M725.2 149.8l-2.3 .8-1.4 3.2 .5 1M722.9 150.6l-.9-.8M681.8 127.4l-2.7-4.5-.9-.1-.8 .7M673.2 123.9l-1.6-1.6M672.7 127.6l-.5 .3-4.5-1.5 .6-3.2 .8-.7M664.2 121.5l4.1 1.7M673.2 119.1l3.8 .7 1.2 3M668.9 114.3l-.4 3.2M672.9 118.4l.6-3-2.6-1.9M662.1 146.9l2.2-1.6-2.2-4.6-1.9 .9-.9 3.7 2.8 1.6 .1 1.3M667.2 145.2l-2.9 .1M657.4 146l1.9-.7M657.5 140.3l2.7 1.3M838.7 143.2l.6-2.2 4.7 .2 .1 2M844.5 140.7l-.5 .5M838.7 140.2l.6 .8M834.4 145.3l4-1M824.1 157.9l-.1-3.1 .7-1.5 4.2 1.1 .3 .8 0 1.7-.7 .8-3.8 .8-.6-.6-3.9-.4M820.1 153.8l3.9 1M824.2 162l.5-3.5M830.2 163.4l-1.7-5.7M824 150l.7 3.3M829.1 150.9l-.2 3.5M833.6 153.1l-4.4 2.1M833.4 157.9l-4.2-1M818.3 190.1l-1.6-.1M816.5 190.8l.3 1.6M615 239l2.1 .7 1-.4 .4-4.2-.9-1.4-3.3 2.7 .7 2.6-1.6 1.1M617.3 243.5l-.2-3.8M613.5 235.8l.8 .6M617.7 232l-.1 1.7M622.1 239.6l-4-.3M622.1 235.8l-3.6-.7M562.5 302.3l-2.6 1-1.6-3.9 1.5-2.5M560.4 307.6l-.5-.6-.2-3.3 .2-.4M554.2 298.4l1.2 .8 2.9 .2M550.4 302l.9 1.1 4-.1 .1-3.8M559.7 303.7l-3.6-.1-.8-.6M554.4 270.7l-3.3-.7-.8-2.1 4.2-2.8 1.2 1-1 4.3-.3 .3 .4 4M550.5 270.8l.6-.8M559.3 270.6l-4.6-.2M559.5 265.8l-3.8 .3M549.9 267.5l.4 .4M553.7 262.8l.8 2.3M707.5 292.9l.5-3.4-3.1 .1M711.3 289.4l-2.6-.7-.7 .8M735.3 300l-2.1-1.2M735.1 293.6l-3.9 1.2-.3 .7M726.5 291.8l-.3-2 3.6 .1M731.2 294.8l-1.7-1.5M725.3 289.1l.9 .7M723.1 290.1l-.2 1M738.5 286l1.4-2.3M743.8 284.8l-1-1M734.8 280.9l3.5-.6M747.7 281.3l-3.7-2.1M738.1 276.4l.6 3.2M735.8 256.5l-.6 .4-.5 4.7 1.3 .8M730.8 254l.9 3.3 3.5-.4M707.6 276l-.1 2.7M702.2 276.1l2.1 3.8M712.2 285.1l-4.3-.7M699.2 278.7l4 3M700.6 284.9l2.6-.4M708.7 288.7l-1.3-3.9M703.6 288.8l-.1-4.1M686.2 165.1l-1.6-1.7-4 0-.3 .3 .2 3.4 5.6 1.4 1-1M689.8 168l-.1 4.8 4.7 .5 1-1.2M698.3 178l.1 2.7 .6 .6 3.3-.9 1.5-3-.6-1-3.5-1.2-1.4 2.8-4.3-2.4 .4-2.3M698.8 172.7l.9 2.5M707 177.6l-3.2-.2M703 181l-.7-.6M704.6 171.9l-1.4 4.5M662.1 140.7l.3-.3-.3-3.1-.5-.7-1.8-.9M788.1 150l-4.2-.5 0-3.3 1.6-1.4 2.8 .7-.2 4.5 .8 1.4M783.3 150.2l.6-.7M792.8 145.5l-3.2-.6-1.3 .6M780.7 146l3.2 .2M785.5 144.8l-1.3-3.6 1-1 4.3 .8 .1 3.9M784.2 141.2l-4-.9-1.1 1M798.5 158.8l3.2-1.2 .2-3.9-3.8-.8 .4 5.9-.6 .5M803 158.3l-1.3-.7M797.7 152.5l.4 .4M802.8 153l-.9 .7M813.2 136.7l-2.3 4.8-2.8-.9 .5-4.5M815.8 142.2l-4.9-.6-.1 3.2 1.9 1.6 3.1-1.4M798.3 148.2l3.1 .5 1.8 2.6M802.2 127.5l-3.9 1.3-1.4-2.2 .8-2.4M793.2 123.1l.3 4.1 3.4-.6M789.7 127.5l3.2 .2 .6-.5M783.2 130.8l2.5 2-.9 3-4.2-.3-.2-2.4 .9-1.6M784.8 135.8l1.4 1.4-1 3M780.2 140.3l-.1-4.1 .5-.7M778.5 127.2l-2 .4-1.1 4 5 1.5M785.7 132.8l3.2-.8 0 4.7 1.4 3.3 3.1-.1-.8-3.9-3.7 .7-2.7 .5M788.7 128.8l.2 3.1 4.6 .9-.3 2.5 5 2.5-.5 1.3M798 105.6l-.5-.5-3.7-.8-.6 5M797.5 105.1l1.4-2.8M794 101.9l0 .1 0-.1M784.5 113.3l.5 .7M789.4 109.2l-.7-.5-3.7 1.5-.7-4.9 .6-.8-1.7-2.5M779.1 122.3l-4.3 1.3-.6-1.4 2.4-3.9 2.1 .3 .3 .3 .1 3.4 1.1 2.5M776.5 127.6l-1.9-1.3 .2-2.7M782.7 119l-3.7-.1M775.6 115.3l1 2.9-5.1-.2M771.3 118.2l-.7 3.2 3.6 .8M780 114.6l-1.3 4M770.6 121.4l-.3 .3 1.8 5 2.5-.4M767.4 120.5l.9 1.7 2-.5M774.5 162.4l-2.8 .7-.8-4 1.1-1.1 3.1-.3 .9 2.1-1.5 2.6 2 2.4M770.7 164.2l1-1.1M779.5 160.6l-3.5-.8M766.5 158.7l4.4 .4M775.8 156l-.7 1.7M770.1 153.8l1.9 4.2M768.3 122.2l-1.4 1.4 .2 2.9 3.4 1.5 1.6-1.3M766.9 123.6l-3.4-1.2-1.5 1.5-1.7 .1M765.6 131.2l-.7-3-1.6-.3-2.3 1 0 2.1 1.2 1.6 3.4-1.4 1.4 1.4 3.7-1.8-.2-2.8M767.1 126.5l-2.2 1.7M766.7 136.4l.3-3.8M762 135.1l.2-2.5M757.4 133.1l3.6-2.1M758.5 127.7l2.5 1.2M762 123.9l1.3 4M698.5 190l3.7-.1 1.2-3.6-4.5-1.7-1.2 1.3 .8 4.1-.7 1M703.2 191.2l-1-1.3M694.2 186.2l.6-.2 2.9-.1M704.1 186l-.7 .3M699 181.3l-.1 3.3M694.8 186l-.4-5.4 4 .1M681.3 198.2l.7-3.3 2.1-.8 2.3 1.2M672.5 189.8l.2-.1 3.1 1.1 .5 1.4-3.1 3.9M677.3 198.9l.2-5.6-1.2-1.1M682 194.9l-1.5-1.2-3-.4M666.5 179.7l2.1 1.7 2.4-1.2 .8-2.8M666.7 185.4l1.5-1.2 .4-2.8M693.8 136.5l1.6 3.4 3.4-.4 .3-2.5-.6-1-4.7 .5-.3-.3M694.6 141l.8-1.1M698.2 132.3l.3 3.7M699.1 139.9l-.3-.4M703.2 135.8l-4.1 1.2M684.9 149.5l-.1 .3 2.3 3.9M693.8 154.5l-2.4-.6M693.3 159.3l-4.4-.4M684.6 163.4l2.2-4.3M680.6 163.4l0-4.1 5-1.8M689.8 162.5l-1.6-3.2M680.6 159.3l-1.1-1.4 2.1-4.2 3.8 2.2M703.2 155.9l-.2 3.1 5.7 .4-.5 2.9-.7 .8-3.3 .7-1.3-4.7-3.6 .8M713.9 162.7l-1.1-3.8-3.2-.3-.9 .8M711.9 164.1l-3.7-1.8M709.6 158.6l-1-2.9-1-.8M703.5 164.8l.7-1M709.1 168l-1.6-4.9M717.9 149.3l-.8 1.2 1.1 3 3.3 .3M712.1 150l.3 .4 4.7 .1M708.6 155.7l4-3-.2-2.3M682.5 119.2l-3.3 3.6 4.3 .5M677 119.8l.9-1.8 3-.4 1.5 1.2M681.4 113.8l-.1 .1-4.6 .3-.2-.1-.3-4 4.4-1 .4 .9M680.8 108.8l-.2 .3M675.9 109.9l.3 .2M673.5 115.4l3-1.3M680.9 117.6l.4-3.7M677.9 118l-1.2-3.8M554.3 307.3l-2.3 0-.8 .9-.5 2.9 4.8 .7 .5-.3-.1-3.2-1.6-1 1.8-3.7M551.3 303.1l.7 4.2M559.9 307l-4 1.3M559.6 312.4l-3.6-.9M550.4 311.6l.3-.5M546.5 306.5l4.7 1.7M554.7 316.4l.8-4.6M734.7 261.6l-3.7-.3M731.7 257.3l-.3 .4M726.7 254l.5 3.2M732.1 266.6l-1.5-5M722.4 258.6l3.7 .8M680.9 176.8l-.2-3.4-3.5-1.3-1 5.8 .8 .6M686.1 168.5l-1.3 3.2-2.6 .4-1.8-4.7 .1-.3M672.8 168l1 3.9 3.2 0 .9-2.9-3-2.4-2.1 1.4-.9-.4M672.6 173.2l1.2-1.3M671.8 162.1l4 2.6-.9 1.9M675.8 164.7l2-1.1 2.5 .1M680.4 167.4l-2.5 1.6M676.2 177.9l-3.4-1.3M677.2 172.1l-.2-.2M680.7 173.4l1.5-1.3M693.6 176l-3.9 .6-.2 4.4 .8 .6 3.4-1.3-.1-4.3 .4-.4M694.4 180.6l-.7-.3M690.6 185.5l-.3-3.9M688.9 173.5l.7 2.9-4.2 .5 .7-3.8 2.8 .4 .8-.7M689.7 176.6l-.1-.2M684.8 171.7l1.3 1.4M685 177.4l.4-.5M687.3 180.8l2.2 .2M657.4 128l.7 .4-.1 3.9-3.9-.1M659.3 135.1l-.1-1.6-1.2-1.2M813.1 153.2l-1.3-3-3.2-.1M816 149.3l-4 .6-.2 .3M812 149.9l.7-3.5M804.2 145.9l2.6 .9 .2-.2 .5-5.8-3.1-.2-1.4 1.8-.3 1.2 1.5 2.3-2.8 2.8M807.3 148.9l-.5-2.1M798.4 145.2l4.3-1.6M810.8 144.8l-3.8 1.8M808.1 140.6l-.6 .2M798.1 139.9l4.9 2.5M803 137.2l1.4 3.4M770.7 130.8l1.6 1.4M775.4 131.6l-.9 .7M770.4 136.9l.2-.1M780.1 136.2l-4.5-.4M789.5 141l.8-1M794.3 140.5l-.9-.6M793.5 132.8l.8-.7 3.6-.1 .3 5.7 4.6-.7M792.6 136l.6-.7M798.3 128.8l-.4 3.2 4.8 .4M792.9 127.7l1.4 4.4M788.7 108.7l-.4-4.5 5.4-.1 .3-2-.2-.2M788.6 101.3l-.4 .7 0 2.1 .1 .1M788.2 102l-1-.9M684.1 194.1l.5-3.3-3-1.1-1.1 4M689.8 186.4l-4.9-.7 .4 4.6 4.1 .2M685.5 182.2l-.6 3.4-3.7 .3-.9-1.1-3.3 .1-.9 5.6 4.6-2 .5-2.6M685.3 190.3l-.7 .5M675.1 182.4l1.2 2.1-3.8 3-1-2 2.1-3.1 1.5 0 1.9-3M671 180.2l2.6 2.2M668.2 184.2l3.3 1.3M672.7 189.7l-.2-2.2M678.2 157.7l-2.5-3.2-2.2 1.1-.5 3.8 2.6 .5 2.6-2.2 1.3 .2M677.8 163.6l-2.2-3.7M672.6 159.8l.4-.4M672.1 154.9l1.4 .7M672.2 149.6l3.1 .7M675.7 154.5l.5-1.1M681.6 153.7l-.4-.7M676.9 148.6l-.5-2.5 4.8-2.5M681.9 145.5l2.1 1.1M684.8 149.8l-3.3 1.9M713.9 154.4l3.6-.3-.1 4.1-4.2 .4 .7-4.2-1.3-1.7M718.2 153.5l-.7 .6M712.8 158.9l.4-.3M719 159.2l-1.6-1M662.4 140.4l4.3 .2 1.1-3.7-.3-.7-5.4 1.1M667.8 144.8l-.3-3-.8-1.2M676.4 146.1l-1.4-1.6-3.1 .4-.6 .6M676.4 128.4l0 3-3.6 1.6-1.5-1 .9-4.1M663 127.2l4.2-.4 1 5.8-.8 .7-2.7-.8-1.9-1.8-.3-2.5 .5-1-.7-2.3M667.7 126.4l-.5 .4M658.1 128.4l4.4-.2M659.2 133.5l3.6-2.8M671.3 132l-3.1 .6M661.6 136.6l3.1-4.1M667.5 136.2l-.1-2.9M784.3 105.3l-2.3 .8M788.2 104.1l-3.3 .4M680.5 183l-.2 1.8M676.3 184.5l.7 .4M681.6 189.7l-.9-1.2M675.8 190.8l.3-.3M667.5 141.8l4.2-1.5-.3-2.5-3.6-.9M672.8 133l.7 3.1-2.1 1.7M671.9 144.9l.2-4.3-.4-.3M675 144.5l1.9-3.7-4.8-.2M673.5 136.1l2.5 .9 .9 3.8 4.3 .9M685.7 135.3l-3.9 1.2 0 4.6M680.7 135.3l-4.1 1.3 .4-4.8 3.5 .8 .2 2.7 1.1 1.2M676 137l.6-.4M682 130.7l-1.5 1.9M676.4 131.4l.6 .4" fill="none" stroke="#0a0f0c" stroke-width="1.4" stroke-linecap="round"/>
<polygon points="261.3,18.8 262.4,27.0 266.1,37.1 268.4,43.8 269.0,54.6 269.9,66.8 268.7,81.3 266.1,100.3 263.2,109.1 267.1,122.0 267.3,125.8 268.2,137.2 264.9,145.6 271.2,155.1 272.9,166.9 280.3,177.1 286.6,184.3 286.6,188.6 291.7,196.5 293.4,201.5 293.4,205.7 300.8,214.8 306.5,221.8 307.6,229.7 309.7,231.5 318.5,232.2 325.3,236.3 332.1,237.7 334.4,241.6 338.9,243.2 344.6,248.6 346.3,255.4 347.8,257.7 375.1,255.2 374.1,258.3 416.6,273.8 449.2,273.8 449.2,267.8 468.3,267.8 474.3,272.9 481.2,278.9 486.3,283.5 489.1,291.4 492.5,297.3 500.5,301.9 506.8,304.7 510.2,301.9 512.5,294.7 519.8,294.0 526.7,294.7 531.8,299.9 536.9,308.4 542.0,316.1 548.1,323.9 550.6,332.2 553.4,337.9 563.1,342.3 569.9,343.6 575.0,343.6 573.3,335.3 572.8,326.4 576.2,319.4 583.6,312.3 596.1,305.1 602.3,299.9 612.6,295.3 618.8,294.7 630.2,297.3 635.9,298.0 641.6,301.2 648.4,303.2 654.1,303.8 658.7,300.6 663.2,304.5 666.1,304.5 663.8,299.9 662.1,295.3 663.2,290.7 662.6,288.8 668.9,286.8 674.6,286.8 679.1,288.1 684.8,287.5 691.7,286.8 698.5,286.1 704.7,289.4 709.3,295.6 714.4,295.1 720.7,291.4 725.2,290.7 731.5,296.0 735.5,302.5 739.4,305.8 738.3,314.8 737.7,319.4 738.9,323.2 742.9,330.3 744.6,334.1 748.5,337.9 750.3,344.2 755.4,348.0 757.6,353.7 763.3,353.7 766.7,349.9 768.7,345.9 769.8,334.1 768.2,327.7 765.0,319.4 764.1,311.6 761.1,305.8 756.5,296.6 754.2,287.5 753.9,282.2 755.4,275.5 759.4,266.2 760.5,264.2 764.5,260.8 770.7,256.1 778.1,250.0 781.5,243.9 786.7,239.8 792.9,239.1 796.3,233.6 803.2,229.5 809.4,228.8 814.5,223.9 821.0,220.7 821.4,213.4 818.5,207.1 817.2,202.2 815.7,196.8 811.7,195.8 812.3,187.2 810.6,177.1 810.0,166.9 814.5,160.3 813.4,166.9 814.0,177.1 817.9,182.9 816.0,193.6 823.1,182.9 826.5,174.9 825.9,169.8 821.9,162.5 820.8,159.6 825.3,164.0 827.8,167.9 833.9,161.0 837.3,155.9 838.4,145.5 838.4,143.2 843.0,143.5 852.1,141.0 862.8,136.1 862.3,132.7 866.9,131.9 871.4,129.6 876.5,128.9 884.5,127.3 882.2,120.8 878.3,125.4 876.5,122.0 872.6,116.6 877.1,112.0 874.6,108.9 876.5,105.0 881.7,98.0 881.7,96.4 886.2,94.0 894.2,90.9 903.3,86.1 911.2,82.1 918.6,78.1 916.4,72.5 914.7,71.7 913.0,65.2 909.0,63.6 909.1,41.0 902.9,36.1 896.5,39.2 892.8,34.5 883.9,47.2 883.4,52.1 881.1,60.3 874.8,68.5 871.7,70.1 866.9,74.9 830.5,74.9 823.6,78.1 816.2,85.3 811.7,89.3 813.4,97.2 805.4,101.9 797.5,102.4 787.2,101.1 780.7,102.5 782.7,108.1 777.0,114.3 769.0,119.7 761.1,123.5 750.8,129.6 741.7,131.1 737.2,129.6 730.9,126.6 734.3,122.0 736.6,116.6 741.7,112.8 742.6,106.6 740.6,97.2 736.6,90.1 731.5,92.5 726.4,96.4 730.3,86.9 731.5,74.9 730.3,69.3 720.1,64.4 716.3,62.3 713.3,68.5 707.0,71.7 700.8,78.9 696.2,90.9 698.5,103.5 698.5,115.9 692.8,125.8 687.7,127.8 684.3,125.8 683.1,122.0 681.4,114.3 680.5,105.8 682.6,94.8 688.2,76.5 691.1,70.1 679.1,82.1 683.7,73.3 689.9,62.8 701.9,59.5 708.7,57.1 716.3,60.8 724.6,58.7 730.3,58.7 720.7,50.5 713.8,46.3 706.4,48.0 694.5,51.3 686.0,49.6 682.6,44.7 674.0,44.7 680.8,34.3 675.7,35.5 668.3,42.2 651.8,48.8 647.3,43.0 634.8,47.2 632.5,46.3 642.2,37.1 652.4,29.6 661.5,25.3 647.8,23.6 640.5,21.1 638.2,24.5 630.2,19.4 625.7,15.9 617.7,15.1 604.0,13.3 597.8,1.5 597.8,8.2 283.6,8.2 286.0,16.8 288.9,26.2 287.2,37.1 282.0,40.5 284.9,32.1 283.8,23.6 275.2,22.8" fill="none" stroke="#0a0f0c" stroke-width="1.5" stroke-linejoin="round"/>
<g font-family="Liberation Sans, sans-serif">
<circle cx="278.0" cy="4.5" r="2.3" fill="#fff" stroke="#333" stroke-width="1.1"/><text x="283.0" y="8.7" font-size="11.9" fill="#2e2e2e" stroke="#fff" stroke-width="2.6" stroke-linejoin="round" paint-order="stroke">Vancouver</text>
<circle cx="334.0" cy="236.5" r="2.3" fill="#fff" stroke="#333" stroke-width="1.1"/><text x="329.5" y="240.7" font-size="11.9" text-anchor="end" fill="#2e2e2e" stroke="#fff" stroke-width="2.6" stroke-linejoin="round" paint-order="stroke">Los Angeles</text>
<circle cx="345.5" cy="256.0" r="2.3" fill="#fff" stroke="#333" stroke-width="1.1"/><text x="341.0" y="260.2" font-size="11.9" text-anchor="end" fill="#2e2e2e" stroke="#fff" stroke-width="2.6" stroke-linejoin="round" paint-order="stroke">San Diego</text>
<circle cx="538.3" cy="346.5" r="2.3" fill="#fff" stroke="#333" stroke-width="1.1"/><text x="543.3" y="350.7" font-size="11.9" fill="#2e2e2e" stroke="#fff" stroke-width="2.6" stroke-linejoin="round" paint-order="stroke">Monterrey</text>
<circle cx="768.5" cy="346.0" r="2.3" fill="#fff" stroke="#333" stroke-width="1.1"/><text x="773.5" y="350.2" font-size="11.9" fill="#2e2e2e" stroke="#fff" stroke-width="2.6" stroke-linejoin="round" paint-order="stroke">Miami</text>
<circle cx="742.3" cy="379" r="2.6" fill="#fff" stroke="#333" stroke-width="1.1"/><circle cx="742.3" cy="379" r="1.1" fill="#333"/>
<text x="747.5" y="383.2" font-size="11.9" fill="#2e2e2e" stroke="#fff" stroke-width="2.6" stroke-linejoin="round" paint-order="stroke">Havana</text>
<circle cx="842.4" cy="67.0" r="2.3" fill="#fff" stroke="#333" stroke-width="1.1"/><text x="837.9" y="71.2" font-size="11.9" text-anchor="end" fill="#2e2e2e" stroke="#fff" stroke-width="2.6" stroke-linejoin="round" paint-order="stroke">Montreal</text>
<circle cx="776.3" cy="97.0" r="2.3" fill="#fff" stroke="#333" stroke-width="1.1"/><text x="781.3" y="101.2" font-size="11.9" fill="#2e2e2e" stroke="#fff" stroke-width="2.6" stroke-linejoin="round" paint-order="stroke">Toronto</text>
<text x="876.0" y="121.4" font-size="11.9" fill="#2e2e2e" stroke="#fff" stroke-width="2.6" stroke-linejoin="round" paint-order="stroke">Boston</text>
<text x="843.4" y="146.5" font-size="11.9" fill="#2e2e2e" stroke="#fff" stroke-width="2.6" stroke-linejoin="round" paint-order="stroke">New York</text>
<g clip-path="url(#notus)"><text x="812.5" y="173.6" font-size="11.9" fill="#2e2e2e" stroke="#fff" stroke-width="2.6" stroke-linejoin="round" paint-order="stroke">Washington</text></g>
<text x="483" y="374.5" font-size="16.5" font-weight="bold" fill="#222" stroke="#fff" stroke-width="2.6" stroke-linejoin="round" paint-order="stroke" textLength="59" lengthAdjust="spacingAndGlyphs">Mexico</text>
<text x="921" y="47.5" font-size="9.2" fill="#4a4a4a" stroke="#fff" stroke-width="2.6" stroke-linejoin="round" paint-order="stroke" textLength="12.5" lengthAdjust="spacing">NB</text>
<text x="960.5999999999999" y="59.5" font-size="9.2" fill="#4a4a4a" stroke="#fff" stroke-width="2.6" stroke-linejoin="round" paint-order="stroke" textLength="12" lengthAdjust="spacing">PE</text>
<text x="923.5" y="83.80000000000001" font-size="9.2" fill="#4a4a4a" stroke="#fff" stroke-width="2.6" stroke-linejoin="round" paint-order="stroke" textLength="67.5" lengthAdjust="spacing">NOVA SCOTIA</text>
<text x="654" y="351" font-size="10.3" fill="#3c86a3" text-anchor="middle">Gulf of</text><text x="654" y="361" font-size="10.3" fill="#3c86a3" text-anchor="middle">America</text>
<text x="412" y="331" font-size="10" fill="#3c86a3" text-anchor="middle" transform="rotate(55 412 328)">Gulf of California</text>
<text x="735.5" y="329.5" font-size="8.6" fill="#7a3fa0" opacity=".75" textLength="40" lengthAdjust="spacing" stroke="#e6d9f2" stroke-width="1.2" paint-order="stroke">FLORIDA</text>
</g>
</svg>
<div id="mtype"><b>Map</b><i></i><span>Satellite</span></div><div id="fs"><svg width="40" height="40" viewBox="0 0 40 40"><path d="M12 17v-5h5M23 12h5v5M28 23v5h-5M17 28h-5v-5" fill="none" stroke="#666" stroke-width="1.8"/></svg></div><div id="cam"><svg width="40" height="40" viewBox="0 0 40 40"><path d="M16 12.500l4-4 4 4M16 27.500l4 4 4-4M12.500 16l-4 4 4 4M27.500 16l4 4-4 4" fill="none" stroke="#666" stroke-width="2"/></svg></div><div id="attr"><span>Keyboard shortcuts</span><span>Map data ©2026 Google, INEGI</span><span>Terms</span></div><div class="abs" style="left:9px;top:358px;font-size:18.5px;letter-spacing:-.6px;font-weight:normal;line-height:22px;white-space:nowrap;text-shadow:0 0 1.500px #fff,0 0 1.500px #fff,0 0 2px #fff,0 0 2px #fff"><span style="color:#4285f4">G</span><span style="color:#ea4335">o</span><span style="color:#fbbc05">o</span><span style="color:#4285f4">g</span><span style="color:#34a853">l</span><span style="color:#ea4335">e</span></div>
</div>
<div class="row" style="top:529px;height:187px"><div class="rh"></div><div class="xb"><svg width="34" height="34" viewBox="0 0 34 34"><path d="M10 10l14 14M24 10L10 24" stroke="#555" stroke-width="1.500" fill="none"/></svg></div><div class="st">IL</div><div class="cn">Cook</div><div class="chip g" style="left:892.5px;width:71px"><tt>0</tt>&nbsp; in Cart</div><div class="chip b" style="left:972.5px;width:111px"><tt>2304</tt>&nbsp; Available</div><div class="exp"><svg width="34" height="34" viewBox="0 0 34 34"><path d="M11.500 20l5.500-5.500 5.500 5.500" stroke="#333" stroke-width="1.700" fill="none"/></svg></div><div class="box" style="left:9px"><h4>Final Expense</h4><div class="abs" style="left:8px;top:49.500px;font-weight:bold;font-size:16.500px;line-height:20px;color:#222">A</div><div class="abs" style="left:27px;top:53px;font-family:'Liberation Mono',monospace;font-size:12px;line-height:16px;color:#333;-webkit-text-stroke:.35px #333">$1.00</div><div class="abs" style="left:481px;top:44px;width:64px;height:30px;border:1px solid #5aaef5;border-radius:3px;text-align:center;line-height:28px;font-size:12.300px;font-weight:bold;color:#1e88e5;letter-spacing:.4px">2304</div></div><div class="box" style="left:572px"><h4>Mortgage Protection</h4><div class="abs" style="left:8px;top:49.500px;font-size:16.500px;line-height:20px;color:#aaa">A</div><div class="abs" style="left:510px;top:48px;font-size:11px;line-height:18px;color:#999">0</div></div><div id="selbtn"><svg class="abs" style="left:447.4px;top:7.2px" width="22.5" height="22.5" viewBox="0 0 24 24"><path fill="#2090ee" d="M14 10H3v2h11v-2zm0-4H3v2h11V6zm4 8v-4h-2v4h-4v2h4v4h2v-4h4v-2h-4zM3 16h7v-2H3v2z"/></svg><span>SELECT LEADS FOR COOK</span></div></div><div class="row c" style="top:724px;height:44px"><div class="rh"></div><div class="xb"><svg width="34" height="34" viewBox="0 0 34 34"><path d="M10 10l14 14M24 10L10 24" stroke="#555" stroke-width="1.500" fill="none"/></svg></div><div class="st">TX</div><div class="cn">Dallas</div><div class="chip g" style="left:892.5px;width:71px"><tt>0</tt>&nbsp; in Cart</div><div class="chip b" style="left:972.5px;width:111px"><tt>1810</tt>&nbsp; Available</div><div class="exp"><svg width="34" height="34" viewBox="0 0 34 34"><path d="M11.500 14.500l5.500 5.500 5.500-5.500" stroke="#333" stroke-width="1.700" fill="none"/></svg></div></div><div class="row c" style="top:776px;height:44.5px"><div class="rh"></div><div class="xb"><svg width="34" height="34" viewBox="0 0 34 34"><path d="M10 10l14 14M24 10L10 24" stroke="#555" stroke-width="1.500" fill="none"/></svg></div><div class="st">MO</div><div class="cn">St. Louis</div><div class="chip g" style="left:908.5px;width:71.5px"><tt>0</tt>&nbsp; in Cart</div><div class="chip b" style="left:988px;width:95.5px"><tt>31</tt>&nbsp; Available</div><div class="exp"><svg width="34" height="34" viewBox="0 0 34 34"><path d="M11.500 14.500l5.500 5.500 5.500-5.500" stroke="#333" stroke-width="1.700" fill="none"/></svg></div></div>
<div id="divl"></div>
<svg class="abs" style="left:1031px;top:837.8px" width="23.5" height="23.5" viewBox="0 0 24 24"><path fill="#2090ee" d="M7 18a2 2 0 1 0 0 4 2 2 0 0 0 0-4zm10 0a2 2 0 1 0 0 4 2 2 0 0 0 0-4zM7.200 14.630c-.01.040-.01.080 0 .120a.250.250 0 0 0 .250.250H19v2H7a2 2 0 0 1-2-2c0-.350.070-.690.240-1l1.360-2.410L3 4H1V2h3.270l.940 2 .950 2 2.240 4.730.130.270h7.020l2.760-5 1.100-2 1.750.960-3.860 7.010c-.360.620-1.030 1.030-1.750 1.030H8.100l-.9 1.630zM9 6h4V4l3 3-3 3V8H9V6z"/></svg><div id="vc">VIEW CART</div>
<div id="botline"></div>
</body>
</html>
